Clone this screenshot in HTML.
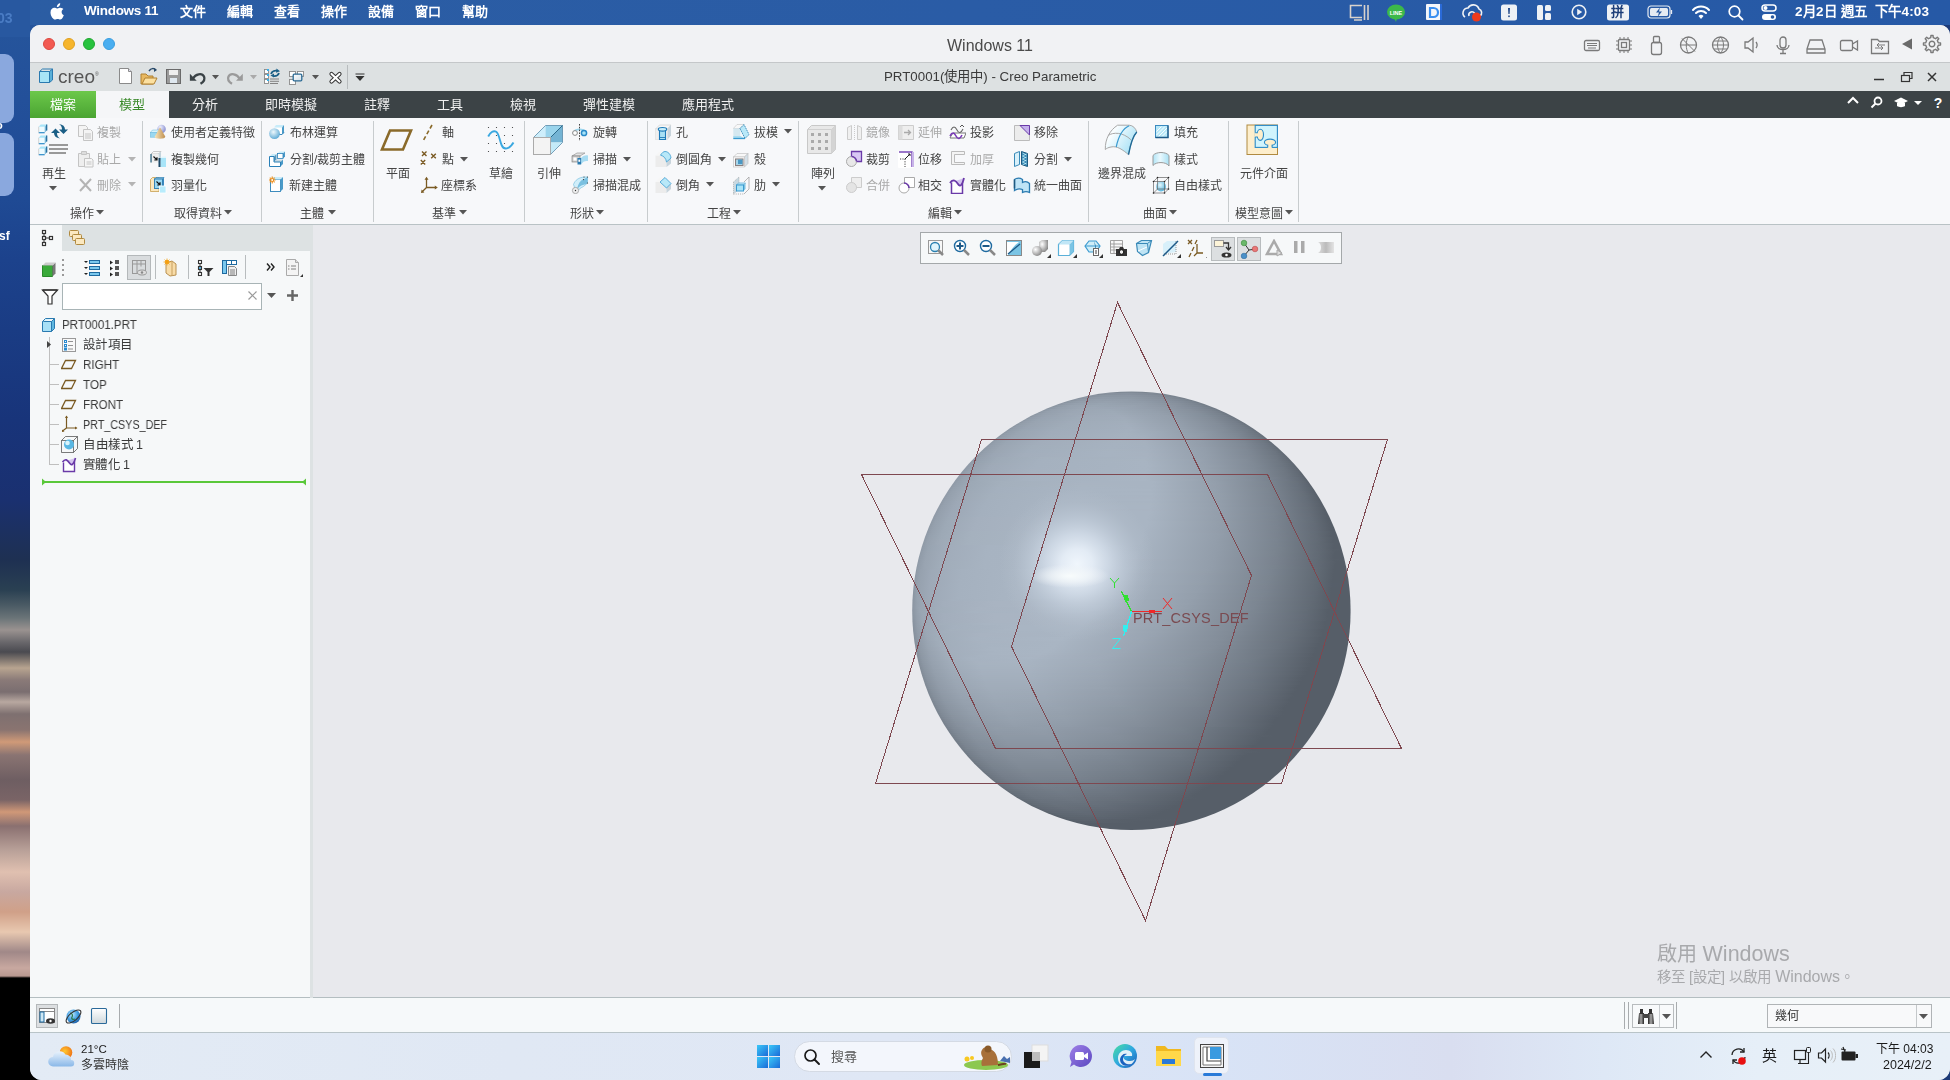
<!DOCTYPE html>
<html lang="zh-TW"><head><meta charset="utf-8">
<style>
*{margin:0;padding:0;box-sizing:border-box}
html,body{width:1950px;height:1080px;overflow:hidden;font-family:"Liberation Sans",sans-serif;}
body{position:relative;background:#1c3a78}
.a{position:absolute}
.t{position:absolute;white-space:nowrap;line-height:1;will-change:transform}
#desk{left:0;top:0;width:40px;height:1080px;background:linear-gradient(180deg,#26569c 0px,#23509a 100px,#1f4a94 200px,#1c428c 260px,#1a3c84 330px,#18347a 420px,#1a3070 500px,#1e3052 560px,#2a4052 590px,#4a5a64 605px,#6a7478 618px,#9a9290 630px,#6a686c 642px,#4a4a50 652px,#b8a490 668px,#8a7a78 680px,#7a6e70 692px,#b8a8a0 702px,#7e7070 714px,#8a7470 730px,#d09a78 742px,#8a7472 755px,#6e5e62 780px,#7a6466 800px,#d09878 812px,#8a7070 826px,#b8a098 850px,#e0c0b0 872px,#c8a8a0 892px,#d0a088 912px,#e8c8b0 932px,#a08888 952px,#c8a8a0 968px,#b89890 976px,#000 978px,#000 1080px)}
#menubar{left:0;top:0;width:1950px;height:25px;background:linear-gradient(90deg,#2b5da3,#2a5ca6 50%,#2659a6)}
#win{left:30px;top:25px;width:1920px;height:1055px;background:#f1f2f4;border-radius:10px 10px 12px 12px;overflow:hidden}
#titlebar{left:0;top:0;width:1920px;height:38px;background:#f1f2f4;border-bottom:1px solid #c4c7c9}
#creobar{left:0;top:38px;width:1920px;height:28px;background:#dde1e2}
#tabs{left:0;top:66px;width:1920px;height:27px;background:#3c4346}
#ribbon{left:0;top:93px;width:1920px;height:107px;background:#f7f8fa;border-bottom:1px solid #b9c2c5}
#tree{left:0;top:200px;width:280px;height:772px;background:#f6f8f9}
#gfx{left:282px;top:200px;width:1640px;height:772px;background:#e8e9ed}
#status{left:0;top:972px;width:1920px;height:36px;background:#f6f9fa;border-top:1px solid #b4bec1;border-bottom:1px solid #b9c4c8}
#taskbar{left:0;top:1008px;width:1920px;height:47px;background:linear-gradient(90deg,#e3ebf5 0%,#e0e8f4 25%,#dfe7f5 45%,#d8e3f6 62%,#d9def0 74%,#dee8f6 82%,#e6eff8 90%,#e8f0f8 100%)}
.mb{top:5px;font-size:13px;color:#fff;font-weight:bold}
.dot{width:12px;height:12px;border-radius:50%}
.tb{top:7px;font-size:13px;color:#f0f0f0}
</style></head><body>
<div id="desk" class="a">
<div class="a" style="left:-10px;top:54px;width:24px;height:69px;border-radius:9px;background:#8aa8de"></div>
<div class="a" style="left:-10px;top:133px;width:24px;height:63px;border-radius:9px;background:#8aa8de"></div>
<div class="t" style="left:-4px;top:120px;font-size:11px;color:#fff;font-weight:bold">o</div>
<div class="t" style="left:-1px;top:230px;font-size:12px;color:#fff;font-weight:bold">sf</div>
</div>
<div id="menubar" class="a">
  <div class="a" style="left:0;top:0;width:30px;height:37px;background:#2858a0"></div><div class="t" style="left:-3px;top:11px;font-size:14px;color:#4a7cc4;font-weight:bold">03</div>
  <svg class="a" style="left:50px;top:3px" width="15" height="17" viewBox="0 0 15 17"><path fill="#fff" d="M10.2 0.3c0.1 1-0.3 2-0.9 2.7-0.6 0.7-1.5 1.2-2.4 1.1-0.1-1 0.3-2 0.9-2.6 0.6-0.7 1.6-1.2 2.4-1.2zM13.4 5.9c-0.1 0.1-1.8 1-1.8 3.1 0 2.4 2.2 3.3 2.2 3.3s-1.5 4.3-3.5 4.3c-1 0-1.6-0.6-2.6-0.6-1.1 0-1.7 0.6-2.6 0.6C3.2 16.6 0.5 13 0.5 9.4c0-3 2-4.600 3.8-4.6 1.1 0 2 0.7 2.7 0.7 0.6 0 1.6-0.8 2.8-0.8 0.5 0 2.3 0 3.6 1.2z"/></svg>
  <div class="t" style="left:84px;top:4px;font-size:13.5px;font-weight:bold;color:#fff;letter-spacing:-0.3px">Windows 11</div>
  <div class="t mb" style="left:180px">文件</div>
  <div class="t mb" style="left:227px">編輯</div>
  <div class="t mb" style="left:274px">查看</div>
  <div class="t mb" style="left:321px">操作</div>
  <div class="t mb" style="left:368px">設備</div>
  <div class="t mb" style="left:415px">窗口</div>
  <div class="t mb" style="left:462px">幫助</div>
  <svg class="a" style="left:1348px;top:3px" width="22" height="19" viewBox="0 0 22 19"><g fill="none" stroke="#d8d2cc" stroke-width="1.6"><path d="M14 2.5H2.5V14.5H14"/><path d="M16.5 2v15M20 2v15M6 17H14"/></g></svg>
  <svg class="a" style="left:1386px;top:4px" width="20" height="18" viewBox="0 0 20 18"><ellipse cx="10" cy="8" rx="9" ry="7.5" fill="#3cb84a"/><path d="M8 14l2 4 1-4z" fill="#3cb84a"/><text x="10" y="10.5" font-size="5.5" font-weight="bold" fill="#fff" text-anchor="middle" font-family="Liberation Sans">LINE</text></svg>
  <svg class="a" style="left:1425px;top:3px" width="18" height="19" viewBox="0 0 18 19"><rect x="1" y="1" width="15" height="16" fill="#f4f6fa" rx="1"/><rect x="15" y="1" width="2" height="16" fill="#2a6ad8"/><path d="M5 5h3.5a4.5 4.5 0 010 9H5z" fill="none" stroke="#3a8ff0" stroke-width="2.2"/></svg>
  <svg class="a" style="left:1461px;top:3px" width="23" height="20" viewBox="0 0 23 20"><g fill="none" stroke="#f0f2f5" stroke-width="1.6"><path d="M4 14a5 5 0 013-9 6 6 0 0111 1 4 4 0 011 7"/><path d="M8 13a3 3 0 016-2"/></g><circle cx="15.5" cy="14" r="4.5" fill="#ee3a1c"/></svg>
  <svg class="a" style="left:1500px;top:4px" width="18" height="17" viewBox="0 0 18 17"><rect x="1" y="0.5" width="16" height="16" rx="2.5" fill="#eef1f5"/><path d="M8 4h2l-.4 6h-1.2z" fill="#234a8a"/><rect x="8.2" y="11.5" width="1.6" height="1.6" fill="#234a8a"/></svg>
  <svg class="a" style="left:1536px;top:4px" width="17" height="17" viewBox="0 0 17 17"><rect x="1" y="1" width="6" height="15" rx="1.5" fill="#eef1f5"/><rect x="9" y="1" width="6" height="6" rx="1.5" fill="#eef1f5"/><rect x="9" y="9" width="6" height="7" rx="1.5" fill="#eef1f5"/></svg>
  <svg class="a" style="left:1570px;top:3px" width="18" height="18" viewBox="0 0 18 18"><circle cx="9" cy="9" r="6.8" fill="none" stroke="#eef1f5" stroke-width="1.6"/><path d="M7.2 5.8v6.4l5-3.2z" fill="#eef1f5"/></svg>
  <svg class="a" style="left:1606px;top:4px" width="24" height="17" viewBox="0 0 24 17"><rect x="1" y="0.5" width="22" height="16" rx="2.5" fill="#eef1f5"/></svg>
  <div class="t" style="left:1611px;top:5px;font-size:13px;color:#1c3d78;font-weight:bold">拼</div>
  <svg class="a" style="left:1647px;top:5px" width="28" height="15" viewBox="0 0 28 15"><rect x="1" y="1" width="22" height="12" rx="3" fill="none" stroke="#e6ebf2" stroke-width="1.2"/><rect x="3" y="3" width="18" height="8" rx="1.5" fill="#e6ebf2"/><path d="M24.5 5v4" stroke="#e6ebf2" stroke-width="1.3"/><path d="M13 2.5l-4 5h3l-1.5 4.5 4.5-5.5h-3z" fill="#2a5aa0"/></svg>
  <svg class="a" style="left:1691px;top:4px" width="20" height="16" viewBox="0 0 20 16"><g fill="none" stroke="#fff" stroke-width="2" stroke-linecap="round"><path d="M2 6a11 11 0 0116 0"/><path d="M5 9a7 7 0 0110 0"/></g><path d="M7.5 12a3.5 3.5 0 015 0L10 15z" fill="#fff"/></svg>
  <svg class="a" style="left:1727px;top:4px" width="18" height="17" viewBox="0 0 18 17"><circle cx="7.5" cy="7.5" r="5.3" fill="none" stroke="#fff" stroke-width="1.7"/><path d="M11.5 11.5l4 4" stroke="#fff" stroke-width="1.8" stroke-linecap="round"/></svg>
  <svg class="a" style="left:1761px;top:4px" width="16" height="17" viewBox="0 0 16 17"><rect x="1" y="1" width="14" height="6" rx="3" fill="none" stroke="#fff" stroke-width="1.5"/><circle cx="4.5" cy="4" r="2" fill="#fff"/><rect x="1" y="10" width="14" height="6" rx="3" fill="#fff"/><circle cx="11.5" cy="13" r="1.8" fill="#2a5aa0"/></svg>
  <div class="t" style="left:1795px;top:5px;font-size:13.5px;color:#fff;font-weight:bold;letter-spacing:0.2px">2月2日 週五&nbsp; 下午4:03</div>
</div>
<div id="win" class="a">
  <div id="titlebar" class="a">
    <div class="a dot" style="left:13px;top:13px;background:#f25a52;border:0.5px solid #dd4840"></div>
    <div class="a dot" style="left:33px;top:13px;background:#f6b52c;border:0.5px solid #e0a020"></div>
    <div class="a dot" style="left:53px;top:13px;background:#28c23e;border:0.5px solid #20a830"></div>
    <div class="a dot" style="left:73px;top:13px;background:#4aaef0;border:0.5px solid #3a9ee0"></div>
    <div class="t" style="left:917px;top:12.5px;font-size:16px;color:#4a4a4a">Windows 11</div>
    <svg class="a" style="left:1550px;top:8px" width="370" height="24" viewBox="0 0 370 24"><g fill="none" stroke="#7a7a7a" stroke-width="1.3">
      <rect x="4.5" y="7.5" width="15" height="10" rx="1.5"/><path d="M7 10.5h10M7 12.5h10M8 15h8" stroke-width="1"/>
      <rect x="38.5" y="6.5" width="11" height="11" rx="1"/><rect x="41.5" y="9.5" width="5" height="5"/><path d="M40 4v2M44 4v2M48 4v2M40 18v2M44 18v2M48 18v2M36 8h2M36 12h2M36 16h2M50 8h2M50 12h2M50 16h2" stroke-width="1"/>
      <rect x="71.5" y="9.5" width="10" height="12" rx="2"/><rect x="73.5" y="3.5" width="6" height="6" rx="1"/>
      <circle cx="108.5" cy="12" r="8"/><path d="M102 5.5l13 13M101 12h15M108.5 4c-3 3-3 13 0 16" stroke-width="1"/>
      <circle cx="140.5" cy="12" r="8"/><path d="M132.5 12h16M140.5 4c-4 4-4 12 0 16M140.5 4c4 4 4 12 0 16M134 8h13M134 16h13" stroke-width="1"/>
      <g transform="translate(-30,0)"><path d="M195 9h3l5-4v14l-5-4h-3z"/><path d="M206 9c1.5 2 1.5 4 0 6"/>
      <rect x="230" y="4" width="6" height="11" rx="3"/><path d="M227 12c0 6 12 6 12 0M233 17v3M230 20.5h6"/>
      <path d="M257 16l3-9h12l3 9v4h-18z"/><path d="M257 16h18"/>
      <rect x="290.5" y="7.5" width="12" height="10" rx="1.5"/><path d="M302.5 11l5-3v9l-5-3"/>
      <path d="M321.5 6.5h6l2 2h9v12h-17z"/><path d="M325 15h8M331 13l2 2-2 2M335 12h-8M329 10l-2 2 2 2" stroke-width="1"/>
    </g></g>
    <path d="M322 11l10-5.5v11z" fill="#6a6a6a"/>
    <g transform="translate(352,11)" fill="none" stroke="#7a7a7a" stroke-width="1.4"><circle r="2.8"/><path d="M-1.25 -6.28 L-1.09 -8.53 L1.09 -8.53 L1.25 -6.28 L3.56 -5.32 L5.26 -6.80 L6.80 -5.26 L5.32 -3.56 L6.28 -1.25 L8.53 -1.09 L8.53 1.09 L6.28 1.25 L5.32 3.56 L6.80 5.26 L5.26 6.80 L3.56 5.32 L1.25 6.28 L1.09 8.53 L-1.09 8.53 L-1.25 6.28 L-3.56 5.32 L-5.26 6.80 L-6.80 5.26 L-5.32 3.56 L-6.28 1.25 L-8.53 1.09 L-8.53 -1.09 L-6.28 -1.25 L-5.32 -3.56 L-6.80 -5.26 L-5.26 -6.80 L-3.56 -5.32Z" stroke-linejoin="round"/></g>
    </svg>
  </div>
  <div id="creobar" class="a">
    <svg class="a" style="left:8px;top:5px" width="16" height="16" viewBox="0 0 16 16"><path d="M1.5 3.5h10v11h-10z" fill="#a8e4f6" stroke="#2a7ab0"/><path d="M11.5 3.5l3-2.5v11l-3 2.5z" fill="#5ab0d8" stroke="#2a7ab0"/><path d="M1.5 3.5l3-2.5h10" fill="none" stroke="#2a7ab0"/></svg>
    <div class="t" style="left:28px;top:4px;font-size:19px;color:#555;letter-spacing:0px">creo<span style="font-size:5px;vertical-align:top;position:relative;top:5px">&#174;</span></div>
    <svg class="a" style="left:88px;top:0" width="260" height="28" viewBox="0 0 260 28">
      <path d="M1.5 5.5h9l3 3v12h-12z" fill="#fff" stroke="#8a8a8a"/><path d="M10.5 5.5v3h3" fill="#dde" stroke="#8a8a8a"/>
      <path d="M23 11h5l2 2h5v8h-12z" fill="#e8b860" stroke="#b08030"/><path d="M24 21l3-6h12l-3 6z" fill="#fce0a0" stroke="#b08030"/><path d="M31 8c2-3 5-3 7-1" fill="none" stroke="#2a4a6a" stroke-width="1.5"/><path d="M36 5l3 2-3 2z" fill="#2a4a6a"/>
      <rect x="48.5" y="6.5" width="14" height="14" fill="#9a9a9a" stroke="#6a6a6a"/><rect x="51" y="7" width="9" height="5" fill="#eee"/><rect x="52" y="15" width="7" height="5" fill="#dfe8f0"/>
      <path d="M75 15.5C77.5 11 84 9.5 86 13.5C87.3 16.5 85.5 19 82.5 20.8" fill="none" stroke="#3a4246" stroke-width="2.3"/><path d="M71.9 10.8v7h6.8z" fill="#3a4246"/><path d="M94 12h7l-3.5 4.3z" fill="#555"/>
      <path d="M121.5 15.5C119 11 112.5 9.5 110.5 13.5C109.2 16.5 111 19 114 20.8" fill="none" stroke="#9a9a9a" stroke-width="2.3"/><path d="M124.8 10.8v7h-6.8z" fill="#9a9a9a"/><path d="M132 12h7l-3.5 4.3z" fill="#aaa"/>
      <g fill="#fff" stroke="#8a8a8a" stroke-width="0.9"><rect x="146.5" y="6.5" width="4" height="4"/><rect x="146.5" y="11.5" width="4" height="4"/><rect x="146.5" y="16.5" width="4" height="4"/></g><g fill="#3ab0e8"><rect x="149" y="6" width="2" height="2"/><rect x="149" y="11" width="2" height="2"/><rect x="149" y="16" width="2" height="2"/></g><path d="M152 16h9M152 18.3h9M152 20.5h8" stroke="#777" stroke-width="0.9"/>
      <path d="M153 11c1-3 4-4 7-3" fill="none" stroke="#1b5f86" stroke-width="1.8"/><path d="M158.5 5.5l3.5 2.8-4 1.5z" fill="#1b5f86"/><path d="M161 10c-1 2.5-3.5 3.5-6 3" fill="none" stroke="#1b5f86" stroke-width="1.8"/><path d="M156 14.5l-3.5-2 3.5-2z" fill="#1b5f86"/>
      <g fill="#fff" stroke="#8a8a8a" stroke-width="0.9"><rect x="171.5" y="8.5" width="6" height="5"/><rect x="179.5" y="8.5" width="6" height="5"/><rect x="171.5" y="16.5" width="6" height="5"/></g><defs><linearGradient id="wg" x1="0" y1="0" x2="1" y2="1"><stop offset="0" stop-color="#fff"/><stop offset="1" stop-color="#cfdde6"/></linearGradient></defs><rect x="175.2" y="11.2" width="8.6" height="6.6" rx="1" fill="url(#wg)" stroke="#2a6a94" stroke-width="1.3"/><path d="M194 12h7l-3.5 4.3z" fill="#555"/>
      <path d="M213.5 11l8 7.5M221.5 11l-8 7.5" stroke="#333" stroke-width="4.2" stroke-linecap="round"/><path d="M213.5 11l8 7.5M221.5 11l-8 7.5" stroke="#fff" stroke-width="2.2" stroke-linecap="round"/>
    </svg>
    <div class="a" style="left:317px;top:2px;width:1px;height:24px;background:#b8bcbe"></div>
    <svg class="a" style="left:325px;top:10px" width="10" height="10" viewBox="0 0 10 10"><path d="M0.5 1h9" stroke="#333" stroke-width="1"/><path d="M0.5 3h9l-4.5 5z" fill="#333"/></svg>
    <div class="t" style="left:854px;top:7px;font-size:13.3px;color:#3a3a3a">PRT0001(使用中) - Creo Parametric</div>
    <svg class="a" style="left:1840px;top:4px" width="80" height="20" viewBox="0 0 80 20"><path d="M4 12.5h10" stroke="#333" stroke-width="1.5"/><rect x="31.5" y="8.5" width="8" height="6" fill="none" stroke="#333" stroke-width="1.2"/><path d="M34 8.5v-3h8v6h-2.5" fill="none" stroke="#333" stroke-width="1.2"/><path d="M58 6l8 8M66 6l-8 8" stroke="#333" stroke-width="1.5"/></svg>
  </div>
  <div id="tabs" class="a">
    <div class="a" style="left:0;top:0;width:66px;height:27px;background:linear-gradient(180deg,#6cc84a,#4aa432)"></div>
    <div class="t tb" style="left:20px;color:#fff">檔案</div>
    <div class="a" style="left:66px;top:0;width:73px;height:27px;background:#f5f6f8"></div>
    <div class="t tb" style="left:89px;color:#3a8a2a">模型</div>
    <div class="t tb" style="left:162px">分析</div>
    <div class="t tb" style="left:235px">即時模擬</div>
    <div class="t tb" style="left:334px">註釋</div>
    <div class="t tb" style="left:407px">工具</div>
    <div class="t tb" style="left:480px">檢視</div>
    <div class="t tb" style="left:553px">彈性建模</div>
    <div class="t tb" style="left:652px">應用程式</div>
    <svg class="a" style="left:1812px;top:2px" width="108" height="20" viewBox="0 0 108 20"><path d="M6 10l5-5 5 5" fill="none" stroke="#fff" stroke-width="2"/><circle cx="36" cy="8" r="3.5" fill="none" stroke="#fff" stroke-width="1.8"/><path d="M33.5 10.5l-4 4" stroke="#fff" stroke-width="2"/><path d="M52 8l7-3.5 7 3.5-7 3.5z" fill="#fff"/><path d="M55 10v3c2 1.5 6 1.5 8 0v-3" fill="#fff"/><path d="M72 8h8l-4 4z" fill="#fff"/><text x="96" y="15" font-size="14" font-weight="bold" fill="#fff" text-anchor="middle" font-family="Liberation Sans">?</text></svg>
  </div>
  <div id="ribbon" class="a"></div>
  <div id="tree" class="a"></div>
  <div id="gfx" class="a"></div>
  <div id="status" class="a"></div>
  <div id="taskbar" class="a"></div>
</div>
<div class="a" style="left:142px;top:121px;width:1px;height:101px;background:#c8ccce"></div>
<div class="a" style="left:261px;top:121px;width:1px;height:101px;background:#c8ccce"></div>
<div class="a" style="left:373px;top:121px;width:1px;height:101px;background:#c8ccce"></div>
<div class="a" style="left:524px;top:121px;width:1px;height:101px;background:#c8ccce"></div>
<div class="a" style="left:647px;top:121px;width:1px;height:101px;background:#c8ccce"></div>
<div class="a" style="left:798px;top:121px;width:1px;height:101px;background:#c8ccce"></div>
<div class="a" style="left:1088px;top:121px;width:1px;height:101px;background:#c8ccce"></div>
<div class="a" style="left:1228px;top:121px;width:1px;height:101px;background:#c8ccce"></div>
<div class="a" style="left:1298px;top:121px;width:1px;height:101px;background:#c8ccce"></div>
<div class="t" style="left:69.5px;top:207.5px;font-size:12px;color:#444;">操作</div>
<svg class="a" style="left:96px;top:210.0px" width="8" height="5" viewBox="0 0 8 5"><path d="M0 0h8L4 4.5z" fill="#555"/></svg>
<div class="t" style="left:173.5px;top:207.5px;font-size:12px;color:#444;">取得資料</div>
<svg class="a" style="left:224px;top:210.0px" width="8" height="5" viewBox="0 0 8 5"><path d="M0 0h8L4 4.5z" fill="#555"/></svg>
<div class="t" style="left:300px;top:207.5px;font-size:12px;color:#444;">主體</div>
<svg class="a" style="left:328px;top:210.0px" width="8" height="5" viewBox="0 0 8 5"><path d="M0 0h8L4 4.5z" fill="#555"/></svg>
<div class="t" style="left:432px;top:207.5px;font-size:12px;color:#444;">基準</div>
<svg class="a" style="left:459px;top:210.0px" width="8" height="5" viewBox="0 0 8 5"><path d="M0 0h8L4 4.5z" fill="#555"/></svg>
<div class="t" style="left:569.5px;top:207.5px;font-size:12px;color:#444;">形狀</div>
<svg class="a" style="left:596px;top:210.0px" width="8" height="5" viewBox="0 0 8 5"><path d="M0 0h8L4 4.5z" fill="#555"/></svg>
<div class="t" style="left:706.5px;top:207.5px;font-size:12px;color:#444;">工程</div>
<svg class="a" style="left:733px;top:210.0px" width="8" height="5" viewBox="0 0 8 5"><path d="M0 0h8L4 4.5z" fill="#555"/></svg>
<div class="t" style="left:928px;top:207.5px;font-size:12px;color:#444;">編輯</div>
<svg class="a" style="left:954px;top:210.0px" width="8" height="5" viewBox="0 0 8 5"><path d="M0 0h8L4 4.5z" fill="#555"/></svg>
<div class="t" style="left:1143px;top:207.5px;font-size:12px;color:#444;">曲面</div>
<svg class="a" style="left:1169px;top:210.0px" width="8" height="5" viewBox="0 0 8 5"><path d="M0 0h8L4 4.5z" fill="#555"/></svg>
<div class="t" style="left:1235px;top:207.5px;font-size:12px;color:#444;">模型意圖</div>
<svg class="a" style="left:1285px;top:210.0px" width="8" height="5" viewBox="0 0 8 5"><path d="M0 0h8L4 4.5z" fill="#555"/></svg>
<svg class="a" style="left:38px;top:124px" width="31" height="32" viewBox="0 0 31 32"><path d="M0.7 2.7h6v6h-6z" fill="#eefbff"/><path d="M0.7 2.7l2-2.2h6l-2 2.2z" fill="#a8e4f8"/><path d="M0.7 8.7h6" stroke="#2a8ac8" stroke-width="1.2"/><path d="M0.7 2.7v6" stroke="#c8c8c8" stroke-width=".8"/><path d="M6.7 2.7l2-2.2v6l-2 2.2z" fill="#7ab8d8"/><path d="M8.7 0.5v6" stroke="#1e6a9a" stroke-width="1.2"/><path d="M0.7 13.7h6v6h-6z" fill="#eefbff"/><path d="M0.7 13.7l2-2.2h6l-2 2.2z" fill="#a8e4f8"/><path d="M0.7 19.7h6" stroke="#2a8ac8" stroke-width="1.2"/><path d="M0.7 13.7v6" stroke="#c8c8c8" stroke-width=".8"/><path d="M6.7 13.7l2-2.2v6l-2 2.2z" fill="#7ab8d8"/><path d="M8.7 11.5v6" stroke="#1e6a9a" stroke-width="1.2"/><path d="M0.7 24.7h6v6h-6z" fill="#eefbff"/><path d="M0.7 24.7l2-2.2h6l-2 2.2z" fill="#a8e4f8"/><path d="M0.7 30.7h6" stroke="#2a8ac8" stroke-width="1.2"/><path d="M0.7 24.7v6" stroke="#c8c8c8" stroke-width=".8"/><path d="M6.7 24.7l2-2.2v6l-2 2.2z" fill="#7ab8d8"/><path d="M8.7 22.5v6" stroke="#1e6a9a" stroke-width="1.2"/><path d="M17.5 4.5l-4.5 4.5h3c0 3 2 5 6 5.5-2-1-3-3-3-5.5h3z" fill="#1b5f86"/><path d="M25.5 10l4.5-4.5h-3c0-3-2-5-6-5.5 2 1 3 3 3 5.5h-3z" fill="#1b5f86"/><path d="M11 21h19M11 25h19M11 29h17" stroke="#999" stroke-width="1.8"/></svg>
<div class="t" style="left:41.5px;top:167.5px;font-size:12px;color:#444;">再生</div>
<svg class="a" style="left:49px;top:185.5px" width="8" height="5" viewBox="0 0 8 5"><path d="M0 0h8L4 4.5z" fill="#555"/></svg>
<svg class="a" style="left:77px;top:124px" width="17" height="17" viewBox="0 0 17 17"><path d="M1.5 1.5h7l2 2v9h-9z" fill="#f4f4f4" stroke="#c4c4c4"/><path d="M6.5 5.5h7l2 2v9h-9z" fill="#f4f4f4" stroke="#c4c4c4"/><path d="M8 10h6M8 12h6M8 14h6" stroke="#c4c4c4"/></svg>
<div class="t" style="left:97px;top:126.5px;font-size:12px;color:#a9a9a9;">複製</div>
<svg class="a" style="left:77px;top:150px" width="17" height="18" viewBox="0 0 17 18"><path d="M1.5 3.5h11v13h-11z" fill="#eee" stroke="#c4c4c4"/><path d="M4.5 1.5h5v3h-5z" fill="#ddd" stroke="#c4c4c4"/><path d="M7.5 8.5h7l1.5 1.5v7h-8.5z" fill="#f6f6f6" stroke="#c4c4c4"/><path d="M9.5 12h5M9.5 14h5" stroke="#c4c4c4"/></svg>
<div class="t" style="left:97px;top:154.0px;font-size:12px;color:#a9a9a9;">貼上</div>
<svg class="a" style="left:128px;top:156.5px" width="8" height="5" viewBox="0 0 8 5"><path d="M0 0h8L4 4.5z" fill="#b4b4b4"/></svg>
<svg class="a" style="left:78px;top:177px" width="15" height="16" viewBox="0 0 15 16"><path d="M2 2l11 12M13 2L2 14" stroke="#b4b4b4" stroke-width="2"/></svg>
<div class="t" style="left:97px;top:179.7px;font-size:12px;color:#a9a9a9;">刪除</div>
<svg class="a" style="left:128px;top:182.2px" width="8" height="5" viewBox="0 0 8 5"><path d="M0 0h8L4 4.5z" fill="#b4b4b4"/></svg>
<svg class="a" style="left:150px;top:124px" width="17" height="17" viewBox="0 0 17 17"><defs><radialGradient id="usp" cx="0.35" cy="0.3" r="0.7"><stop offset="0" stop-color="#f0f2ff"/><stop offset="1" stop-color="#8a90d0"/></radialGradient><linearGradient id="ucn" x1="0" x2="1"><stop offset="0" stop-color="#f8e4b8"/><stop offset="1" stop-color="#c09050"/></linearGradient></defs><circle cx="11.5" cy="5" r="4.3" fill="url(#usp)"/><path d="M0.3 8.5L2.5 6H9.5L7 8.5z" fill="#d8f4fc" stroke="#6ab8dc" stroke-width=".5"/><rect x="0.3" y="8.5" width="6.7" height="4.7" fill="#9ad8f0" stroke="#6ab8dc" stroke-width=".5"/><path d="M10 3.2L4.8 12.6A5.2 2.2 0 0 0 15.2 12.6z" fill="url(#ucn)"/></svg>
<div class="t" style="left:171px;top:126.5px;font-size:12px;color:#444;">使用者定義特徵</div>
<svg class="a" style="left:150px;top:150px" width="17" height="18" viewBox="0 0 17 18"><path d="M1 4L3.5 1.5H11L8.5 4z" fill="#f8f8f8" stroke="#aaa" stroke-width=".6"/><path d="M8.5 4L11 1.5V10L8.5 12.5z" fill="#c4d4dc"/><rect x="0.5" y="4" width="8" height="8.5" fill="#eee"/><rect x="0.3" y="4" width="1.5" height="8.5" fill="#4a7890"/><path d="M3.5 6.5l3.2 3.2M7 7.3v2.7H4.3" fill="none" stroke="#111" stroke-width="1.2"/><path d="M10.5 8L12 6.5H16V8z" fill="#e0f6fd"/><rect x="10.5" y="8" width="5.5" height="9" fill="#a8e4f8"/><rect x="8.5" y="8" width="2" height="9" fill="#1e4a6a"/></svg>
<div class="t" style="left:171px;top:154.0px;font-size:12px;color:#444;">複製幾何</div>
<svg class="a" style="left:150px;top:176px" width="17" height="18" viewBox="0 0 17 18"><path d="M0.5 3.5L2.5 1.5H9V15.5H0.5z" fill="#fbe8c0" stroke="#c8a050" stroke-width=".8"/><path d="M4.5 3L6 1.5H14L12.5 3z" fill="#c8eefa" stroke="#2a7ab0" stroke-width=".7"/><path d="M12.5 3L14 1.5V11L12.5 12.5z" fill="#3a8ac0"/><rect x="4.5" y="3" width="8" height="9.5" fill="#9ad8f2" stroke="#2a7ab0" stroke-width=".9"/><path d="M6.5 5.5l3.2 3.2M10 6.3V9H7.3" fill="none" stroke="#111" stroke-width="1.2"/><rect x="9.5" y="10" width="6.5" height="7" fill="#b8ecfc" stroke="#fff" stroke-width=".8"/></svg>
<div class="t" style="left:171px;top:179.7px;font-size:12px;color:#444;">羽量化</div>
<svg class="a" style="left:269px;top:124px" width="17" height="17" viewBox="0 0 17 17"><defs><radialGradient id="bsp" cx="0.4" cy="0.35" r="0.7"><stop offset="0" stop-color="#eef8fc"/><stop offset="1" stop-color="#5aa8d4"/></radialGradient></defs><rect x="5" y="3.5" width="8" height="7" fill="#fff"/><path d="M5 3.5L7 1H15L13 3.5z" fill="#c8ecfa"/><path d="M13 3.5L15 1V8.5L13 10.5z" fill="#4a9ac8"/><path d="M5 10.5H13L15 8.5" fill="none" stroke="#2a80b8" stroke-width=".9"/><circle cx="5.5" cy="9.6" r="5.4" fill="url(#bsp)"/></svg>
<div class="t" style="left:289.5px;top:126.5px;font-size:12px;color:#444;">布林運算</div>
<svg class="a" style="left:269px;top:150px" width="17" height="17" viewBox="0 0 17 17"><path d="M8.5 3.5L10.5 1.5H16L14 3.5z" fill="#c8ecfa"/><path d="M14 3.5L16 1.5V6.5L14 8.5z" fill="#4a9ac8"/><rect x="8.5" y="3.5" width="5.5" height="5" fill="#fff" stroke="#2a80b8" stroke-width=".8"/><path d="M0.5 6.5L3 4H7.5L5 6.5z" fill="#c8ecfa"/><path d="M5 6.5L7.5 4V9.5L5 12z" fill="#5a9ac0"/><path d="M5 12L7.5 9.5H14L11.5 12z" fill="#c8d8e0"/><path d="M11.5 12L14 9.5V14L11.5 16.5z" fill="#4a9ac8"/><path d="M0.5 6.5H5V12H11.5V16.5H0.5z" fill="#fff" stroke="#2a80b8" stroke-width="1"/></svg>
<div class="t" style="left:289.5px;top:154.0px;font-size:12px;color:#444;">分割/裁剪主體</div>
<svg class="a" style="left:269px;top:176px" width="17" height="18" viewBox="0 0 17 18"><rect x="1.5" y="3.5" width="10" height="12" fill="#fff" stroke="#2a80b8" stroke-width=".9"/><path d="M1.5 3.5L4 1H14L11.5 3.5z" fill="#c8ecfa"/><path d="M11.5 3.5L14 1V13L11.5 15.5z" fill="#4a9ac8"/><path d="M5.30 4.00L6.60 4.00M4.68 5.48L5.60 6.40M3.20 6.10L3.20 7.40M1.72 5.48L0.80 6.40M1.10 4.00L-0.20 4.00M1.72 2.52L0.80 1.60M3.20 1.90L3.20 0.60M4.68 2.52L5.60 1.60" stroke="#f08a10" stroke-width="1.1"/><circle cx="3.2" cy="4" r="1.5" fill="#fff" stroke="#f08a10" stroke-width="1.1"/></svg>
<div class="t" style="left:289px;top:179.7px;font-size:12px;color:#444;">新建主體</div>
<svg class="a" style="left:380px;top:128px" width="33" height="24" viewBox="0 0 33 24"><path d="M10 2.5h21L23 21.5H2z" fill="none" stroke="#8a6a2a" stroke-width="2.6"/></svg>
<div class="t" style="left:385.5px;top:167.5px;font-size:12px;color:#444;">平面</div>
<svg class="a" style="left:421px;top:124px" width="14" height="18" viewBox="0 0 14 18"><path d="M11 1L2 17" stroke="#8a6a2a" stroke-width="1.6" stroke-dasharray="4 2.5"/></svg>
<div class="t" style="left:441.5px;top:126.5px;font-size:12px;color:#444;">軸</div>
<svg class="a" style="left:420px;top:150px" width="18" height="17" viewBox="0 0 18 17"><g stroke="#7a5a22" stroke-width="1.4"><path d="M2 1.5l4.5 4.5M6.5 1.5L2 6M11.2 3.7l4.6 4.6M15.8 3.7l-4.6 4.6M0.8 10l4.4 4.4M5.2 10l-4.4 4.4"/></g></svg>
<div class="t" style="left:441.5px;top:154.0px;font-size:12px;color:#444;">點</div>
<svg class="a" style="left:460px;top:156.5px" width="8" height="5" viewBox="0 0 8 5"><path d="M0 0h8L4 4.5z" fill="#555"/></svg>
<svg class="a" style="left:420px;top:176px" width="19" height="19" viewBox="0 0 19 19"><g stroke="#7a5a22" stroke-width="1.3" fill="none"><path d="M6.5 3v8.5h9M6.5 11.5L2.2 15.8"/></g><path d="M6.5 0.8l-2 3h4zM17.8 11.5l-3-2v4zM1 17l3.4-.6-2.8-2.8z" fill="#7a5a22"/></svg>
<div class="t" style="left:441px;top:179.7px;font-size:12px;color:#444;">座標系</div>
<svg class="a" style="left:487px;top:126px" width="28" height="28" viewBox="0 0 28 28"><g fill="#333"><circle cx="1.5" cy="1.5" r=".6"/><circle cx="1.5" cy="17.5" r=".6"/><circle cx="1.5" cy="25.5" r=".6"/><circle cx="9.5" cy="1.5" r=".6"/><circle cx="9.5" cy="9.5" r=".6"/><circle cx="9.5" cy="17.5" r=".6"/><circle cx="9.5" cy="25.5" r=".6"/><circle cx="17.5" cy="1.5" r=".6"/><circle cx="17.5" cy="9.5" r=".6"/><circle cx="17.5" cy="17.5" r=".6"/><circle cx="17.5" cy="25.5" r=".6"/><circle cx="25.5" cy="1.5" r=".6"/><circle cx="25.5" cy="9.5" r=".6"/><circle cx="25.5" cy="17.5" r=".6"/><circle cx="25.5" cy="25.5" r=".6"/></g><path d="M1.2 10.5C3 6.5 6.5 4 9.2 5.8 12 7.6 12.8 15 14.8 19.5 16.8 24 22.5 23.5 26.5 16.6" fill="none" stroke="#3aa8e0" stroke-width="1.9"/></svg>
<div class="t" style="left:489px;top:167.5px;font-size:12px;color:#444;">草繪</div>
<svg class="a" style="left:532px;top:124px" width="33" height="32" viewBox="0 0 33 32"><path d="M1.5 13.5L13.5 1.5V13.5z" fill="#cdeefb"/><path d="M13.5 1.5H30.5L18.5 13.5H13.5z" fill="#9ad4ec"/><path d="M18.5 13.5L30.5 1.5V18.6H18.5z" fill="#74b4d4"/><path d="M18.5 18.6H30.5L18.5 30.5z" fill="#c4eaf8"/><path d="M1.5 13.5L13.5 1.5H30.5V18.5L18.5 30.5" fill="none" stroke="#5a8aa8" stroke-width=".8"/><path d="M18.5 13.5L30.5 1.5" stroke="#2a6a8a" stroke-width="1"/><rect x="1.5" y="13.5" width="17" height="17" fill="#f3f3f3" stroke="#aaa"/></svg>
<div class="t" style="left:536.5px;top:167.5px;font-size:12px;color:#444;">引伸</div>
<svg class="a" style="left:571px;top:124px" width="18" height="17" viewBox="0 0 18 17"><path d="M2 7.8C4 3.5 13 3.5 15.5 7.8L14.5 8.5C12 5.5 5.5 5.5 3 8.5z" fill="#8ad0ec" opacity=".85"/><path d="M8.5 0v17" stroke="#444" stroke-width="1" stroke-dasharray="1.6 1.2"/><circle cx="4" cy="9" r="2.4" fill="#fff" stroke="#888" stroke-width="1"/><circle cx="13" cy="9" r="2.6" fill="#a8e4f8" stroke="#2a8ac8" stroke-width="1.5"/></svg>
<div class="t" style="left:592.5px;top:126.5px;font-size:12px;color:#444;">旋轉</div>
<svg class="a" style="left:571px;top:150px" width="18" height="17" viewBox="0 0 18 17"><path d="M1 6L6 3H14L9 6z" fill="#e4e4e4" stroke="#888" stroke-width=".6"/><rect x="1" y="6" width="8" height="6" fill="#cfcfcf" stroke="#777" stroke-width=".6"/><rect x="2.5" y="7.5" width="3" height="3" fill="#fff"/><path d="M10 8C12 6 14 5 17 5.5V11C14 10.5 12 11.5 10 14.5z" fill="#a8dcf2"/><rect x="6.5" y="8" width="3.6" height="6.5" fill="#2a7ab0"/><rect x="7.4" y="9.6" width="1.8" height="2.2" fill="#fff"/></svg>
<div class="t" style="left:592.5px;top:154.0px;font-size:12px;color:#444;">掃描</div>
<svg class="a" style="left:623px;top:156.5px" width="8" height="5" viewBox="0 0 8 5"><path d="M0 0h8L4 4.5z" fill="#555"/></svg>
<svg class="a" style="left:571px;top:176px" width="18" height="18" viewBox="0 0 18 18"><path d="M2.5 8.5C4 4 8 1.5 13 1H16.5V7L12.5 10.5C9 12 7 14 5.5 16.5z" fill="#d0eefa" stroke="#6ab8dc" stroke-width=".6"/><path d="M6 14C7.5 11 10 9 15.5 8L16.5 7V1L12.5 3.5C10 4 7 7 6 14z" fill="#7ac0e0"/><circle cx="4.5" cy="14.5" r="3.1" fill="#eee" stroke="#999" stroke-width=".8"/><g fill="#333"><circle cx="4.5" cy="14.5" r=".7"/><circle cx="13" cy="1" r=".6"/><circle cx="16.5" cy="1" r=".6"/><circle cx="16.5" cy="7" r=".6"/><circle cx="12.5" cy="3.6" r=".6"/></g></svg>
<div class="t" style="left:592.5px;top:179.7px;font-size:12px;color:#444;">掃描混成</div>
<svg class="a" style="left:655px;top:124px" width="17" height="17" viewBox="0 0 17 17"><path d="M0.5 5L4.5 1H16L12.5 5z" fill="#f6f6f6" stroke="#ccc" stroke-width=".6"/><path d="M12.5 5L16 1V11.5L12.5 15.5z" fill="#c8d4dc"/><rect x="0.5" y="5" width="12" height="10.5" fill="#efefef" stroke="#ddd" stroke-width=".6"/><path d="M4.5 6.5h6v9h-6z" fill="#a8e0f4" stroke="#1e7ab8" stroke-width="1.1"/><ellipse cx="7.5" cy="5.3" rx="4.2" ry="1.8" fill="#c8eefa" stroke="#1e7ab8" stroke-width="1.1"/><path d="M4.5 13.5h6" stroke="#1e7ab8" stroke-width=".9"/></svg>
<div class="t" style="left:675.5px;top:126.5px;font-size:12px;color:#444;">孔</div>
<svg class="a" style="left:655px;top:150px" width="17" height="18" viewBox="0 0 17 18"><path d="M0.5 5.5H5.5C9 6 11 8.5 11.5 12V17H0.5z" fill="#ececec"/><path d="M0.5 5.5L4 2H9.5L5.5 5.5z" fill="#f6f6f6"/><path d="M11.5 12L16 8V13.5L11.5 17z" fill="#c8d4dc"/><path d="M5.5 5.2C7 2.8 8.5 1.5 10 1.5 13 1.5 15.5 4 16 8L11.5 12C11 8.5 9 6 5.5 5.2z" fill="#b8e8f8" stroke="#3a9ad0" stroke-width=".8"/></svg>
<div class="t" style="left:675.5px;top:154.0px;font-size:12px;color:#444;">倒圓角</div>
<svg class="a" style="left:718px;top:156.5px" width="8" height="5" viewBox="0 0 8 5"><path d="M0 0h8L4 4.5z" fill="#555"/></svg>
<svg class="a" style="left:655px;top:176px" width="17" height="18" viewBox="0 0 17 18"><path d="M0.5 6H5L11.5 12V17H0.5z" fill="#ececec"/><path d="M0.5 6L5 1.5H10L5 6z" fill="#f6f6f6"/><path d="M11.5 12L16 7.5V13L11.5 17z" fill="#c8d4dc"/><path d="M5 6L10 1.5L16 7.5L11.5 12z" fill="#b8e8f8" stroke="#3a9ad0" stroke-width=".8"/></svg>
<div class="t" style="left:675.5px;top:179.7px;font-size:12px;color:#444;">倒角</div>
<svg class="a" style="left:706px;top:182.2px" width="8" height="5" viewBox="0 0 8 5"><path d="M0 0h8L4 4.5z" fill="#555"/></svg>
<svg class="a" style="left:733px;top:124px" width="17" height="17" viewBox="0 0 17 17"><path d="M0.3 4.5L4 0.5H11L7 4.5z" fill="#f8f8f8" stroke="#bbb" stroke-width=".5"/><rect x="0.3" y="4.5" width="7" height="9" fill="#d4e8f0"/><path d="M0.3 12H7.5L12 14.5H0.3z" fill="#a8dcf0"/><path d="M7 4.5L11 0.5 16 10.5 12 14.5z" fill="#b8e8f8" stroke="#3a8ab8" stroke-width=".9" stroke-dasharray="1.6 .7"/><path d="M0.3 14.5H12" stroke="#3a9ad0" stroke-width="1.3"/></svg>
<div class="t" style="left:753.5px;top:126.5px;font-size:12px;color:#444;">拔模</div>
<svg class="a" style="left:784px;top:129.0px" width="8" height="5" viewBox="0 0 8 5"><path d="M0 0h8L4 4.5z" fill="#555"/></svg>
<svg class="a" style="left:733px;top:150px" width="17" height="18" viewBox="0 0 17 18"><path d="M0.5 7L4 3.5H15L11.5 7z" fill="#f8f8f8" stroke="#bbb" stroke-width=".6"/><path d="M11.5 7L15 3.5V13.5L11.5 17z" fill="#d4e0e8" stroke="#bbb" stroke-width=".6"/><rect x="0.5" y="7" width="11" height="10" fill="#fff" stroke="#bbb" stroke-width=".6"/><rect x="2.5" y="9" width="7.5" height="6.5" fill="#a8d8ec" stroke="#8a8080" stroke-width="1.1"/><rect x="5" y="9.6" width="4.4" height="4.4" fill="#4a98c4"/></svg>
<div class="t" style="left:753.5px;top:154.0px;font-size:12px;color:#444;">殼</div>
<svg class="a" style="left:733px;top:176px" width="17" height="19" viewBox="0 0 17 19"><path d="M0.5 6L6 1V13L0.5 18z" fill="#c8d8e0" stroke="#999" stroke-width=".6" stroke-dasharray="1 1"/><path d="M11 6L16 1V13L11 18" fill="none" stroke="#999" stroke-width=".7"/><path d="M0.5 18H11" stroke="#999" stroke-width=".8" stroke-dasharray="1 1.2"/><path d="M3.5 9L5.5 7H12.5L10.5 9z" fill="#d0f0fa" stroke="#3a9ad0" stroke-width=".6"/><path d="M10.5 9L12.5 7V13L10.5 15z" fill="#7ac0e0"/><rect x="3.5" y="9" width="7" height="6" fill="#a8e4f8" stroke="#3a9ad0" stroke-width="1"/></svg>
<div class="t" style="left:753.5px;top:179.7px;font-size:12px;color:#444;">肋</div>
<svg class="a" style="left:772px;top:182.2px" width="8" height="5" viewBox="0 0 8 5"><path d="M0 0h8L4 4.5z" fill="#555"/></svg>
<svg class="a" style="left:806px;top:124px" width="32" height="32" viewBox="0 0 32 32"><path d="M1.5 5.5l4-4h24v24l-4 4h-24z" fill="#e8e8e8" stroke="#c8c8c8"/><path d="M1.5 5.5h24v24M25.5 5.5l4-4" fill="none" stroke="#d0d0d0"/><path d="M25.5 5.5l4-4v24l-4 4z" fill="#d4d4d4"/><g fill="#aaa"><rect x="5" y="9" width="3" height="3"/><rect x="12" y="9" width="3" height="3"/><rect x="19" y="9" width="3" height="3"/><rect x="5" y="16" width="3" height="3"/><rect x="12" y="16" width="3" height="3"/><rect x="19" y="16" width="3" height="3"/><rect x="5" y="23" width="3" height="3"/><rect x="12" y="23" width="3" height="3"/><rect x="19" y="23" width="3" height="3"/></g></svg>
<div class="t" style="left:810.5px;top:167.5px;font-size:12px;color:#444;">陣列</div>
<svg class="a" style="left:818px;top:185.5px" width="8" height="5" viewBox="0 0 8 5"><path d="M0 0h8L4 4.5z" fill="#555"/></svg>
<svg class="a" style="left:846px;top:124px" width="17" height="17" viewBox="0 0 17 17"><path d="M1.5 3.5l4-2v14h-4z" fill="#f0f0f0" stroke="#ccc"/><path d="M15.5 3.5l-4-2v14h4z" fill="#f0f0f0" stroke="#ccc"/><path d="M8.5 1v15" stroke="#ccc" stroke-dasharray="1 1"/></svg>
<div class="t" style="left:866px;top:126.5px;font-size:12px;color:#a9a9a9;">鏡像</div>
<svg class="a" style="left:845px;top:150px" width="18" height="18" viewBox="0 0 18 18"><path d="M6.5 1.5h10v10h-10z" fill="#d8c8f4" stroke="#6a3aa8" stroke-width="1.3"/><circle cx="6.5" cy="11.5" r="5" fill="#e8e8e8" stroke="#aaa"/><path d="M6.5 6.5a5 5 0 0 1 5 5" fill="none" stroke="#6a3aa8" stroke-width="1.5"/></svg>
<div class="t" style="left:866px;top:154.0px;font-size:12px;color:#444;">裁剪</div>
<svg class="a" style="left:845px;top:176px" width="18" height="18" viewBox="0 0 18 18"><path d="M6.5 1.5h10v10h-10z" fill="#eee" stroke="#ccc"/><circle cx="6.5" cy="11.5" r="5" fill="#e4e4e4" stroke="#ccc"/></svg>
<div class="t" style="left:866px;top:179.7px;font-size:12px;color:#a9a9a9;">合併</div>
<svg class="a" style="left:898px;top:124px" width="17" height="17" viewBox="0 0 17 17"><path d="M0.5 1.5h15v14h-15z" fill="#eee" stroke="#ccc"/><path d="M0.5 1.5h4v14h-4z" fill="#ddd"/><path d="M6 8.5h6M10 6l2.5 2.5L10 11" fill="none" stroke="#aaa" stroke-width="1.3"/></svg>
<div class="t" style="left:918px;top:126.5px;font-size:12px;color:#a9a9a9;">延伸</div>
<svg class="a" style="left:898px;top:150px" width="17" height="18" viewBox="0 0 17 18"><path d="M0.5 1.5h13l2 2v14h-15z" fill="#fff" stroke="#fff"/><path d="M1 2h13v15" fill="none" stroke="#7a4ab8" stroke-width="1.4"/><path d="M14 2h2v15h-2z" fill="#c8b4e8"/><path d="M2 9h5v8" fill="none" stroke="#444" stroke-dasharray="1.2 1.2"/><path d="M7 9l5-5M10 4h2v2" stroke="#222" fill="none"/></svg>
<div class="t" style="left:918px;top:154.0px;font-size:12px;color:#444;">位移</div>
<svg class="a" style="left:898px;top:176px" width="17" height="18" viewBox="0 0 17 18"><path d="M6.5 1.5h10v10h-10z" fill="#fff" stroke="#aaa"/><circle cx="6" cy="12" r="5" fill="#fff" stroke="#aaa"/><path d="M6 7a5 5 0 0 1 5 5" fill="none" stroke="#6a3aa8" stroke-width="1.6"/></svg>
<div class="t" style="left:918px;top:179.7px;font-size:12px;color:#444;">相交</div>
<svg class="a" style="left:949px;top:124px" width="17" height="17" viewBox="0 0 17 17"><path d="M2 12l2-3h13l-2 5H1z" fill="#fff" stroke="#777"/><path d="M2 6c2-4 4-4 6 0s4 3 6-1" fill="none" stroke="#666" stroke-width="1.1"/><path d="M1 12c2-4 4-4 6 0s4 3 6-1" fill="none" stroke="#7a3ab8" stroke-width="1.6"/><path d="M11 3l2-2 2 2" fill="none" stroke="#555"/></svg>
<div class="t" style="left:970px;top:126.5px;font-size:12px;color:#444;">投影</div>
<svg class="a" style="left:950px;top:150px" width="15" height="15" viewBox="0 0 15 15"><path d="M1.5 1.5h13v3h-10v8h10v2h-13z" fill="#f4f4f4" stroke="#bbb"/></svg>
<div class="t" style="left:970px;top:154.0px;font-size:12px;color:#a9a9a9;">加厚</div>
<svg class="a" style="left:949px;top:176px" width="17" height="18" viewBox="0 0 17 18"><path d="M2.5 6.5v11h11V6" fill="#fff" stroke="#6a3aa8" stroke-width="1.5"/><path d="M1 7c3-5 6-2 8 1s4 2 6-6" fill="#d4c4ef" stroke="#6a3aa8" stroke-width="1.8"/></svg>
<div class="t" style="left:970px;top:179.7px;font-size:12px;color:#444;">實體化</div>
<svg class="a" style="left:1014px;top:124px" width="17" height="17" viewBox="0 0 17 17"><path d="M0.5 1.5h15v15h-15z" fill="#ececec" stroke="#bbb"/><path d="M6 1.5h9.5V11z" fill="#c4b0ec" stroke="#6a3aa8"/></svg>
<div class="t" style="left:1034px;top:126.5px;font-size:12px;color:#444;">移除</div>
<svg class="a" style="left:1013px;top:150px" width="18" height="18" viewBox="0 0 18 18"><path d="M1.5 3.5l5-2v13l-5 2z" fill="#d8f0fa" stroke="#3a8ab8"/><path d="M8.5 1.5l6 2v13l-6-2z" fill="#3a8ab8" stroke="#1e5a80"/><path d="M9.5 3l4 2M9.5 6l4 2M9.5 9l4 2M9.5 12l4 2M13.5 4l-4 2M13.5 7l-4 2M13.5 10l-4 2M13.5 13l-4 2" stroke="#dff" stroke-width=".6"/></svg>
<div class="t" style="left:1034px;top:154.0px;font-size:12px;color:#444;">分割</div>
<svg class="a" style="left:1064px;top:156.5px" width="8" height="5" viewBox="0 0 8 5"><path d="M0 0h8L4 4.5z" fill="#555"/></svg>
<svg class="a" style="left:1013px;top:176px" width="18" height="18" viewBox="0 0 18 18"><path d="M1.5 3.5c3-2 5-2 8 0v3c2-1 5-1 7 1v9c-2-1-5-1-7 0v-3c-3-1-5-1-8 1z" fill="#bfe4f6" stroke="#2a7ab0" stroke-width="1.3"/><path d="M1.5 3.5v9" stroke="#1e5a80" stroke-width="1.5"/></svg>
<div class="t" style="left:1034px;top:179.7px;font-size:12px;color:#444;">統一曲面</div>
<svg class="a" style="left:1103px;top:124px" width="36" height="33" viewBox="0 0 36 33"><defs><linearGradient id="bsf" x1="0" y1="0" x2="1" y2="0.6"><stop offset="0.3" stop-color="#f8fdff"/><stop offset="1" stop-color="#a8e2f6"/></linearGradient></defs><path d="M14.6 1.2H26.2C30 1.5 32.5 4 33.8 8 30 12 27.5 20 25.5 30.6 20 26 14 21.5 8 23 5 23.5 3.5 24.5 2.3 25.5 2 15 7 6 14.6 1.2Z" fill="url(#bsf)" stroke="#a8a8a8" stroke-width="1"/><path d="M5.2 11.5C10 8 20 8 28 15.8" fill="none" stroke="#a8a8a8" stroke-width="1"/><path d="M26.2 1.8C21 4 16 10 13.2 23" fill="none" stroke="#3a9ad0" stroke-width="1.2"/><path d="M33.8 8C30 12 27.5 20 25.5 30.6" fill="none" stroke="#1e6a98" stroke-width="1.4"/></svg>
<div class="t" style="left:1097.5px;top:167.5px;font-size:12px;color:#444;">邊界混成</div>
<svg class="a" style="left:1154px;top:124px" width="15" height="15" viewBox="0 0 15 15"><rect x="1.5" y="1.5" width="12.5" height="12" fill="#b8e8f8" stroke="#3a8ac0" stroke-width="1"/><path d="M2.5 7.5l5-5M2.5 11l8.5-8.5M4.5 12.5l8.5-8.5M8 12.5l5-5" stroke="#fff" stroke-width=".9"/><path d="M1.5 13.5H14V1.5" fill="none" stroke="#1e5a88" stroke-width="1.3"/></svg>
<div class="t" style="left:1173.5px;top:126.5px;font-size:12px;color:#444;">填充</div>
<svg class="a" style="left:1152px;top:150px" width="18" height="18" viewBox="0 0 18 18"><defs><linearGradient id="sty" x1="0" x2="1"><stop offset="0" stop-color="#b0e4f6"/><stop offset="0.45" stop-color="#eaf9fe"/><stop offset="1" stop-color="#a8e0f4"/></linearGradient></defs><path d="M1 5.5C4 1.5 14 1.5 17 5.5V16C14 11.5 4 11.5 1 15.5z" fill="url(#sty)" stroke="#999" stroke-width="1"/></svg>
<div class="t" style="left:1173.5px;top:154.0px;font-size:12px;color:#444;">樣式</div>
<svg class="a" style="left:1152px;top:176px" width="18" height="18" viewBox="0 0 18 18"><defs><radialGradient id="fsp" cx="0.4" cy="0.35" r="0.7"><stop offset="0" stop-color="#e8f8fc"/><stop offset="1" stop-color="#4ab0dc"/></radialGradient></defs><circle cx="9" cy="10.5" r="5" fill="url(#fsp)"/><g fill="none" stroke="#666" stroke-width=".7"><rect x="1.5" y="5.5" width="11" height="11.5"/><rect x="5.5" y="1.5" width="11" height="11.5"/><path d="M1.5 5.5l4-4M12.5 5.5l4-4M12.5 17l4-4M1.5 17l4-4"/></g><g fill="#222"><circle cx="1.5" cy="5.5" r=".8"/><circle cx="12.5" cy="5.5" r=".8"/><circle cx="1.5" cy="17" r=".8"/><circle cx="12.5" cy="17" r=".8"/><circle cx="5.5" cy="1.5" r=".8"/><circle cx="16.5" cy="1.5" r=".8"/><circle cx="16.5" cy="13" r=".8"/></g></svg>
<div class="t" style="left:1174px;top:179.7px;font-size:12px;color:#444;">自由樣式</div>
<svg class="a" style="left:1246px;top:124px" width="33" height="32" viewBox="0 0 33 32"><rect x="1" y="1" width="30.5" height="29.5" fill="#fdeecc" stroke="#b08a40"/><rect x="9.2" y="1.4" width="22.2" height="22" fill="#d0f4fd" stroke="#2a8ac8" stroke-width="1.1"/><ellipse cx="14.3" cy="10.8" rx="3.2" ry="5.6" fill="#fdeecc" stroke="#2a8ac8" stroke-width="1.1"/><rect x="8.4" y="8.7" width="4" height="4.3" fill="#fdeecc"/><path d="M9.2 8.7h2.6M9.2 13h2.6" stroke="#2a8ac8" stroke-width="1.1"/><ellipse cx="24" cy="18.3" rx="5.6" ry="3.2" fill="#fdeecc" stroke="#2a8ac8" stroke-width="1.1"/><rect x="21.7" y="20.2" width="4.4" height="4" fill="#fdeecc"/><path d="M21.7 20.8v2.6M26.1 20.8v2.6" stroke="#2a8ac8" stroke-width="1.1"/></svg>
<div class="t" style="left:1240px;top:167.5px;font-size:12px;color:#444;">元件介面</div>
<div class="a" style="left:62px;top:225px;width:251px;height:26px;background:#dde2e3"></div>
<div class="a" style="left:310px;top:251px;width:3px;height:747px;background:#dde2e3"></div>
<svg class="a" style="left:41px;top:229px" width="14" height="18" viewBox="0 0 14 18"><g fill="#fff" stroke="#333" stroke-width="1.2"><rect x="1.5" y="1.5" width="3" height="3"/><rect x="1.5" y="7.5" width="3" height="3"/><rect x="1.5" y="13.5" width="3" height="3"/><rect x="8.5" y="7.5" width="3" height="3"/></g><path d="M3 4.5v3M3 10.5v3M4.5 9h4" stroke="#333"/></svg>
<svg class="a" style="left:68px;top:229px" width="18" height="18" viewBox="0 0 18 18"><g fill="#fbe8c0" stroke="#b08a40"><rect x="1.5" y="1.5" width="9" height="6" rx="1"/><rect x="4.5" y="5.5" width="9" height="6" rx="1"/><rect x="7.5" y="9.5" width="9" height="6" rx="1"/></g></svg>
<svg class="a" style="left:41px;top:261px" width="16" height="16" viewBox="0 0 16 16"><path d="M1.5 4.5h10v11h-10z" fill="#3aaa3a" stroke="#2a8a2a"/><path d="M11.5 4.5l3-3v11l-3 3z" fill="#777"/><path d="M1.5 4.5l3-3h10l-3 3z" fill="#ccc"/></svg>
<svg class="a" style="left:62px;top:258px" width="3" height="22" viewBox="0 0 3 22"><g fill="#999"><rect y="1" width="2" height="2"/><rect y="6" width="2" height="2"/><rect y="11" width="2" height="2"/><rect y="16" width="2" height="2"/></g></svg>
<svg class="a" style="left:83px;top:259px" width="18" height="18" viewBox="0 0 18 18"><g fill="#222"><path d="M1 2h4l-2 2zM1 8h4l-2 2zM1 14h4l-2 2z"/></g><g fill="#7ac8ee" stroke="#1e6aa0"><rect x="6.5" y="1.5" width="10" height="3"/><rect x="6.5" y="7.5" width="10" height="3"/><rect x="6.5" y="13.5" width="10" height="3"/></g></svg>
<svg class="a" style="left:109px;top:259px" width="11" height="18" viewBox="0 0 11 18"><g fill="#222"><path d="M1 1.5l3 2-3 2zM1 7.5l3 2-3 2zM1 13.5l3 2-3 2z"/></g><g fill="#555"><rect x="6" y="1" width="4" height="4"/><rect x="6" y="7" width="4" height="4"/><rect x="6" y="13" width="4" height="4"/></g></svg>
<div class="a" style="left:127px;top:255px;width:24px;height:25px;background:#d9dcde;border:1px solid #b4b8ba"></div>
<svg class="a" style="left:131px;top:259px" width="16" height="18" viewBox="0 0 16 18"><g fill="none" stroke="#999"><rect x="1.5" y="1.5" width="13" height="13"/><path d="M1.5 5h13M6 1.5v13M10 1.5v6"/></g><ellipse cx="11" cy="13.5" rx="4.5" ry="2.5" fill="#ddd" stroke="#999"/><circle cx="11" cy="13.5" r="1.2" fill="#888"/></svg>
<div class="a" style="left:155px;top:255px;width:1px;height:24px;background:#b8bcbe"></div>
<div class="a" style="left:188px;top:255px;width:1px;height:24px;background:#b8bcbe"></div>
<div class="a" style="left:245px;top:255px;width:1px;height:24px;background:#b8bcbe"></div>
<svg class="a" style="left:163px;top:258px" width="16" height="19" viewBox="0 0 16 19"><path d="M3 5l6-2 4 3v11l-6 1-4-3z" fill="#f8dca8" stroke="#b89050"/><path d="M9 3v15" stroke="#c8a060"/><circle cx="4" cy="4" r="2.2" fill="#f8a020"/><path d="M4 0.5v7M0.5 4h7M1.5 1.5l5 5M6.5 1.5l-5 5" stroke="#f0a010" stroke-width=".7"/></svg>
<svg class="a" style="left:197px;top:259px" width="17" height="18" viewBox="0 0 17 18"><g fill="#fff" stroke="#333" stroke-width="1.1"><rect x="1.5" y="1.5" width="3" height="3"/><rect x="1.5" y="7.5" width="3" height="3" fill="#5ab0e0"/><rect x="1.5" y="13.5" width="3" height="3"/></g><path d="M3 4.5v3M3 10.5v3" stroke="#333"/><path d="M6.5 9h10l-4 4v4h-2v-4z" fill="#333"/></svg>
<svg class="a" style="left:222px;top:259px" width="16" height="18" viewBox="0 0 16 18"><g stroke="#1e6aa0"><rect x="0.5" y="1.5" width="4" height="13" fill="#7ac8ee"/><rect x="4.5" y="1.5" width="10" height="4" fill="#fff"/><path d="M9.5 1.5v4"/></g><path d="M6.5 7.5h6l2 2v7h-8z" fill="#eee" stroke="#888"/><path d="M8 11h5M8 13h5M8 15h5" stroke="#666" stroke-width=".8"/></svg>
<svg class="a" style="left:266px;top:262px" width="10" height="10" viewBox="0 0 10 10"><path d="M1 1.5l3 3.5-3 3.5M5 1.5l3 3.5-3 3.5" fill="none" stroke="#222" stroke-width="1.4"/></svg>
<svg class="a" style="left:285px;top:258px" width="19" height="21" viewBox="0 0 19 21"><path d="M1.5 1.5h9l3 3v13h-12z" fill="#f4f4f4" stroke="#aaa"/><path d="M10.5 1.5v3h3" fill="#ddd" stroke="#aaa"/><path d="M3 8h1.5M3 11h1.5M6 8h5M6 11h5" stroke="#666" stroke-width=".8"/><path d="M15 19l3-3v3z" fill="#333"/></svg>
<svg class="a" style="left:41px;top:288px" width="18" height="17" viewBox="0 0 18 17"><path d="M1.5 2h15l-5.5 6v8h-4V8z" fill="#fff" stroke="#333" stroke-width="1.2"/><path d="M1.5 2h15" stroke="#333" stroke-width="1.5"/></svg>
<div class="a" style="left:62px;top:283px;width:200px;height:27px;background:#fff;border:1px solid #a8b4b6"></div>
<svg class="a" style="left:247px;top:290px" width="11" height="11" viewBox="0 0 11 11"><path d="M1.5 1.5l8 8M9.5 1.5l-8 8" stroke="#9a9a9a" stroke-width="1.2"/></svg>
<svg class="a" style="left:267px;top:293px" width="9" height="6" viewBox="0 0 9 6"><path d="M0 0h9L4.5 5z" fill="#555"/></svg>
<svg class="a" style="left:286px;top:289px" width="13" height="13" viewBox="0 0 13 13"><path d="M6.5 1v11M1 6.5h11" stroke="#666" stroke-width="2.4"/></svg>
<svg class="a" style="left:42px;top:318px" width="14" height="14" viewBox="0 0 14 14"><path d="M0.5 3.5h9v10h-9z" fill="#a8e0f6" stroke="#2a7ab0"/><path d="M9.5 3.5l3-3v10l-3 3z" fill="#60b8e0" stroke="#2a7ab0"/><path d="M0.5 3.5l3-3h9" fill="#d8f2fc" stroke="#2a7ab0"/></svg>
<div class="t" style="left:62px;top:318.75px;font-size:12.5px;color:#3a3a3a;transform:scaleX(0.925);transform-origin:0 0">PRT0001.PRT</div>
<div class="a" style="left:49px;top:337px;width:1px;height:128px;background:#bfbfbf"></div>
<div class="a" style="left:50px;top:364px;width:9px;height:1px;background:#bfbfbf"></div>
<div class="a" style="left:50px;top:384px;width:9px;height:1px;background:#bfbfbf"></div>
<div class="a" style="left:50px;top:404px;width:9px;height:1px;background:#bfbfbf"></div>
<div class="a" style="left:50px;top:424px;width:9px;height:1px;background:#bfbfbf"></div>
<div class="a" style="left:50px;top:444px;width:9px;height:1px;background:#bfbfbf"></div>
<div class="a" style="left:50px;top:464px;width:9px;height:1px;background:#bfbfbf"></div>
<svg class="a" style="left:46px;top:340px" width="6" height="9" viewBox="0 0 6 9"><path d="M1 1l4 3.5L1 8z" fill="#444"/></svg>
<svg class="a" style="left:61px;top:337px" width="16" height="16" viewBox="0 0 16 16"><rect x="1.5" y="1.5" width="13" height="13" fill="#f8f8f8" stroke="#999"/><g fill="none" stroke="#2a8ad0"><rect x="3.5" y="3.5" width="2" height="2"/><rect x="3.5" y="7.5" width="2" height="2"/><rect x="3.5" y="11" width="2" height="2"/></g><path d="M7 4.5h5M7 8.5h5M7 12h5" stroke="#777" stroke-width=".8"/></svg>
<div class="t" style="left:82.5px;top:338.75px;font-size:12.5px;color:#3a3a3a;letter-spacing:-0.7px">設計項目</div>
<svg class="a" style="left:61px;top:359px" width="16" height="11" viewBox="0 0 16 11"><path d="M4.5 1.5h10l-4 8H0.5z" fill="none" stroke="#7a5a22" stroke-width="1.3"/></svg>
<div class="t" style="left:82.5px;top:358.75px;font-size:12.5px;color:#3a3a3a;transform:scaleX(0.93);transform-origin:0 0">RIGHT</div>
<svg class="a" style="left:61px;top:379px" width="16" height="11" viewBox="0 0 16 11"><path d="M4.5 1.5h10l-4 8H0.5z" fill="none" stroke="#7a5a22" stroke-width="1.3"/></svg>
<div class="t" style="left:82.5px;top:378.75px;font-size:12.5px;color:#3a3a3a;transform:scaleX(0.93);transform-origin:0 0">TOP</div>
<svg class="a" style="left:61px;top:399px" width="16" height="11" viewBox="0 0 16 11"><path d="M4.5 1.5h10l-4 8H0.5z" fill="none" stroke="#7a5a22" stroke-width="1.3"/></svg>
<div class="t" style="left:82.5px;top:398.75px;font-size:12.5px;color:#3a3a3a;transform:scaleX(0.93);transform-origin:0 0">FRONT</div>
<svg class="a" style="left:61px;top:415px" width="17" height="17" viewBox="0 0 17 17"><path d="M5.5 1v12h10M5.5 13l-4 3" fill="none" stroke="#7a5a22" stroke-width="1.2"/><path d="M4 3l1.5-2.5L7 3zM14 11.5l2.5 1.5-2.5 1.5zM1 14.5l0 2.5 2.5-.5z" fill="#7a5a22"/></svg>
<div class="t" style="left:82.5px;top:418.75px;font-size:12.5px;color:#3a3a3a;transform:scaleX(0.86);transform-origin:0 0">PRT_CSYS_DEF</div>
<svg class="a" style="left:61px;top:436px" width="17" height="17" viewBox="0 0 17 17"><path d="M0.5 4.5l4-4h12v12l-4 4h-12z" fill="none" stroke="#444" stroke-width=".7"/><path d="M0.5 4.5h12v12M12.5 4.5l4-4" fill="none" stroke="#444" stroke-width=".7"/><circle cx="8" cy="8.5" r="5" fill="#5ab8e4"/><circle cx="6.5" cy="7" r="2.3" fill="#d8f4fc"/></svg>
<div class="t" style="left:82.5px;top:438.75px;font-size:12.5px;color:#3a3a3a;letter-spacing:-0.5px">自由樣式 1</div>
<svg class="a" style="left:61px;top:456px" width="17" height="17" viewBox="0 0 17 17"><path d="M2.5 6.5v9h11V5" fill="#fff" stroke="#6a3aa8" stroke-width="1.4"/><path d="M1.5 6c3-4 5-2 7 1s4 2 6-5" fill="#d4c4ef" stroke="#6a3aa8" stroke-width="1.6"/></svg>
<div class="t" style="left:82.5px;top:458.75px;font-size:12.5px;color:#3a3a3a;letter-spacing:-0.6px">實體化 1</div>
<svg class="a" style="left:40px;top:477px" width="268" height="10" viewBox="0 0 268 10"><path d="M2 5h264" stroke="#5ac83a" stroke-width="2"/><path d="M2 1.5v7l4-3.5z" fill="#5ac83a"/><path d="M266 1.5v7l-4-3.5z" fill="#5ac83a"/></svg>
<svg class="a" style="left:312px;top:226px" width="1638" height="771" viewBox="312 226 1638 771">
<defs><linearGradient id="r0"><stop offset="0.000" stop-color="#808a96"/><stop offset="0.229" stop-color="#7e8894"/><stop offset="0.457" stop-color="#818b97"/><stop offset="0.686" stop-color="#7d8793"/><stop offset="0.800" stop-color="#7a848f"/><stop offset="1.000" stop-color="#78828e"/></linearGradient><linearGradient id="r1"><stop offset="0.000" stop-color="#828c98"/><stop offset="0.075" stop-color="#818b97"/><stop offset="0.188" stop-color="#87919d"/><stop offset="0.450" stop-color="#88929f"/><stop offset="0.751" stop-color="#818b97"/><stop offset="0.863" stop-color="#7c8692"/><stop offset="0.901" stop-color="#78828d"/><stop offset="1.000" stop-color="#76808b"/></linearGradient><linearGradient id="r2"><stop offset="0.000" stop-color="#838d99"/><stop offset="0.060" stop-color="#828c99"/><stop offset="0.090" stop-color="#87919e"/><stop offset="0.211" stop-color="#8c97a3"/><stop offset="0.481" stop-color="#8c96a3"/><stop offset="0.752" stop-color="#848e9a"/><stop offset="0.903" stop-color="#7b8591"/><stop offset="0.963" stop-color="#757f8a"/><stop offset="1.000" stop-color="#757e89"/></linearGradient><linearGradient id="r3"><stop offset="0.000" stop-color="#848e9b"/><stop offset="0.026" stop-color="#848e9a"/><stop offset="0.103" stop-color="#8c96a3"/><stop offset="0.259" stop-color="#909ba8"/><stop offset="0.517" stop-color="#8e99a5"/><stop offset="0.776" stop-color="#858f9b"/><stop offset="0.906" stop-color="#7c8691"/><stop offset="0.957" stop-color="#747d89"/><stop offset="1.000" stop-color="#737d88"/></linearGradient><linearGradient id="r4"><stop offset="0.000" stop-color="#858f9b"/><stop offset="0.023" stop-color="#858f9b"/><stop offset="0.092" stop-color="#8e98a5"/><stop offset="0.231" stop-color="#939eab"/><stop offset="0.462" stop-color="#929daa"/><stop offset="0.738" stop-color="#88929f"/><stop offset="0.900" stop-color="#7d8793"/><stop offset="0.946" stop-color="#77818c"/><stop offset="0.969" stop-color="#727c87"/><stop offset="1.000" stop-color="#727b87"/></linearGradient><linearGradient id="r5"><stop offset="0.000" stop-color="#86909c"/><stop offset="0.021" stop-color="#858f9c"/><stop offset="0.063" stop-color="#8d98a4"/><stop offset="0.147" stop-color="#939eab"/><stop offset="0.337" stop-color="#96a1ae"/><stop offset="0.589" stop-color="#909ba8"/><stop offset="0.821" stop-color="#848e9b"/><stop offset="0.926" stop-color="#7a8490"/><stop offset="0.947" stop-color="#77818d"/><stop offset="0.968" stop-color="#717b86"/><stop offset="1.000" stop-color="#717a85"/></linearGradient><linearGradient id="r6"><stop offset="0.000" stop-color="#86919d"/><stop offset="0.019" stop-color="#86909c"/><stop offset="0.058" stop-color="#8f99a6"/><stop offset="0.136" stop-color="#95a0ad"/><stop offset="0.312" stop-color="#98a4b1"/><stop offset="0.565" stop-color="#939eab"/><stop offset="0.799" stop-color="#87919d"/><stop offset="0.935" stop-color="#79838f"/><stop offset="0.955" stop-color="#76808b"/><stop offset="0.974" stop-color="#707a85"/><stop offset="1.000" stop-color="#707984"/></linearGradient><linearGradient id="r7"><stop offset="0.000" stop-color="#87919d"/><stop offset="0.018" stop-color="#86919d"/><stop offset="0.055" stop-color="#909ba7"/><stop offset="0.128" stop-color="#97a2af"/><stop offset="0.274" stop-color="#9aa6b3"/><stop offset="0.511" stop-color="#97a2af"/><stop offset="0.748" stop-color="#8b95a2"/><stop offset="0.912" stop-color="#7c8692"/><stop offset="0.967" stop-color="#737d88"/><stop offset="0.985" stop-color="#6f7883"/><stop offset="1.000" stop-color="#6f7883"/></linearGradient><linearGradient id="r8"><stop offset="0.000" stop-color="#87929e"/><stop offset="0.017" stop-color="#87919d"/><stop offset="0.034" stop-color="#8d98a5"/><stop offset="0.086" stop-color="#95a0ad"/><stop offset="0.258" stop-color="#9ca7b5"/><stop offset="0.448" stop-color="#9aa5b3"/><stop offset="0.689" stop-color="#909aa7"/><stop offset="0.878" stop-color="#808a97"/><stop offset="0.947" stop-color="#77818c"/><stop offset="0.982" stop-color="#6e7783"/><stop offset="1.000" stop-color="#6e7782"/></linearGradient><linearGradient id="r9"><stop offset="0.000" stop-color="#88929e"/><stop offset="0.016" stop-color="#87929e"/><stop offset="0.033" stop-color="#8e99a6"/><stop offset="0.065" stop-color="#95a0ad"/><stop offset="0.213" stop-color="#9ca7b4"/><stop offset="0.376" stop-color="#9da9b6"/><stop offset="0.606" stop-color="#95a0ad"/><stop offset="0.818" stop-color="#87919d"/><stop offset="0.933" stop-color="#7a838f"/><stop offset="0.966" stop-color="#737d88"/><stop offset="0.982" stop-color="#6d7682"/><stop offset="1.000" stop-color="#6d7681"/></linearGradient><linearGradient id="r10"><stop offset="0.000" stop-color="#88939f"/><stop offset="0.016" stop-color="#88929e"/><stop offset="0.031" stop-color="#8f9aa7"/><stop offset="0.063" stop-color="#95a0ad"/><stop offset="0.203" stop-color="#9ca7b5"/><stop offset="0.406" stop-color="#9eaab7"/><stop offset="0.641" stop-color="#949fac"/><stop offset="0.844" stop-color="#858f9b"/><stop offset="0.938" stop-color="#79828e"/><stop offset="0.969" stop-color="#727c87"/><stop offset="0.985" stop-color="#6c7681"/><stop offset="1.000" stop-color="#6c7580"/></linearGradient><linearGradient id="r11"><stop offset="0.000" stop-color="#89939f"/><stop offset="0.015" stop-color="#88929f"/><stop offset="0.030" stop-color="#909ba7"/><stop offset="0.060" stop-color="#95a0ad"/><stop offset="0.195" stop-color="#9da8b5"/><stop offset="0.420" stop-color="#9fabb8"/><stop offset="0.645" stop-color="#95a0ad"/><stop offset="0.840" stop-color="#85909c"/><stop offset="0.945" stop-color="#77818c"/><stop offset="0.990" stop-color="#6b7580"/><stop offset="1.000" stop-color="#6b747f"/></linearGradient><linearGradient id="r12"><stop offset="0.000" stop-color="#8993a0"/><stop offset="0.014" stop-color="#88939f"/><stop offset="0.029" stop-color="#919ba8"/><stop offset="0.087" stop-color="#98a3b0"/><stop offset="0.260" stop-color="#9faab8"/><stop offset="0.447" stop-color="#a0abb9"/><stop offset="0.678" stop-color="#949fac"/><stop offset="0.866" stop-color="#828d99"/><stop offset="0.953" stop-color="#767f8b"/><stop offset="0.982" stop-color="#6d7681"/><stop offset="1.000" stop-color="#6a737e"/></linearGradient><linearGradient id="r13"><stop offset="0.000" stop-color="#8994a0"/><stop offset="0.014" stop-color="#8993a0"/><stop offset="0.028" stop-color="#919ca9"/><stop offset="0.084" stop-color="#98a3b1"/><stop offset="0.251" stop-color="#9fabb8"/><stop offset="0.460" stop-color="#a1acba"/><stop offset="0.683" stop-color="#949fac"/><stop offset="0.864" stop-color="#838d99"/><stop offset="0.948" stop-color="#76808b"/><stop offset="0.976" stop-color="#6f7884"/><stop offset="0.990" stop-color="#6a737e"/><stop offset="1.000" stop-color="#6a737d"/></linearGradient><linearGradient id="r14"><stop offset="0.000" stop-color="#8994a0"/><stop offset="0.013" stop-color="#8993a0"/><stop offset="0.027" stop-color="#919ca9"/><stop offset="0.081" stop-color="#98a4b1"/><stop offset="0.243" stop-color="#9fabb8"/><stop offset="0.472" stop-color="#a1adba"/><stop offset="0.688" stop-color="#949fac"/><stop offset="0.864" stop-color="#838d99"/><stop offset="0.958" stop-color="#747d89"/><stop offset="0.972" stop-color="#707a85"/><stop offset="0.985" stop-color="#6a737e"/><stop offset="1.000" stop-color="#69727d"/></linearGradient><linearGradient id="r15"><stop offset="0.000" stop-color="#8a94a1"/><stop offset="0.013" stop-color="#8994a0"/><stop offset="0.026" stop-color="#929ca9"/><stop offset="0.079" stop-color="#99a4b1"/><stop offset="0.236" stop-color="#a0abb9"/><stop offset="0.471" stop-color="#a2aebb"/><stop offset="0.694" stop-color="#949fac"/><stop offset="0.864" stop-color="#838d99"/><stop offset="0.956" stop-color="#747d89"/><stop offset="0.995" stop-color="#68717c"/><stop offset="1.000" stop-color="#68717c"/></linearGradient><linearGradient id="r16"><stop offset="0.000" stop-color="#8a94a1"/><stop offset="0.013" stop-color="#8a94a0"/><stop offset="0.025" stop-color="#929da9"/><stop offset="0.076" stop-color="#99a4b1"/><stop offset="0.229" stop-color="#a0acb9"/><stop offset="0.484" stop-color="#a3aebc"/><stop offset="0.700" stop-color="#949fac"/><stop offset="0.866" stop-color="#838d99"/><stop offset="0.955" stop-color="#747d89"/><stop offset="0.993" stop-color="#68717b"/><stop offset="1.000" stop-color="#67707b"/></linearGradient><linearGradient id="r17"><stop offset="0.000" stop-color="#8a95a1"/><stop offset="0.012" stop-color="#8a94a1"/><stop offset="0.025" stop-color="#929daa"/><stop offset="0.074" stop-color="#99a4b1"/><stop offset="0.223" stop-color="#a0acb9"/><stop offset="0.484" stop-color="#a3afbd"/><stop offset="0.695" stop-color="#95a0ad"/><stop offset="0.868" stop-color="#828c99"/><stop offset="0.955" stop-color="#747d88"/><stop offset="0.980" stop-color="#6c7580"/><stop offset="0.992" stop-color="#67707b"/><stop offset="1.000" stop-color="#67707a"/></linearGradient><linearGradient id="r18"><stop offset="0.000" stop-color="#8a95a1"/><stop offset="0.012" stop-color="#8994a0"/><stop offset="0.024" stop-color="#929daa"/><stop offset="0.073" stop-color="#99a4b2"/><stop offset="0.206" stop-color="#a0acb9"/><stop offset="0.496" stop-color="#a4afbd"/><stop offset="0.702" stop-color="#95a0ad"/><stop offset="0.871" stop-color="#828c98"/><stop offset="0.956" stop-color="#737c88"/><stop offset="0.980" stop-color="#6c7580"/><stop offset="0.992" stop-color="#666f7a"/><stop offset="1.000" stop-color="#666f7a"/></linearGradient><linearGradient id="r19"><stop offset="0.000" stop-color="#8b95a2"/><stop offset="0.012" stop-color="#8b95a2"/><stop offset="0.024" stop-color="#929daa"/><stop offset="0.071" stop-color="#99a5b2"/><stop offset="0.201" stop-color="#a0acba"/><stop offset="0.497" stop-color="#a4b0be"/><stop offset="0.697" stop-color="#96a1ae"/><stop offset="0.863" stop-color="#838d99"/><stop offset="0.958" stop-color="#727c87"/><stop offset="0.981" stop-color="#6b747f"/><stop offset="0.993" stop-color="#666e79"/><stop offset="1.000" stop-color="#656e79"/></linearGradient><linearGradient id="r20"><stop offset="0.000" stop-color="#8b95a2"/><stop offset="0.012" stop-color="#8c96a3"/><stop offset="0.023" stop-color="#929daa"/><stop offset="0.069" stop-color="#9aa5b2"/><stop offset="0.197" stop-color="#a1acba"/><stop offset="0.486" stop-color="#a4b0be"/><stop offset="0.601" stop-color="#9eaab7"/><stop offset="0.798" stop-color="#8b96a3"/><stop offset="0.925" stop-color="#79828e"/><stop offset="0.971" stop-color="#6e7782"/><stop offset="0.995" stop-color="#656e78"/><stop offset="1.000" stop-color="#656e78"/></linearGradient><linearGradient id="r21"><stop offset="0.000" stop-color="#8b96a2"/><stop offset="0.011" stop-color="#8c97a3"/><stop offset="0.023" stop-color="#929daa"/><stop offset="0.068" stop-color="#9aa5b2"/><stop offset="0.193" stop-color="#a1acba"/><stop offset="0.487" stop-color="#a5b1be"/><stop offset="0.578" stop-color="#a0acba"/><stop offset="0.770" stop-color="#8f9aa6"/><stop offset="0.906" stop-color="#7c8692"/><stop offset="0.974" stop-color="#6d7681"/><stop offset="1.000" stop-color="#646d78"/></linearGradient><linearGradient id="r22"><stop offset="0.000" stop-color="#8b96a2"/><stop offset="0.011" stop-color="#8d97a4"/><stop offset="0.022" stop-color="#939daa"/><stop offset="0.067" stop-color="#9aa5b2"/><stop offset="0.189" stop-color="#a1adba"/><stop offset="0.478" stop-color="#a5b1bf"/><stop offset="0.544" stop-color="#a3afbd"/><stop offset="0.744" stop-color="#929daa"/><stop offset="0.888" stop-color="#7f8995"/><stop offset="0.966" stop-color="#6f7883"/><stop offset="0.988" stop-color="#666f79"/><stop offset="1.000" stop-color="#646c77"/></linearGradient><linearGradient id="r23"><stop offset="0.000" stop-color="#8b96a2"/><stop offset="0.011" stop-color="#8d98a4"/><stop offset="0.022" stop-color="#939eaa"/><stop offset="0.065" stop-color="#9aa5b3"/><stop offset="0.185" stop-color="#a1adba"/><stop offset="0.469" stop-color="#a5b1bf"/><stop offset="0.545" stop-color="#a4afbd"/><stop offset="0.741" stop-color="#929daa"/><stop offset="0.883" stop-color="#808a96"/><stop offset="0.959" stop-color="#707a85"/><stop offset="0.981" stop-color="#6a737d"/><stop offset="0.992" stop-color="#636c77"/><stop offset="1.000" stop-color="#636c76"/></linearGradient><linearGradient id="r24"><stop offset="0.000" stop-color="#8b96a3"/><stop offset="0.011" stop-color="#8d98a5"/><stop offset="0.021" stop-color="#939eab"/><stop offset="0.064" stop-color="#9aa5b3"/><stop offset="0.182" stop-color="#a1adbb"/><stop offset="0.460" stop-color="#a6b1bf"/><stop offset="0.546" stop-color="#a4b0be"/><stop offset="0.739" stop-color="#939eab"/><stop offset="0.888" stop-color="#7e8894"/><stop offset="0.963" stop-color="#6f7883"/><stop offset="0.996" stop-color="#636b76"/><stop offset="1.000" stop-color="#626b76"/></linearGradient><linearGradient id="r25"><stop offset="0.000" stop-color="#8c96a3"/><stop offset="0.011" stop-color="#8d98a5"/><stop offset="0.021" stop-color="#939eab"/><stop offset="0.063" stop-color="#9aa6b3"/><stop offset="0.179" stop-color="#a2adbb"/><stop offset="0.453" stop-color="#a6b2bf"/><stop offset="0.547" stop-color="#a5b0be"/><stop offset="0.747" stop-color="#929daa"/><stop offset="0.894" stop-color="#7d8793"/><stop offset="0.968" stop-color="#6d7681"/><stop offset="0.989" stop-color="#646d77"/><stop offset="1.000" stop-color="#626a75"/></linearGradient><linearGradient id="r26"><stop offset="0.000" stop-color="#8c96a3"/><stop offset="0.010" stop-color="#8e98a5"/><stop offset="0.021" stop-color="#939eab"/><stop offset="0.062" stop-color="#9aa6b3"/><stop offset="0.176" stop-color="#a2adbb"/><stop offset="0.445" stop-color="#a6b2c0"/><stop offset="0.549" stop-color="#a5b1be"/><stop offset="0.745" stop-color="#929daa"/><stop offset="0.890" stop-color="#7e8894"/><stop offset="0.963" stop-color="#6e7783"/><stop offset="0.984" stop-color="#67707b"/><stop offset="0.994" stop-color="#626a75"/><stop offset="1.000" stop-color="#616a74"/></linearGradient><linearGradient id="r27"><stop offset="0.000" stop-color="#8c96a3"/><stop offset="0.010" stop-color="#8e98a5"/><stop offset="0.020" stop-color="#939eab"/><stop offset="0.061" stop-color="#9ba6b3"/><stop offset="0.173" stop-color="#a2aebb"/><stop offset="0.438" stop-color="#a6b2c0"/><stop offset="0.550" stop-color="#a5b1bf"/><stop offset="0.744" stop-color="#939daa"/><stop offset="0.887" stop-color="#7e8894"/><stop offset="0.958" stop-color="#6f7884"/><stop offset="0.978" stop-color="#69727d"/><stop offset="0.999" stop-color="#616974"/><stop offset="1.000" stop-color="#616974"/></linearGradient><linearGradient id="r28"><stop offset="0.000" stop-color="#8c96a3"/><stop offset="0.010" stop-color="#8e99a5"/><stop offset="0.020" stop-color="#939eab"/><stop offset="0.060" stop-color="#9ba6b3"/><stop offset="0.171" stop-color="#a2aebb"/><stop offset="0.432" stop-color="#a6b2c0"/><stop offset="0.552" stop-color="#a5b1bf"/><stop offset="0.743" stop-color="#939eab"/><stop offset="0.884" stop-color="#7f8894"/><stop offset="0.964" stop-color="#6d7681"/><stop offset="0.984" stop-color="#666f7a"/><stop offset="0.994" stop-color="#606973"/><stop offset="1.000" stop-color="#606973"/></linearGradient><linearGradient id="r29"><stop offset="0.000" stop-color="#8c96a3"/><stop offset="0.010" stop-color="#8e99a5"/><stop offset="0.020" stop-color="#939eab"/><stop offset="0.059" stop-color="#9ba6b3"/><stop offset="0.168" stop-color="#a2aebc"/><stop offset="0.436" stop-color="#a7b3c0"/><stop offset="0.554" stop-color="#a6b1bf"/><stop offset="0.742" stop-color="#939eab"/><stop offset="0.881" stop-color="#7f8995"/><stop offset="0.960" stop-color="#6e7782"/><stop offset="0.980" stop-color="#68707b"/><stop offset="0.990" stop-color="#626b75"/><stop offset="1.000" stop-color="#606873"/></linearGradient><linearGradient id="r30"><stop offset="0.000" stop-color="#8c96a3"/><stop offset="0.010" stop-color="#8e99a6"/><stop offset="0.020" stop-color="#939eab"/><stop offset="0.059" stop-color="#9ba6b3"/><stop offset="0.166" stop-color="#a2aebc"/><stop offset="0.430" stop-color="#a7b3c1"/><stop offset="0.547" stop-color="#a6b2c0"/><stop offset="0.742" stop-color="#939eab"/><stop offset="0.888" stop-color="#7d8793"/><stop offset="0.967" stop-color="#6c7580"/><stop offset="0.996" stop-color="#5f6872"/><stop offset="1.000" stop-color="#5f6772"/></linearGradient><linearGradient id="r31"><stop offset="0.000" stop-color="#8c96a3"/><stop offset="0.010" stop-color="#8e99a6"/><stop offset="0.019" stop-color="#939eab"/><stop offset="0.058" stop-color="#9ba6b4"/><stop offset="0.164" stop-color="#a3aebc"/><stop offset="0.424" stop-color="#a7b3c1"/><stop offset="0.549" stop-color="#a7b2c0"/><stop offset="0.742" stop-color="#939eab"/><stop offset="0.886" stop-color="#7d8793"/><stop offset="0.963" stop-color="#6c7580"/><stop offset="0.983" stop-color="#666e79"/><stop offset="0.992" stop-color="#5f6772"/><stop offset="1.000" stop-color="#5f6771"/></linearGradient><linearGradient id="r32"><stop offset="0.000" stop-color="#8c96a3"/><stop offset="0.010" stop-color="#8e99a6"/><stop offset="0.019" stop-color="#949eab"/><stop offset="0.057" stop-color="#9ba6b4"/><stop offset="0.162" stop-color="#a3aebc"/><stop offset="0.419" stop-color="#a7b3c1"/><stop offset="0.552" stop-color="#a7b2c0"/><stop offset="0.742" stop-color="#939eab"/><stop offset="0.885" stop-color="#7e8793"/><stop offset="0.961" stop-color="#6d7681"/><stop offset="1.000" stop-color="#5e6671"/></linearGradient><linearGradient id="r33"><stop offset="0.000" stop-color="#8c96a3"/><stop offset="0.028" stop-color="#96a1ae"/><stop offset="0.085" stop-color="#9eaab7"/><stop offset="0.226" stop-color="#a5b1be"/><stop offset="0.545" stop-color="#a7b3c1"/><stop offset="0.733" stop-color="#949fac"/><stop offset="0.874" stop-color="#7f8995"/><stop offset="0.958" stop-color="#6d7681"/><stop offset="0.987" stop-color="#636b76"/><stop offset="0.996" stop-color="#5e6670"/><stop offset="1.000" stop-color="#5e6670"/></linearGradient><linearGradient id="r34"><stop offset="0.000" stop-color="#8c96a3"/><stop offset="0.028" stop-color="#96a1af"/><stop offset="0.084" stop-color="#9eaab7"/><stop offset="0.223" stop-color="#a5b1bf"/><stop offset="0.539" stop-color="#a8b4c1"/><stop offset="0.706" stop-color="#98a3b0"/><stop offset="0.854" stop-color="#838d99"/><stop offset="0.947" stop-color="#707984"/><stop offset="0.984" stop-color="#646c77"/><stop offset="0.994" stop-color="#5d6670"/><stop offset="1.000" stop-color="#5d6570"/></linearGradient><linearGradient id="r35"><stop offset="0.000" stop-color="#8c96a3"/><stop offset="0.028" stop-color="#96a2af"/><stop offset="0.083" stop-color="#9eaab7"/><stop offset="0.220" stop-color="#a5b1bf"/><stop offset="0.542" stop-color="#a8b4c2"/><stop offset="0.716" stop-color="#96a1af"/><stop offset="0.863" stop-color="#818b97"/><stop offset="0.955" stop-color="#6d7681"/><stop offset="0.982" stop-color="#646d77"/><stop offset="0.992" stop-color="#5f6771"/><stop offset="1.000" stop-color="#5d656f"/></linearGradient><linearGradient id="r36"><stop offset="0.000" stop-color="#8c96a3"/><stop offset="0.027" stop-color="#97a2af"/><stop offset="0.082" stop-color="#9faab7"/><stop offset="0.218" stop-color="#a5b1bf"/><stop offset="0.545" stop-color="#a8b4c2"/><stop offset="0.726" stop-color="#95a0ad"/><stop offset="0.872" stop-color="#7f8995"/><stop offset="0.954" stop-color="#6d7681"/><stop offset="0.981" stop-color="#646d78"/><stop offset="1.000" stop-color="#5c646f"/></linearGradient><linearGradient id="r37"><stop offset="0.000" stop-color="#8c96a3"/><stop offset="0.027" stop-color="#97a2af"/><stop offset="0.081" stop-color="#9faab8"/><stop offset="0.216" stop-color="#a5b1bf"/><stop offset="0.548" stop-color="#a8b4c2"/><stop offset="0.737" stop-color="#949fac"/><stop offset="0.881" stop-color="#7d8793"/><stop offset="0.961" stop-color="#6a737e"/><stop offset="0.988" stop-color="#606973"/><stop offset="1.000" stop-color="#5c646e"/></linearGradient><linearGradient id="r38"><stop offset="0.000" stop-color="#8c96a3"/><stop offset="0.027" stop-color="#97a2af"/><stop offset="0.080" stop-color="#9faab8"/><stop offset="0.213" stop-color="#a5b1bf"/><stop offset="0.543" stop-color="#a8b4c2"/><stop offset="0.712" stop-color="#97a2af"/><stop offset="0.863" stop-color="#808a96"/><stop offset="0.952" stop-color="#6d7681"/><stop offset="0.987" stop-color="#616974"/><stop offset="0.996" stop-color="#5b646e"/><stop offset="1.000" stop-color="#5b636e"/></linearGradient><linearGradient id="r39"><stop offset="0.000" stop-color="#8c96a3"/><stop offset="0.026" stop-color="#97a2af"/><stop offset="0.079" stop-color="#9faab8"/><stop offset="0.211" stop-color="#a6b1bf"/><stop offset="0.546" stop-color="#a8b4c2"/><stop offset="0.722" stop-color="#96a1ae"/><stop offset="0.863" stop-color="#808a96"/><stop offset="0.951" stop-color="#6d7681"/><stop offset="0.986" stop-color="#616974"/><stop offset="0.995" stop-color="#5b636d"/><stop offset="1.000" stop-color="#5b636d"/></linearGradient><linearGradient id="r40"><stop offset="0.000" stop-color="#8c96a3"/><stop offset="0.026" stop-color="#97a2af"/><stop offset="0.079" stop-color="#9faab8"/><stop offset="0.209" stop-color="#a6b1bf"/><stop offset="0.541" stop-color="#a8b4c2"/><stop offset="0.698" stop-color="#99a4b1"/><stop offset="0.846" stop-color="#838d99"/><stop offset="0.942" stop-color="#6f7883"/><stop offset="0.986" stop-color="#616974"/><stop offset="0.994" stop-color="#5a636d"/><stop offset="1.000" stop-color="#5a626d"/></linearGradient><linearGradient id="r41"><stop offset="0.000" stop-color="#8c96a3"/><stop offset="0.026" stop-color="#97a2af"/><stop offset="0.078" stop-color="#9faab8"/><stop offset="0.207" stop-color="#a6b2bf"/><stop offset="0.544" stop-color="#a8b4c2"/><stop offset="0.717" stop-color="#96a1ae"/><stop offset="0.864" stop-color="#7f8995"/><stop offset="0.951" stop-color="#6c7580"/><stop offset="0.985" stop-color="#606973"/><stop offset="0.994" stop-color="#5a626c"/><stop offset="1.000" stop-color="#5a626c"/></linearGradient><linearGradient id="r42"><stop offset="0.000" stop-color="#8c96a3"/><stop offset="0.026" stop-color="#97a2af"/><stop offset="0.077" stop-color="#9fabb8"/><stop offset="0.206" stop-color="#a6b2bf"/><stop offset="0.540" stop-color="#a9b5c2"/><stop offset="0.685" stop-color="#9aa5b3"/><stop offset="0.839" stop-color="#848e9a"/><stop offset="0.942" stop-color="#6e7782"/><stop offset="0.985" stop-color="#606873"/><stop offset="0.994" stop-color="#5a626c"/><stop offset="1.000" stop-color="#59616c"/></linearGradient><linearGradient id="r43"><stop offset="0.000" stop-color="#8c96a3"/><stop offset="0.025" stop-color="#97a2af"/><stop offset="0.076" stop-color="#9fabb8"/><stop offset="0.204" stop-color="#a6b2c0"/><stop offset="0.535" stop-color="#a9b5c3"/><stop offset="0.611" stop-color="#a3aebc"/><stop offset="0.781" stop-color="#8d98a4"/><stop offset="0.909" stop-color="#767f8b"/><stop offset="0.968" stop-color="#666f7a"/><stop offset="0.985" stop-color="#606873"/><stop offset="0.993" stop-color="#59626c"/><stop offset="1.000" stop-color="#59616b"/></linearGradient><linearGradient id="r44"><stop offset="0.000" stop-color="#8c96a3"/><stop offset="0.025" stop-color="#97a2af"/><stop offset="0.076" stop-color="#9fabb8"/><stop offset="0.202" stop-color="#a6b2c0"/><stop offset="0.539" stop-color="#a9b5c3"/><stop offset="0.674" stop-color="#9ca7b4"/><stop offset="0.834" stop-color="#848e9b"/><stop offset="0.935" stop-color="#6f7884"/><stop offset="0.977" stop-color="#636b76"/><stop offset="0.985" stop-color="#5f6872"/><stop offset="0.994" stop-color="#59616b"/><stop offset="1.000" stop-color="#58606b"/></linearGradient><linearGradient id="r45"><stop offset="0.000" stop-color="#8c96a3"/><stop offset="0.017" stop-color="#949fac"/><stop offset="0.050" stop-color="#9ca8b5"/><stop offset="0.142" stop-color="#a4b0bd"/><stop offset="0.368" stop-color="#a8b4c2"/><stop offset="0.560" stop-color="#a8b4c2"/><stop offset="0.743" stop-color="#929daa"/><stop offset="0.877" stop-color="#7c8691"/><stop offset="0.961" stop-color="#68717b"/><stop offset="0.986" stop-color="#5f6771"/><stop offset="0.994" stop-color="#58606a"/><stop offset="1.000" stop-color="#58606a"/></linearGradient><linearGradient id="r46"><stop offset="0.000" stop-color="#8c96a3"/><stop offset="0.017" stop-color="#949fac"/><stop offset="0.050" stop-color="#9ca8b5"/><stop offset="0.141" stop-color="#a4b0bd"/><stop offset="0.365" stop-color="#a9b4c2"/><stop offset="0.555" stop-color="#a8b4c2"/><stop offset="0.738" stop-color="#939eab"/><stop offset="0.878" stop-color="#7b8591"/><stop offset="0.961" stop-color="#67707b"/><stop offset="0.986" stop-color="#5e6671"/><stop offset="0.994" stop-color="#58606a"/><stop offset="1.000" stop-color="#57606a"/></linearGradient><linearGradient id="r47"><stop offset="0.000" stop-color="#8c96a3"/><stop offset="0.016" stop-color="#949fac"/><stop offset="0.049" stop-color="#9ca8b5"/><stop offset="0.140" stop-color="#a4b0bd"/><stop offset="0.362" stop-color="#a9b5c2"/><stop offset="0.559" stop-color="#a8b4c2"/><stop offset="0.740" stop-color="#939daa"/><stop offset="0.880" stop-color="#7b8490"/><stop offset="0.962" stop-color="#666f7a"/><stop offset="0.987" stop-color="#5d6570"/><stop offset="0.995" stop-color="#575f69"/><stop offset="1.000" stop-color="#575f69"/></linearGradient><linearGradient id="r48"><stop offset="0.000" stop-color="#8c96a3"/><stop offset="0.016" stop-color="#95a0ad"/><stop offset="0.049" stop-color="#9ca8b5"/><stop offset="0.139" stop-color="#a4b0be"/><stop offset="0.359" stop-color="#a9b5c3"/><stop offset="0.555" stop-color="#a8b4c2"/><stop offset="0.735" stop-color="#939eab"/><stop offset="0.873" stop-color="#7c8691"/><stop offset="0.955" stop-color="#68717c"/><stop offset="0.988" stop-color="#5c656f"/><stop offset="0.996" stop-color="#575f69"/><stop offset="1.000" stop-color="#575f69"/></linearGradient><linearGradient id="r49"><stop offset="0.000" stop-color="#8c96a3"/><stop offset="0.016" stop-color="#95a0ad"/><stop offset="0.049" stop-color="#9ca8b5"/><stop offset="0.138" stop-color="#a4b0be"/><stop offset="0.357" stop-color="#a9b5c3"/><stop offset="0.551" stop-color="#a9b5c3"/><stop offset="0.729" stop-color="#949fac"/><stop offset="0.867" stop-color="#7d8792"/><stop offset="0.956" stop-color="#67707b"/><stop offset="0.989" stop-color="#5b646e"/><stop offset="0.997" stop-color="#565e68"/><stop offset="1.000" stop-color="#565e68"/></linearGradient><linearGradient id="r50"><stop offset="0.000" stop-color="#8c96a3"/><stop offset="0.016" stop-color="#95a0ad"/><stop offset="0.048" stop-color="#9da8b5"/><stop offset="0.137" stop-color="#a4b0be"/><stop offset="0.354" stop-color="#a9b5c3"/><stop offset="0.555" stop-color="#a8b4c2"/><stop offset="0.732" stop-color="#939eab"/><stop offset="0.869" stop-color="#7c8692"/><stop offset="0.958" stop-color="#676f7a"/><stop offset="0.990" stop-color="#5a626d"/><stop offset="1.000" stop-color="#565e68"/></linearGradient><linearGradient id="r51"><stop offset="0.000" stop-color="#8c96a3"/><stop offset="0.016" stop-color="#95a0ad"/><stop offset="0.048" stop-color="#9da8b5"/><stop offset="0.128" stop-color="#a4b0bd"/><stop offset="0.328" stop-color="#a9b5c3"/><stop offset="0.552" stop-color="#a9b5c3"/><stop offset="0.736" stop-color="#939eaa"/><stop offset="0.871" stop-color="#7b8591"/><stop offset="0.959" stop-color="#666f79"/><stop offset="1.000" stop-color="#565e68"/></linearGradient><linearGradient id="r52"><stop offset="0.000" stop-color="#8c96a3"/><stop offset="0.016" stop-color="#95a0ad"/><stop offset="0.048" stop-color="#9da8b5"/><stop offset="0.127" stop-color="#a4b0bd"/><stop offset="0.326" stop-color="#a9b5c3"/><stop offset="0.556" stop-color="#a8b4c2"/><stop offset="0.739" stop-color="#929daa"/><stop offset="0.874" stop-color="#7b8490"/><stop offset="0.961" stop-color="#656e78"/><stop offset="0.985" stop-color="#5c646f"/><stop offset="0.993" stop-color="#57606a"/><stop offset="1.000" stop-color="#565e68"/></linearGradient><linearGradient id="r53"><stop offset="0.000" stop-color="#8c96a3"/><stop offset="0.016" stop-color="#95a0ad"/><stop offset="0.047" stop-color="#9da8b5"/><stop offset="0.126" stop-color="#a4b0bd"/><stop offset="0.324" stop-color="#a9b5c3"/><stop offset="0.552" stop-color="#a9b4c2"/><stop offset="0.734" stop-color="#939eaa"/><stop offset="0.868" stop-color="#7b8591"/><stop offset="0.955" stop-color="#666f7a"/><stop offset="0.987" stop-color="#5b636d"/><stop offset="0.994" stop-color="#565e68"/><stop offset="1.000" stop-color="#565e68"/></linearGradient><linearGradient id="r54"><stop offset="0.000" stop-color="#8c96a3"/><stop offset="0.016" stop-color="#95a0ad"/><stop offset="0.047" stop-color="#9da8b5"/><stop offset="0.126" stop-color="#a4b0be"/><stop offset="0.322" stop-color="#a9b5c3"/><stop offset="0.549" stop-color="#a9b5c3"/><stop offset="0.730" stop-color="#939eab"/><stop offset="0.871" stop-color="#7b8490"/><stop offset="0.957" stop-color="#656e79"/><stop offset="0.988" stop-color="#5a626c"/><stop offset="0.996" stop-color="#565e68"/><stop offset="1.000" stop-color="#565e68"/></linearGradient><linearGradient id="r55"><stop offset="0.000" stop-color="#8c96a3"/><stop offset="0.016" stop-color="#95a0ad"/><stop offset="0.047" stop-color="#9da8b6"/><stop offset="0.125" stop-color="#a4b0be"/><stop offset="0.320" stop-color="#a9b5c3"/><stop offset="0.554" stop-color="#a8b4c2"/><stop offset="0.733" stop-color="#929daa"/><stop offset="0.873" stop-color="#7a848f"/><stop offset="0.959" stop-color="#646d78"/><stop offset="0.998" stop-color="#565e68"/><stop offset="1.000" stop-color="#565e68"/></linearGradient><linearGradient id="r56"><stop offset="0.000" stop-color="#8c96a3"/><stop offset="0.016" stop-color="#95a0ad"/><stop offset="0.047" stop-color="#9da8b6"/><stop offset="0.124" stop-color="#a4b0be"/><stop offset="0.318" stop-color="#a9b5c3"/><stop offset="0.550" stop-color="#a9b5c2"/><stop offset="0.729" stop-color="#939eab"/><stop offset="0.868" stop-color="#7b8490"/><stop offset="0.954" stop-color="#666e79"/><stop offset="0.985" stop-color="#5b636d"/><stop offset="0.992" stop-color="#565e69"/><stop offset="1.000" stop-color="#565e68"/></linearGradient><linearGradient id="r57"><stop offset="0.000" stop-color="#8c96a3"/><stop offset="0.015" stop-color="#95a0ad"/><stop offset="0.046" stop-color="#9da8b6"/><stop offset="0.123" stop-color="#a4b0be"/><stop offset="0.316" stop-color="#a9b5c3"/><stop offset="0.547" stop-color="#a9b5c3"/><stop offset="0.725" stop-color="#939eab"/><stop offset="0.863" stop-color="#7b8591"/><stop offset="0.956" stop-color="#656d78"/><stop offset="0.995" stop-color="#565e68"/><stop offset="1.000" stop-color="#565e68"/></linearGradient><linearGradient id="r58"><stop offset="0.000" stop-color="#8c96a3"/><stop offset="0.015" stop-color="#95a0ad"/><stop offset="0.046" stop-color="#9da8b6"/><stop offset="0.123" stop-color="#a4b0be"/><stop offset="0.314" stop-color="#a9b5c3"/><stop offset="0.544" stop-color="#a9b5c3"/><stop offset="0.721" stop-color="#949fac"/><stop offset="0.859" stop-color="#7c8692"/><stop offset="0.951" stop-color="#666f79"/><stop offset="0.997" stop-color="#565e68"/><stop offset="1.000" stop-color="#565e68"/></linearGradient><linearGradient id="r59"><stop offset="0.000" stop-color="#8c96a3"/><stop offset="0.015" stop-color="#95a0ad"/><stop offset="0.046" stop-color="#9da8b6"/><stop offset="0.122" stop-color="#a4b0be"/><stop offset="0.313" stop-color="#a9b5c3"/><stop offset="0.549" stop-color="#a9b4c2"/><stop offset="0.725" stop-color="#939eab"/><stop offset="0.862" stop-color="#7b8591"/><stop offset="0.953" stop-color="#656d78"/><stop offset="0.984" stop-color="#5a626c"/><stop offset="0.992" stop-color="#565e68"/><stop offset="1.000" stop-color="#565e68"/></linearGradient><linearGradient id="r60"><stop offset="0.000" stop-color="#8c96a3"/><stop offset="0.015" stop-color="#95a0ad"/><stop offset="0.046" stop-color="#9da8b6"/><stop offset="0.121" stop-color="#a4b0be"/><stop offset="0.311" stop-color="#a9b5c3"/><stop offset="0.546" stop-color="#a9b5c3"/><stop offset="0.728" stop-color="#929daa"/><stop offset="0.865" stop-color="#7a8490"/><stop offset="0.956" stop-color="#636c77"/><stop offset="0.994" stop-color="#565e68"/><stop offset="1.000" stop-color="#565e68"/></linearGradient><linearGradient id="r61"><stop offset="0.000" stop-color="#8c96a3"/><stop offset="0.015" stop-color="#95a0ad"/><stop offset="0.045" stop-color="#9da8b6"/><stop offset="0.121" stop-color="#a4b0be"/><stop offset="0.310" stop-color="#a9b5c3"/><stop offset="0.544" stop-color="#a9b5c3"/><stop offset="0.725" stop-color="#939daa"/><stop offset="0.861" stop-color="#7b8590"/><stop offset="0.951" stop-color="#656d78"/><stop offset="0.989" stop-color="#575f69"/><stop offset="1.000" stop-color="#565e68"/></linearGradient><linearGradient id="r62"><stop offset="0.000" stop-color="#8c96a3"/><stop offset="0.015" stop-color="#95a0ad"/><stop offset="0.045" stop-color="#9da8b6"/><stop offset="0.120" stop-color="#a4b0be"/><stop offset="0.308" stop-color="#a9b5c3"/><stop offset="0.541" stop-color="#a9b5c3"/><stop offset="0.721" stop-color="#939eab"/><stop offset="0.857" stop-color="#7b8591"/><stop offset="0.947" stop-color="#666e79"/><stop offset="0.992" stop-color="#565e68"/><stop offset="1.000" stop-color="#565e68"/></linearGradient><linearGradient id="r63"><stop offset="0.000" stop-color="#8c96a3"/><stop offset="0.015" stop-color="#95a0ad"/><stop offset="0.045" stop-color="#9da9b6"/><stop offset="0.120" stop-color="#a5b0be"/><stop offset="0.307" stop-color="#a9b5c3"/><stop offset="0.539" stop-color="#a9b5c3"/><stop offset="0.718" stop-color="#939eab"/><stop offset="0.860" stop-color="#7a8490"/><stop offset="0.950" stop-color="#646d78"/><stop offset="0.987" stop-color="#575f69"/><stop offset="1.000" stop-color="#565e68"/></linearGradient><linearGradient id="r64"><stop offset="0.000" stop-color="#8b96a3"/><stop offset="0.015" stop-color="#95a0ad"/><stop offset="0.045" stop-color="#9da9b6"/><stop offset="0.119" stop-color="#a5b0be"/><stop offset="0.305" stop-color="#a9b5c3"/><stop offset="0.536" stop-color="#a9b5c3"/><stop offset="0.715" stop-color="#939eab"/><stop offset="0.856" stop-color="#7b8590"/><stop offset="0.946" stop-color="#656e79"/><stop offset="0.990" stop-color="#565e68"/><stop offset="1.000" stop-color="#565e68"/></linearGradient><linearGradient id="r65"><stop offset="0.000" stop-color="#8b96a2"/><stop offset="0.015" stop-color="#95a0ad"/><stop offset="0.044" stop-color="#9da9b6"/><stop offset="0.119" stop-color="#a5b0be"/><stop offset="0.304" stop-color="#a9b5c3"/><stop offset="0.541" stop-color="#a9b5c3"/><stop offset="0.719" stop-color="#939eaa"/><stop offset="0.860" stop-color="#7a838f"/><stop offset="0.949" stop-color="#646d77"/><stop offset="0.986" stop-color="#575f69"/><stop offset="1.000" stop-color="#565e68"/></linearGradient><linearGradient id="r66"><stop offset="0.000" stop-color="#8b96a2"/><stop offset="0.015" stop-color="#95a0ad"/><stop offset="0.044" stop-color="#9da9b6"/><stop offset="0.118" stop-color="#a5b0be"/><stop offset="0.303" stop-color="#a9b5c3"/><stop offset="0.539" stop-color="#a9b5c3"/><stop offset="0.716" stop-color="#939eab"/><stop offset="0.856" stop-color="#7a8490"/><stop offset="0.952" stop-color="#636b76"/><stop offset="0.989" stop-color="#565e68"/><stop offset="1.000" stop-color="#565e68"/></linearGradient><linearGradient id="r67"><stop offset="0.000" stop-color="#8b96a2"/><stop offset="0.015" stop-color="#95a0ad"/><stop offset="0.044" stop-color="#9da9b6"/><stop offset="0.118" stop-color="#a5b0be"/><stop offset="0.301" stop-color="#a9b5c3"/><stop offset="0.537" stop-color="#a9b5c3"/><stop offset="0.713" stop-color="#939eab"/><stop offset="0.853" stop-color="#7b8490"/><stop offset="0.948" stop-color="#636c77"/><stop offset="0.985" stop-color="#575f69"/><stop offset="1.000" stop-color="#565e68"/></linearGradient><linearGradient id="r68"><stop offset="0.000" stop-color="#8b96a2"/><stop offset="0.015" stop-color="#95a0ad"/><stop offset="0.044" stop-color="#9da9b6"/><stop offset="0.117" stop-color="#a5b0be"/><stop offset="0.300" stop-color="#a9b5c3"/><stop offset="0.534" stop-color="#a9b5c3"/><stop offset="0.718" stop-color="#929daa"/><stop offset="0.857" stop-color="#7a838f"/><stop offset="0.952" stop-color="#626a75"/><stop offset="0.988" stop-color="#565e68"/><stop offset="1.000" stop-color="#565e68"/></linearGradient><linearGradient id="r69"><stop offset="0.000" stop-color="#8b95a2"/><stop offset="0.015" stop-color="#95a0ad"/><stop offset="0.044" stop-color="#9da9b6"/><stop offset="0.117" stop-color="#a5b0be"/><stop offset="0.299" stop-color="#a9b5c3"/><stop offset="0.532" stop-color="#a9b5c3"/><stop offset="0.715" stop-color="#929daa"/><stop offset="0.853" stop-color="#7a848f"/><stop offset="0.948" stop-color="#636b76"/><stop offset="0.985" stop-color="#565e68"/><stop offset="1.000" stop-color="#565e68"/></linearGradient><linearGradient id="r70"><stop offset="0.000" stop-color="#8b95a2"/><stop offset="0.015" stop-color="#95a0ad"/><stop offset="0.044" stop-color="#9da9b6"/><stop offset="0.116" stop-color="#a5b1be"/><stop offset="0.298" stop-color="#a9b5c3"/><stop offset="0.530" stop-color="#a9b5c3"/><stop offset="0.712" stop-color="#939daa"/><stop offset="0.850" stop-color="#7a8490"/><stop offset="0.945" stop-color="#636c77"/><stop offset="0.988" stop-color="#565e68"/><stop offset="1.000" stop-color="#565e68"/></linearGradient><linearGradient id="r71"><stop offset="0.000" stop-color="#8b95a2"/><stop offset="0.014" stop-color="#95a0ad"/><stop offset="0.043" stop-color="#9da9b6"/><stop offset="0.116" stop-color="#a5b1be"/><stop offset="0.297" stop-color="#a9b5c3"/><stop offset="0.529" stop-color="#a9b5c3"/><stop offset="0.710" stop-color="#939eab"/><stop offset="0.847" stop-color="#7b8490"/><stop offset="0.941" stop-color="#646d77"/><stop offset="0.985" stop-color="#565e68"/><stop offset="1.000" stop-color="#565e68"/></linearGradient><linearGradient id="r72"><stop offset="0.000" stop-color="#8b95a2"/><stop offset="0.014" stop-color="#95a1ae"/><stop offset="0.043" stop-color="#9da9b6"/><stop offset="0.115" stop-color="#a5b1be"/><stop offset="0.296" stop-color="#a9b5c3"/><stop offset="0.527" stop-color="#a9b5c3"/><stop offset="0.707" stop-color="#939eab"/><stop offset="0.851" stop-color="#7a838f"/><stop offset="0.945" stop-color="#636b76"/><stop offset="0.981" stop-color="#565e68"/><stop offset="1.000" stop-color="#565e68"/></linearGradient><linearGradient id="r73"><stop offset="0.000" stop-color="#8a95a1"/><stop offset="0.014" stop-color="#96a1ae"/><stop offset="0.043" stop-color="#9da9b6"/><stop offset="0.115" stop-color="#a5b1be"/><stop offset="0.295" stop-color="#a9b5c3"/><stop offset="0.525" stop-color="#a9b5c3"/><stop offset="0.705" stop-color="#939eab"/><stop offset="0.848" stop-color="#7a848f"/><stop offset="0.942" stop-color="#636c76"/><stop offset="0.985" stop-color="#565e68"/><stop offset="1.000" stop-color="#565e68"/></linearGradient><linearGradient id="r74"><stop offset="0.000" stop-color="#8a95a1"/><stop offset="0.014" stop-color="#96a1ae"/><stop offset="0.043" stop-color="#9ea9b6"/><stop offset="0.115" stop-color="#a5b1be"/><stop offset="0.294" stop-color="#a9b5c3"/><stop offset="0.523" stop-color="#a9b5c3"/><stop offset="0.702" stop-color="#939eab"/><stop offset="0.846" stop-color="#7a8490"/><stop offset="0.946" stop-color="#626a75"/><stop offset="0.982" stop-color="#565e68"/><stop offset="1.000" stop-color="#565e68"/></linearGradient><linearGradient id="r75"><stop offset="0.000" stop-color="#8a95a1"/><stop offset="0.014" stop-color="#96a1ae"/><stop offset="0.043" stop-color="#9ea9b6"/><stop offset="0.114" stop-color="#a5b1be"/><stop offset="0.293" stop-color="#a9b5c3"/><stop offset="0.522" stop-color="#a9b5c3"/><stop offset="0.700" stop-color="#939eab"/><stop offset="0.843" stop-color="#7a8490"/><stop offset="0.943" stop-color="#626b75"/><stop offset="0.979" stop-color="#565e68"/><stop offset="1.000" stop-color="#565e68"/></linearGradient><linearGradient id="r76"><stop offset="0.000" stop-color="#8a95a1"/><stop offset="0.014" stop-color="#96a1ae"/><stop offset="0.043" stop-color="#9ea9b6"/><stop offset="0.114" stop-color="#a5b1be"/><stop offset="0.292" stop-color="#a9b5c3"/><stop offset="0.520" stop-color="#a9b5c3"/><stop offset="0.705" stop-color="#929daa"/><stop offset="0.848" stop-color="#79838e"/><stop offset="0.947" stop-color="#606973"/><stop offset="0.983" stop-color="#565e68"/><stop offset="1.000" stop-color="#565e68"/></linearGradient><linearGradient id="r77"><stop offset="0.000" stop-color="#8a94a1"/><stop offset="0.007" stop-color="#919ca9"/><stop offset="0.021" stop-color="#98a4b1"/><stop offset="0.064" stop-color="#a1acba"/><stop offset="0.163" stop-color="#a7b3c1"/><stop offset="0.462" stop-color="#aab6c4"/><stop offset="0.526" stop-color="#a8b4c2"/><stop offset="0.703" stop-color="#929daa"/><stop offset="0.845" stop-color="#79838f"/><stop offset="0.945" stop-color="#616974"/><stop offset="0.980" stop-color="#565e68"/><stop offset="1.000" stop-color="#565e68"/></linearGradient><linearGradient id="r78"><stop offset="0.000" stop-color="#8a94a1"/><stop offset="0.007" stop-color="#919ca9"/><stop offset="0.021" stop-color="#98a4b1"/><stop offset="0.064" stop-color="#a1acba"/><stop offset="0.163" stop-color="#a7b3c1"/><stop offset="0.467" stop-color="#aab6c4"/><stop offset="0.524" stop-color="#a8b4c2"/><stop offset="0.708" stop-color="#919ca9"/><stop offset="0.850" stop-color="#78828d"/><stop offset="0.949" stop-color="#5f6872"/><stop offset="0.977" stop-color="#565e68"/><stop offset="1.000" stop-color="#565e68"/></linearGradient><linearGradient id="r79"><stop offset="0.000" stop-color="#8a94a1"/><stop offset="0.007" stop-color="#919ca9"/><stop offset="0.021" stop-color="#98a4b1"/><stop offset="0.064" stop-color="#a1acba"/><stop offset="0.162" stop-color="#a7b3c1"/><stop offset="0.466" stop-color="#aab6c4"/><stop offset="0.523" stop-color="#a8b4c2"/><stop offset="0.706" stop-color="#919ca9"/><stop offset="0.848" stop-color="#78828d"/><stop offset="0.946" stop-color="#606873"/><stop offset="0.975" stop-color="#575f69"/><stop offset="1.000" stop-color="#565e68"/></linearGradient><linearGradient id="r80"><stop offset="0.000" stop-color="#8a94a0"/><stop offset="0.007" stop-color="#919ca9"/><stop offset="0.021" stop-color="#99a4b1"/><stop offset="0.063" stop-color="#a1acba"/><stop offset="0.162" stop-color="#a7b3c1"/><stop offset="0.465" stop-color="#aab6c4"/><stop offset="0.514" stop-color="#a9b5c3"/><stop offset="0.697" stop-color="#929daa"/><stop offset="0.838" stop-color="#7a848f"/><stop offset="0.937" stop-color="#626b75"/><stop offset="0.979" stop-color="#565e68"/><stop offset="1.000" stop-color="#565e68"/></linearGradient><linearGradient id="r81"><stop offset="0.000" stop-color="#8994a0"/><stop offset="0.007" stop-color="#919ca9"/><stop offset="0.021" stop-color="#99a4b1"/><stop offset="0.063" stop-color="#a1acba"/><stop offset="0.162" stop-color="#a7b3c1"/><stop offset="0.464" stop-color="#aab6c4"/><stop offset="0.513" stop-color="#a9b5c3"/><stop offset="0.696" stop-color="#929daa"/><stop offset="0.836" stop-color="#7a848f"/><stop offset="0.942" stop-color="#606973"/><stop offset="0.977" stop-color="#565e68"/><stop offset="1.000" stop-color="#565e68"/></linearGradient><linearGradient id="r82"><stop offset="0.000" stop-color="#8994a0"/><stop offset="0.007" stop-color="#919ca9"/><stop offset="0.021" stop-color="#99a4b1"/><stop offset="0.063" stop-color="#a1acba"/><stop offset="0.161" stop-color="#a7b3c1"/><stop offset="0.463" stop-color="#aab6c4"/><stop offset="0.512" stop-color="#a9b5c3"/><stop offset="0.694" stop-color="#929daa"/><stop offset="0.834" stop-color="#7a848f"/><stop offset="0.939" stop-color="#616974"/><stop offset="0.974" stop-color="#565e68"/><stop offset="1.000" stop-color="#565e68"/></linearGradient><linearGradient id="r83"><stop offset="0.000" stop-color="#8994a0"/><stop offset="0.007" stop-color="#919ca9"/><stop offset="0.021" stop-color="#99a4b1"/><stop offset="0.063" stop-color="#a1acba"/><stop offset="0.161" stop-color="#a7b3c1"/><stop offset="0.462" stop-color="#aab6c4"/><stop offset="0.511" stop-color="#a9b5c3"/><stop offset="0.692" stop-color="#929daa"/><stop offset="0.839" stop-color="#79828e"/><stop offset="0.937" stop-color="#616a74"/><stop offset="0.972" stop-color="#565e68"/><stop offset="1.000" stop-color="#565e68"/></linearGradient><linearGradient id="r84"><stop offset="0.000" stop-color="#8993a0"/><stop offset="0.007" stop-color="#919ca9"/><stop offset="0.021" stop-color="#99a4b1"/><stop offset="0.063" stop-color="#a1acba"/><stop offset="0.160" stop-color="#a7b3c1"/><stop offset="0.461" stop-color="#aab6c4"/><stop offset="0.509" stop-color="#a9b4c2"/><stop offset="0.691" stop-color="#929daa"/><stop offset="0.837" stop-color="#79828e"/><stop offset="0.942" stop-color="#5f6872"/><stop offset="0.970" stop-color="#575f69"/><stop offset="1.000" stop-color="#565e68"/></linearGradient><linearGradient id="r85"><stop offset="0.000" stop-color="#8993a0"/><stop offset="0.007" stop-color="#919ca9"/><stop offset="0.021" stop-color="#99a4b1"/><stop offset="0.063" stop-color="#a1adba"/><stop offset="0.160" stop-color="#a7b3c1"/><stop offset="0.460" stop-color="#aab6c4"/><stop offset="0.508" stop-color="#a8b4c2"/><stop offset="0.689" stop-color="#929daa"/><stop offset="0.836" stop-color="#79828e"/><stop offset="0.940" stop-color="#606872"/><stop offset="0.975" stop-color="#565e68"/><stop offset="1.000" stop-color="#565e68"/></linearGradient><linearGradient id="r86"><stop offset="0.000" stop-color="#89939f"/><stop offset="0.007" stop-color="#919ca9"/><stop offset="0.021" stop-color="#99a4b1"/><stop offset="0.063" stop-color="#a1adba"/><stop offset="0.160" stop-color="#a7b3c1"/><stop offset="0.459" stop-color="#aab6c4"/><stop offset="0.507" stop-color="#a8b4c2"/><stop offset="0.688" stop-color="#929daa"/><stop offset="0.834" stop-color="#79828e"/><stop offset="0.938" stop-color="#606873"/><stop offset="0.973" stop-color="#565e68"/><stop offset="1.000" stop-color="#565e68"/></linearGradient><linearGradient id="r87"><stop offset="0.000" stop-color="#88939f"/><stop offset="0.007" stop-color="#919ca9"/><stop offset="0.021" stop-color="#99a4b1"/><stop offset="0.062" stop-color="#a1adba"/><stop offset="0.160" stop-color="#a7b3c1"/><stop offset="0.458" stop-color="#aab6c4"/><stop offset="0.506" stop-color="#a8b4c2"/><stop offset="0.687" stop-color="#929daa"/><stop offset="0.832" stop-color="#79838e"/><stop offset="0.936" stop-color="#606873"/><stop offset="0.971" stop-color="#565e68"/><stop offset="1.000" stop-color="#565e68"/></linearGradient><linearGradient id="r88"><stop offset="0.000" stop-color="#88939f"/><stop offset="0.007" stop-color="#919ca9"/><stop offset="0.021" stop-color="#99a4b1"/><stop offset="0.062" stop-color="#a1adba"/><stop offset="0.159" stop-color="#a7b3c1"/><stop offset="0.457" stop-color="#aab6c4"/><stop offset="0.498" stop-color="#a9b5c3"/><stop offset="0.685" stop-color="#929daa"/><stop offset="0.831" stop-color="#79838e"/><stop offset="0.935" stop-color="#606973"/><stop offset="0.969" stop-color="#565e68"/><stop offset="1.000" stop-color="#565e68"/></linearGradient><linearGradient id="r89"><stop offset="0.000" stop-color="#88939f"/><stop offset="0.007" stop-color="#919ca8"/><stop offset="0.014" stop-color="#96a1ae"/><stop offset="0.041" stop-color="#9ea9b7"/><stop offset="0.111" stop-color="#a5b1bf"/><stop offset="0.283" stop-color="#aab6c4"/><stop offset="0.491" stop-color="#a9b5c3"/><stop offset="0.677" stop-color="#939eab"/><stop offset="0.822" stop-color="#7a8490"/><stop offset="0.933" stop-color="#606973"/><stop offset="0.967" stop-color="#565e68"/><stop offset="1.000" stop-color="#565e68"/></linearGradient><linearGradient id="r90"><stop offset="0.000" stop-color="#88929f"/><stop offset="0.007" stop-color="#919ba8"/><stop offset="0.014" stop-color="#96a1ae"/><stop offset="0.041" stop-color="#9ea9b7"/><stop offset="0.110" stop-color="#a5b1bf"/><stop offset="0.283" stop-color="#aab6c4"/><stop offset="0.490" stop-color="#a9b5c3"/><stop offset="0.676" stop-color="#939eaa"/><stop offset="0.821" stop-color="#7a8490"/><stop offset="0.931" stop-color="#606973"/><stop offset="0.966" stop-color="#565e68"/><stop offset="1.000" stop-color="#565e68"/></linearGradient><linearGradient id="r91"><stop offset="0.000" stop-color="#88929f"/><stop offset="0.007" stop-color="#919ba8"/><stop offset="0.014" stop-color="#96a1ae"/><stop offset="0.041" stop-color="#9ea9b7"/><stop offset="0.110" stop-color="#a5b1bf"/><stop offset="0.282" stop-color="#aab6c4"/><stop offset="0.482" stop-color="#a9b5c3"/><stop offset="0.668" stop-color="#949eab"/><stop offset="0.820" stop-color="#7a8490"/><stop offset="0.930" stop-color="#606973"/><stop offset="0.964" stop-color="#565e68"/><stop offset="1.000" stop-color="#565e68"/></linearGradient><linearGradient id="r92"><stop offset="0.000" stop-color="#88929e"/><stop offset="0.007" stop-color="#909ba8"/><stop offset="0.014" stop-color="#96a1ae"/><stop offset="0.041" stop-color="#9ea9b7"/><stop offset="0.110" stop-color="#a5b1bf"/><stop offset="0.282" stop-color="#aab6c4"/><stop offset="0.481" stop-color="#a9b5c3"/><stop offset="0.667" stop-color="#939eab"/><stop offset="0.819" stop-color="#7a848f"/><stop offset="0.929" stop-color="#606973"/><stop offset="0.963" stop-color="#565e68"/><stop offset="1.000" stop-color="#565e68"/></linearGradient><linearGradient id="r93"><stop offset="0.000" stop-color="#87929e"/><stop offset="0.007" stop-color="#909ba8"/><stop offset="0.014" stop-color="#96a1ae"/><stop offset="0.041" stop-color="#9ea9b7"/><stop offset="0.110" stop-color="#a5b1bf"/><stop offset="0.282" stop-color="#aab6c4"/><stop offset="0.481" stop-color="#a9b5c3"/><stop offset="0.666" stop-color="#939eab"/><stop offset="0.817" stop-color="#7a848f"/><stop offset="0.927" stop-color="#606973"/><stop offset="0.962" stop-color="#565e68"/><stop offset="1.000" stop-color="#565e68"/></linearGradient><linearGradient id="r94"><stop offset="0.000" stop-color="#87929e"/><stop offset="0.007" stop-color="#909ba8"/><stop offset="0.014" stop-color="#96a1ae"/><stop offset="0.041" stop-color="#9ea9b7"/><stop offset="0.110" stop-color="#a5b1bf"/><stop offset="0.281" stop-color="#aab6c4"/><stop offset="0.480" stop-color="#a9b5c3"/><stop offset="0.665" stop-color="#939eab"/><stop offset="0.816" stop-color="#7a848f"/><stop offset="0.926" stop-color="#606973"/><stop offset="0.960" stop-color="#565e68"/><stop offset="1.000" stop-color="#565e68"/></linearGradient><linearGradient id="r95"><stop offset="0.000" stop-color="#87919e"/><stop offset="0.007" stop-color="#909ba7"/><stop offset="0.014" stop-color="#96a1ae"/><stop offset="0.041" stop-color="#9ea9b7"/><stop offset="0.110" stop-color="#a5b1bf"/><stop offset="0.281" stop-color="#aab6c4"/><stop offset="0.473" stop-color="#a9b5c3"/><stop offset="0.658" stop-color="#949fac"/><stop offset="0.808" stop-color="#7b8591"/><stop offset="0.918" stop-color="#626b75"/><stop offset="0.959" stop-color="#565e68"/><stop offset="1.000" stop-color="#565e68"/></linearGradient><linearGradient id="r96"><stop offset="0.000" stop-color="#87919d"/><stop offset="0.007" stop-color="#909aa7"/><stop offset="0.014" stop-color="#96a1ae"/><stop offset="0.041" stop-color="#9ea9b7"/><stop offset="0.110" stop-color="#a5b1bf"/><stop offset="0.281" stop-color="#aab6c4"/><stop offset="0.472" stop-color="#a9b5c3"/><stop offset="0.657" stop-color="#949fab"/><stop offset="0.808" stop-color="#7b8590"/><stop offset="0.924" stop-color="#606973"/><stop offset="0.958" stop-color="#565e69"/><stop offset="1.000" stop-color="#565e68"/></linearGradient><linearGradient id="r97"><stop offset="0.000" stop-color="#87919d"/><stop offset="0.007" stop-color="#909aa7"/><stop offset="0.014" stop-color="#96a1ae"/><stop offset="0.041" stop-color="#9ea9b7"/><stop offset="0.109" stop-color="#a5b1bf"/><stop offset="0.280" stop-color="#aab6c4"/><stop offset="0.465" stop-color="#a9b5c3"/><stop offset="0.656" stop-color="#939eab"/><stop offset="0.807" stop-color="#7b8490"/><stop offset="0.923" stop-color="#606973"/><stop offset="0.957" stop-color="#565e69"/><stop offset="1.000" stop-color="#565e68"/></linearGradient><linearGradient id="r98"><stop offset="0.000" stop-color="#86919d"/><stop offset="0.007" stop-color="#8f9aa7"/><stop offset="0.014" stop-color="#96a1ae"/><stop offset="0.041" stop-color="#9ea9b7"/><stop offset="0.109" stop-color="#a5b1bf"/><stop offset="0.280" stop-color="#aab6c4"/><stop offset="0.464" stop-color="#a9b5c3"/><stop offset="0.656" stop-color="#939eab"/><stop offset="0.806" stop-color="#7b8490"/><stop offset="0.922" stop-color="#606973"/><stop offset="0.956" stop-color="#565e68"/><stop offset="1.000" stop-color="#565e68"/></linearGradient><linearGradient id="r99"><stop offset="0.000" stop-color="#86909d"/><stop offset="0.007" stop-color="#8f9aa7"/><stop offset="0.014" stop-color="#96a1ae"/><stop offset="0.041" stop-color="#9ea9b7"/><stop offset="0.109" stop-color="#a5b1bf"/><stop offset="0.280" stop-color="#aab6c4"/><stop offset="0.464" stop-color="#a9b5c3"/><stop offset="0.655" stop-color="#939eab"/><stop offset="0.805" stop-color="#7a8490"/><stop offset="0.921" stop-color="#606973"/><stop offset="0.955" stop-color="#565e68"/><stop offset="1.000" stop-color="#565e68"/></linearGradient><linearGradient id="r100"><stop offset="0.000" stop-color="#86909d"/><stop offset="0.014" stop-color="#96a1ae"/><stop offset="0.041" stop-color="#9ea9b7"/><stop offset="0.109" stop-color="#a5b1bf"/><stop offset="0.280" stop-color="#aab6c4"/><stop offset="0.457" stop-color="#a9b5c3"/><stop offset="0.648" stop-color="#949fac"/><stop offset="0.805" stop-color="#7a8490"/><stop offset="0.921" stop-color="#606873"/><stop offset="0.955" stop-color="#565e68"/><stop offset="1.000" stop-color="#565e68"/></linearGradient><linearGradient id="r101"><stop offset="0.000" stop-color="#86909c"/><stop offset="0.014" stop-color="#96a1ae"/><stop offset="0.041" stop-color="#9ea9b7"/><stop offset="0.109" stop-color="#a5b1bf"/><stop offset="0.279" stop-color="#aab6c4"/><stop offset="0.457" stop-color="#a9b5c3"/><stop offset="0.647" stop-color="#939eab"/><stop offset="0.804" stop-color="#7a848f"/><stop offset="0.920" stop-color="#606873"/><stop offset="0.954" stop-color="#565e68"/><stop offset="1.000" stop-color="#565e68"/></linearGradient><linearGradient id="r102"><stop offset="0.000" stop-color="#85909c"/><stop offset="0.014" stop-color="#96a1ae"/><stop offset="0.041" stop-color="#9ea9b7"/><stop offset="0.109" stop-color="#a5b1bf"/><stop offset="0.279" stop-color="#aab6c4"/><stop offset="0.449" stop-color="#a9b5c3"/><stop offset="0.640" stop-color="#949fac"/><stop offset="0.797" stop-color="#7b8591"/><stop offset="0.913" stop-color="#616a75"/><stop offset="0.953" stop-color="#565e68"/><stop offset="1.000" stop-color="#565e68"/></linearGradient><linearGradient id="r103"><stop offset="0.000" stop-color="#85909c"/><stop offset="0.014" stop-color="#96a1ae"/><stop offset="0.041" stop-color="#9ea9b7"/><stop offset="0.109" stop-color="#a5b1bf"/><stop offset="0.279" stop-color="#aab6c4"/><stop offset="0.449" stop-color="#a9b5c3"/><stop offset="0.640" stop-color="#949fac"/><stop offset="0.796" stop-color="#7b8490"/><stop offset="0.912" stop-color="#616a74"/><stop offset="0.953" stop-color="#565e68"/><stop offset="1.000" stop-color="#565e68"/></linearGradient><linearGradient id="r104"><stop offset="0.000" stop-color="#858f9c"/><stop offset="0.014" stop-color="#96a1ae"/><stop offset="0.034" stop-color="#9da8b5"/><stop offset="0.095" stop-color="#a4b0be"/><stop offset="0.238" stop-color="#a9b5c3"/><stop offset="0.442" stop-color="#a9b5c3"/><stop offset="0.633" stop-color="#949fac"/><stop offset="0.789" stop-color="#7c8691"/><stop offset="0.912" stop-color="#616a74"/><stop offset="0.952" stop-color="#565e68"/><stop offset="1.000" stop-color="#565e68"/></linearGradient><linearGradient id="r105"><stop offset="0.000" stop-color="#86909c"/><stop offset="0.014" stop-color="#95a0ad"/><stop offset="0.027" stop-color="#9ba6b4"/><stop offset="0.075" stop-color="#a3aebc"/><stop offset="0.190" stop-color="#a9b4c2"/><stop offset="0.442" stop-color="#a9b5c3"/><stop offset="0.632" stop-color="#949fac"/><stop offset="0.789" stop-color="#7b8591"/><stop offset="0.911" stop-color="#616974"/><stop offset="0.952" stop-color="#565e68"/><stop offset="1.000" stop-color="#565e68"/></linearGradient><linearGradient id="r106"><stop offset="0.000" stop-color="#87919d"/><stop offset="0.014" stop-color="#95a0ad"/><stop offset="0.027" stop-color="#9ba6b4"/><stop offset="0.075" stop-color="#a3aebc"/><stop offset="0.190" stop-color="#a9b4c2"/><stop offset="0.435" stop-color="#a9b5c3"/><stop offset="0.626" stop-color="#95a0ad"/><stop offset="0.782" stop-color="#7c8692"/><stop offset="0.904" stop-color="#626b75"/><stop offset="0.952" stop-color="#565e68"/><stop offset="1.000" stop-color="#565e68"/></linearGradient><linearGradient id="r107"><stop offset="0.000" stop-color="#87919e"/><stop offset="0.014" stop-color="#95a0ad"/><stop offset="0.027" stop-color="#9ba6b4"/><stop offset="0.075" stop-color="#a3aebc"/><stop offset="0.190" stop-color="#a9b4c2"/><stop offset="0.428" stop-color="#aab6c4"/><stop offset="0.619" stop-color="#95a0ad"/><stop offset="0.782" stop-color="#7c8692"/><stop offset="0.904" stop-color="#626b75"/><stop offset="0.952" stop-color="#565e68"/><stop offset="1.000" stop-color="#565e68"/></linearGradient><linearGradient id="r108"><stop offset="0.000" stop-color="#87919e"/><stop offset="0.014" stop-color="#95a0ad"/><stop offset="0.020" stop-color="#99a4b1"/><stop offset="0.061" stop-color="#a1adba"/><stop offset="0.156" stop-color="#a8b3c1"/><stop offset="0.421" stop-color="#aab6c4"/><stop offset="0.612" stop-color="#96a1ae"/><stop offset="0.775" stop-color="#7d8793"/><stop offset="0.897" stop-color="#636c77"/><stop offset="0.952" stop-color="#565e68"/><stop offset="1.000" stop-color="#565e68"/></linearGradient><linearGradient id="r109"><stop offset="0.000" stop-color="#87919e"/><stop offset="0.014" stop-color="#949fac"/><stop offset="0.020" stop-color="#99a4b1"/><stop offset="0.061" stop-color="#a1adba"/><stop offset="0.156" stop-color="#a8b3c1"/><stop offset="0.415" stop-color="#aab6c4"/><stop offset="0.605" stop-color="#96a1ae"/><stop offset="0.768" stop-color="#7e8894"/><stop offset="0.897" stop-color="#636c76"/><stop offset="0.945" stop-color="#565e68"/><stop offset="1.000" stop-color="#565e68"/></linearGradient><linearGradient id="r110"><stop offset="0.000" stop-color="#87919d"/><stop offset="0.014" stop-color="#949fac"/><stop offset="0.020" stop-color="#99a4b1"/><stop offset="0.054" stop-color="#a0acb9"/><stop offset="0.143" stop-color="#a7b3c1"/><stop offset="0.387" stop-color="#aab6c4"/><stop offset="0.442" stop-color="#a7b3c1"/><stop offset="0.632" stop-color="#929daa"/><stop offset="0.788" stop-color="#7a848f"/><stop offset="0.911" stop-color="#5f6872"/><stop offset="0.945" stop-color="#565e68"/><stop offset="1.000" stop-color="#565e68"/></linearGradient><linearGradient id="r111"><stop offset="0.000" stop-color="#86919d"/><stop offset="0.014" stop-color="#949fac"/><stop offset="0.027" stop-color="#9ba6b4"/><stop offset="0.075" stop-color="#a3aebc"/><stop offset="0.190" stop-color="#a9b4c2"/><stop offset="0.415" stop-color="#a9b5c3"/><stop offset="0.605" stop-color="#96a1ae"/><stop offset="0.768" stop-color="#7d8793"/><stop offset="0.897" stop-color="#626b76"/><stop offset="0.945" stop-color="#565e68"/><stop offset="1.000" stop-color="#565e68"/></linearGradient><linearGradient id="r112"><stop offset="0.000" stop-color="#86909c"/><stop offset="0.014" stop-color="#939eab"/><stop offset="0.027" stop-color="#9ba6b4"/><stop offset="0.075" stop-color="#a3aebc"/><stop offset="0.190" stop-color="#a9b4c2"/><stop offset="0.408" stop-color="#a9b5c3"/><stop offset="0.598" stop-color="#96a1ae"/><stop offset="0.761" stop-color="#7e8894"/><stop offset="0.891" stop-color="#646c77"/><stop offset="0.945" stop-color="#565e68"/><stop offset="1.000" stop-color="#565e68"/></linearGradient><linearGradient id="r113"><stop offset="0.000" stop-color="#858f9b"/><stop offset="0.014" stop-color="#939eab"/><stop offset="0.027" stop-color="#9ba6b4"/><stop offset="0.075" stop-color="#a3aebc"/><stop offset="0.190" stop-color="#a9b4c2"/><stop offset="0.408" stop-color="#a9b5c3"/><stop offset="0.598" stop-color="#96a1ae"/><stop offset="0.762" stop-color="#7e8793"/><stop offset="0.891" stop-color="#636c77"/><stop offset="0.945" stop-color="#565e68"/><stop offset="1.000" stop-color="#565e68"/></linearGradient><linearGradient id="r114"><stop offset="0.000" stop-color="#838d9a"/><stop offset="0.014" stop-color="#939eab"/><stop offset="0.027" stop-color="#9ba6b4"/><stop offset="0.075" stop-color="#a3aebc"/><stop offset="0.190" stop-color="#a9b4c2"/><stop offset="0.401" stop-color="#a9b5c3"/><stop offset="0.592" stop-color="#96a1ae"/><stop offset="0.762" stop-color="#7d8793"/><stop offset="0.891" stop-color="#636b76"/><stop offset="0.945" stop-color="#565e68"/><stop offset="1.000" stop-color="#565e68"/></linearGradient><linearGradient id="r115"><stop offset="0.000" stop-color="#838d99"/><stop offset="0.014" stop-color="#939daa"/><stop offset="0.027" stop-color="#9ba6b3"/><stop offset="0.075" stop-color="#a3aebc"/><stop offset="0.191" stop-color="#a9b4c2"/><stop offset="0.395" stop-color="#a9b5c3"/><stop offset="0.585" stop-color="#97a2af"/><stop offset="0.755" stop-color="#7e8894"/><stop offset="0.885" stop-color="#646d77"/><stop offset="0.939" stop-color="#565e68"/><stop offset="1.000" stop-color="#565e68"/></linearGradient><linearGradient id="r116"><stop offset="0.000" stop-color="#828c99"/><stop offset="0.014" stop-color="#929daa"/><stop offset="0.027" stop-color="#9aa6b3"/><stop offset="0.068" stop-color="#a2aebb"/><stop offset="0.170" stop-color="#a8b4c2"/><stop offset="0.388" stop-color="#aab5c3"/><stop offset="0.579" stop-color="#97a2af"/><stop offset="0.749" stop-color="#7f8995"/><stop offset="0.878" stop-color="#656e79"/><stop offset="0.939" stop-color="#565e68"/><stop offset="1.000" stop-color="#565e68"/></linearGradient><linearGradient id="r117"><stop offset="0.000" stop-color="#828c98"/><stop offset="0.014" stop-color="#929daa"/><stop offset="0.034" stop-color="#9da8b5"/><stop offset="0.095" stop-color="#a4b0be"/><stop offset="0.238" stop-color="#a9b5c3"/><stop offset="0.388" stop-color="#a9b5c3"/><stop offset="0.579" stop-color="#97a2af"/><stop offset="0.749" stop-color="#7e8894"/><stop offset="0.879" stop-color="#656d78"/><stop offset="0.940" stop-color="#565e68"/><stop offset="1.000" stop-color="#565e68"/></linearGradient><linearGradient id="r118"><stop offset="0.000" stop-color="#828c98"/><stop offset="0.014" stop-color="#929ca9"/><stop offset="0.034" stop-color="#9da8b5"/><stop offset="0.095" stop-color="#a4b0be"/><stop offset="0.239" stop-color="#a9b5c3"/><stop offset="0.382" stop-color="#a9b5c3"/><stop offset="0.572" stop-color="#97a2af"/><stop offset="0.743" stop-color="#7f8995"/><stop offset="0.879" stop-color="#646d78"/><stop offset="0.940" stop-color="#565e68"/><stop offset="1.000" stop-color="#565e68"/></linearGradient><linearGradient id="r119"><stop offset="0.000" stop-color="#828c98"/><stop offset="0.014" stop-color="#919ca9"/><stop offset="0.034" stop-color="#9ca8b5"/><stop offset="0.089" stop-color="#a4b0bd"/><stop offset="0.225" stop-color="#a9b5c3"/><stop offset="0.375" stop-color="#a9b5c3"/><stop offset="0.566" stop-color="#97a2af"/><stop offset="0.737" stop-color="#808a96"/><stop offset="0.873" stop-color="#656e79"/><stop offset="0.934" stop-color="#565e68"/><stop offset="1.000" stop-color="#565e68"/></linearGradient><linearGradient id="r120"><stop offset="0.000" stop-color="#818c98"/><stop offset="0.014" stop-color="#919ca9"/><stop offset="0.034" stop-color="#9ca7b5"/><stop offset="0.075" stop-color="#a3aebc"/><stop offset="0.191" stop-color="#a8b4c2"/><stop offset="0.369" stop-color="#a9b5c3"/><stop offset="0.560" stop-color="#98a3b0"/><stop offset="0.737" stop-color="#7f8995"/><stop offset="0.874" stop-color="#656e78"/><stop offset="0.935" stop-color="#565e68"/><stop offset="1.000" stop-color="#565e68"/></linearGradient><linearGradient id="r121"><stop offset="0.000" stop-color="#818b97"/><stop offset="0.014" stop-color="#919ba8"/><stop offset="0.034" stop-color="#9ca7b4"/><stop offset="0.061" stop-color="#a1adba"/><stop offset="0.157" stop-color="#a8b3c1"/><stop offset="0.362" stop-color="#a9b5c3"/><stop offset="0.553" stop-color="#98a3b0"/><stop offset="0.731" stop-color="#808a96"/><stop offset="0.868" stop-color="#666f79"/><stop offset="0.936" stop-color="#565e68"/><stop offset="1.000" stop-color="#565e68"/></linearGradient><linearGradient id="r122"><stop offset="0.000" stop-color="#818b97"/><stop offset="0.014" stop-color="#909ba8"/><stop offset="0.034" stop-color="#9ba7b4"/><stop offset="0.062" stop-color="#a1adba"/><stop offset="0.157" stop-color="#a8b3c1"/><stop offset="0.356" stop-color="#a9b5c3"/><stop offset="0.547" stop-color="#98a3b1"/><stop offset="0.725" stop-color="#808a96"/><stop offset="0.862" stop-color="#67707a"/><stop offset="0.937" stop-color="#565e68"/><stop offset="1.000" stop-color="#565e68"/></linearGradient><linearGradient id="r123"><stop offset="0.000" stop-color="#818b97"/><stop offset="0.014" stop-color="#909ba8"/><stop offset="0.034" stop-color="#9ba6b3"/><stop offset="0.055" stop-color="#a0acb9"/><stop offset="0.144" stop-color="#a7b3c1"/><stop offset="0.342" stop-color="#aab6c4"/><stop offset="0.527" stop-color="#9aa5b2"/><stop offset="0.705" stop-color="#838d99"/><stop offset="0.849" stop-color="#69727d"/><stop offset="0.931" stop-color="#565e68"/><stop offset="1.000" stop-color="#565e68"/></linearGradient><linearGradient id="r124"><stop offset="0.000" stop-color="#818b97"/><stop offset="0.014" stop-color="#909aa7"/><stop offset="0.034" stop-color="#9ba6b3"/><stop offset="0.055" stop-color="#a0acb9"/><stop offset="0.144" stop-color="#a7b3c1"/><stop offset="0.336" stop-color="#aab6c4"/><stop offset="0.521" stop-color="#9aa5b3"/><stop offset="0.706" stop-color="#838d99"/><stop offset="0.850" stop-color="#69727c"/><stop offset="0.932" stop-color="#565e68"/><stop offset="1.000" stop-color="#565e68"/></linearGradient><linearGradient id="r125"><stop offset="0.000" stop-color="#808a96"/><stop offset="0.014" stop-color="#8f9aa7"/><stop offset="0.034" stop-color="#9aa5b3"/><stop offset="0.062" stop-color="#a1adba"/><stop offset="0.158" stop-color="#a8b3c1"/><stop offset="0.336" stop-color="#a9b5c3"/><stop offset="0.521" stop-color="#9aa5b2"/><stop offset="0.700" stop-color="#838d99"/><stop offset="0.844" stop-color="#6a727d"/><stop offset="0.933" stop-color="#565e68"/><stop offset="1.000" stop-color="#565e68"/></linearGradient><linearGradient id="r126"><stop offset="0.000" stop-color="#808a96"/><stop offset="0.014" stop-color="#8f9aa6"/><stop offset="0.034" stop-color="#9aa5b2"/><stop offset="0.062" stop-color="#a1adba"/><stop offset="0.158" stop-color="#a7b3c1"/><stop offset="0.330" stop-color="#a9b5c3"/><stop offset="0.515" stop-color="#9aa5b2"/><stop offset="0.701" stop-color="#838d99"/><stop offset="0.845" stop-color="#69727d"/><stop offset="0.928" stop-color="#565e68"/><stop offset="1.000" stop-color="#565e68"/></linearGradient><linearGradient id="r127"><stop offset="0.000" stop-color="#808a96"/><stop offset="0.014" stop-color="#8f99a6"/><stop offset="0.034" stop-color="#99a5b2"/><stop offset="0.062" stop-color="#a1adba"/><stop offset="0.158" stop-color="#a7b3c1"/><stop offset="0.323" stop-color="#a9b5c3"/><stop offset="0.509" stop-color="#9aa5b3"/><stop offset="0.695" stop-color="#838d99"/><stop offset="0.839" stop-color="#6a737e"/><stop offset="0.929" stop-color="#565e68"/><stop offset="1.000" stop-color="#565e68"/></linearGradient><linearGradient id="r128"><stop offset="0.000" stop-color="#7f8995"/><stop offset="0.014" stop-color="#8e99a6"/><stop offset="0.034" stop-color="#99a4b1"/><stop offset="0.069" stop-color="#a2adbb"/><stop offset="0.179" stop-color="#a8b4c2"/><stop offset="0.317" stop-color="#a9b5c3"/><stop offset="0.496" stop-color="#9ba6b4"/><stop offset="0.682" stop-color="#858f9b"/><stop offset="0.834" stop-color="#6b747f"/><stop offset="0.923" stop-color="#565e68"/><stop offset="1.000" stop-color="#565e68"/></linearGradient><linearGradient id="r129"><stop offset="0.000" stop-color="#7f8995"/><stop offset="0.014" stop-color="#8e99a5"/><stop offset="0.035" stop-color="#99a4b1"/><stop offset="0.069" stop-color="#a2adbb"/><stop offset="0.173" stop-color="#a8b4c2"/><stop offset="0.311" stop-color="#a9b5c3"/><stop offset="0.490" stop-color="#9ba6b4"/><stop offset="0.676" stop-color="#858f9b"/><stop offset="0.828" stop-color="#6b747f"/><stop offset="0.925" stop-color="#565e68"/><stop offset="1.000" stop-color="#565e68"/></linearGradient><linearGradient id="r130"><stop offset="0.000" stop-color="#7f8995"/><stop offset="0.014" stop-color="#8e98a5"/><stop offset="0.035" stop-color="#98a3b0"/><stop offset="0.076" stop-color="#a3aebc"/><stop offset="0.194" stop-color="#a8b4c2"/><stop offset="0.304" stop-color="#a9b5c3"/><stop offset="0.484" stop-color="#9ba7b4"/><stop offset="0.671" stop-color="#85909c"/><stop offset="0.823" stop-color="#6c7580"/><stop offset="0.926" stop-color="#565e68"/><stop offset="1.000" stop-color="#565e68"/></linearGradient><linearGradient id="r131"><stop offset="0.000" stop-color="#7f8994"/><stop offset="0.014" stop-color="#8d98a4"/><stop offset="0.035" stop-color="#98a3b0"/><stop offset="0.076" stop-color="#a2aebb"/><stop offset="0.180" stop-color="#a8b4c2"/><stop offset="0.291" stop-color="#a9b5c3"/><stop offset="0.464" stop-color="#9da8b5"/><stop offset="0.651" stop-color="#88929e"/><stop offset="0.810" stop-color="#6e7782"/><stop offset="0.921" stop-color="#565e68"/><stop offset="1.000" stop-color="#565e68"/></linearGradient><linearGradient id="r132"><stop offset="0.000" stop-color="#7e8894"/><stop offset="0.014" stop-color="#8d97a4"/><stop offset="0.035" stop-color="#97a2b0"/><stop offset="0.076" stop-color="#a2adbb"/><stop offset="0.153" stop-color="#a7b3c1"/><stop offset="0.284" stop-color="#a9b4c2"/><stop offset="0.458" stop-color="#9da8b6"/><stop offset="0.645" stop-color="#88929f"/><stop offset="0.805" stop-color="#6f7883"/><stop offset="0.923" stop-color="#565e68"/><stop offset="1.000" stop-color="#565e68"/></linearGradient><linearGradient id="r133"><stop offset="0.000" stop-color="#7e8894"/><stop offset="0.014" stop-color="#8c97a4"/><stop offset="0.035" stop-color="#97a2af"/><stop offset="0.076" stop-color="#a1adba"/><stop offset="0.125" stop-color="#a6b2c0"/><stop offset="0.264" stop-color="#a9b5c3"/><stop offset="0.431" stop-color="#9faab8"/><stop offset="0.626" stop-color="#8a95a1"/><stop offset="0.792" stop-color="#717a85"/><stop offset="0.918" stop-color="#565e68"/><stop offset="1.000" stop-color="#565e68"/></linearGradient><linearGradient id="r134"><stop offset="0.000" stop-color="#7e8894"/><stop offset="0.014" stop-color="#8c97a3"/><stop offset="0.035" stop-color="#97a2af"/><stop offset="0.077" stop-color="#a1acba"/><stop offset="0.132" stop-color="#a6b2c0"/><stop offset="0.258" stop-color="#a8b4c2"/><stop offset="0.418" stop-color="#9fabb8"/><stop offset="0.613" stop-color="#8b96a2"/><stop offset="0.780" stop-color="#727c87"/><stop offset="0.919" stop-color="#565e68"/><stop offset="1.000" stop-color="#565e68"/></linearGradient><linearGradient id="r135"><stop offset="0.000" stop-color="#7d8793"/><stop offset="0.014" stop-color="#8c96a3"/><stop offset="0.035" stop-color="#96a1ae"/><stop offset="0.077" stop-color="#a0acb9"/><stop offset="0.140" stop-color="#a7b2c0"/><stop offset="0.244" stop-color="#a8b4c2"/><stop offset="0.405" stop-color="#a0abb9"/><stop offset="0.600" stop-color="#8c97a4"/><stop offset="0.768" stop-color="#747e89"/><stop offset="0.901" stop-color="#5a626c"/><stop offset="0.921" stop-color="#565e68"/><stop offset="1.000" stop-color="#565e68"/></linearGradient><linearGradient id="r136"><stop offset="0.000" stop-color="#7d8793"/><stop offset="0.014" stop-color="#8b96a2"/><stop offset="0.035" stop-color="#96a1ae"/><stop offset="0.077" stop-color="#a0abb9"/><stop offset="0.147" stop-color="#a7b3c0"/><stop offset="0.259" stop-color="#a7b3c1"/><stop offset="0.420" stop-color="#9eaab7"/><stop offset="0.616" stop-color="#8a95a1"/><stop offset="0.784" stop-color="#717a86"/><stop offset="0.917" stop-color="#565e68"/><stop offset="1.000" stop-color="#565e68"/></linearGradient><linearGradient id="r137"><stop offset="0.000" stop-color="#7d8793"/><stop offset="0.014" stop-color="#8b95a2"/><stop offset="0.035" stop-color="#95a0ad"/><stop offset="0.077" stop-color="#9fabb8"/><stop offset="0.147" stop-color="#a6b2c0"/><stop offset="0.259" stop-color="#a7b3c0"/><stop offset="0.421" stop-color="#9ea9b6"/><stop offset="0.617" stop-color="#8994a0"/><stop offset="0.785" stop-color="#707a85"/><stop offset="0.919" stop-color="#565e68"/><stop offset="1.000" stop-color="#565e68"/></linearGradient><linearGradient id="r138"><stop offset="0.000" stop-color="#7d8692"/><stop offset="0.014" stop-color="#8a95a1"/><stop offset="0.035" stop-color="#95a0ad"/><stop offset="0.077" stop-color="#9faab8"/><stop offset="0.148" stop-color="#a6b2bf"/><stop offset="0.260" stop-color="#a6b2c0"/><stop offset="0.422" stop-color="#9da8b6"/><stop offset="0.612" stop-color="#8a94a1"/><stop offset="0.780" stop-color="#717a85"/><stop offset="0.914" stop-color="#565e68"/><stop offset="1.000" stop-color="#565e68"/></linearGradient><linearGradient id="r139"><stop offset="0.000" stop-color="#7c8692"/><stop offset="0.014" stop-color="#8a95a1"/><stop offset="0.035" stop-color="#949fac"/><stop offset="0.078" stop-color="#9eaab7"/><stop offset="0.148" stop-color="#a5b1bf"/><stop offset="0.261" stop-color="#a6b1bf"/><stop offset="0.423" stop-color="#9ca8b5"/><stop offset="0.613" stop-color="#8993a0"/><stop offset="0.782" stop-color="#707985"/><stop offset="0.916" stop-color="#565e68"/><stop offset="1.000" stop-color="#565e68"/></linearGradient><linearGradient id="r140"><stop offset="0.000" stop-color="#7c8692"/><stop offset="0.014" stop-color="#8a94a1"/><stop offset="0.035" stop-color="#949fac"/><stop offset="0.078" stop-color="#9ea9b7"/><stop offset="0.148" stop-color="#a5b0be"/><stop offset="0.261" stop-color="#a5b1bf"/><stop offset="0.424" stop-color="#9ca7b4"/><stop offset="0.615" stop-color="#88939f"/><stop offset="0.784" stop-color="#6f7984"/><stop offset="0.912" stop-color="#565e68"/><stop offset="1.000" stop-color="#565e68"/></linearGradient><linearGradient id="r141"><stop offset="0.000" stop-color="#7c8591"/><stop offset="0.014" stop-color="#8994a0"/><stop offset="0.035" stop-color="#939eab"/><stop offset="0.078" stop-color="#9da9b6"/><stop offset="0.149" stop-color="#a4b0be"/><stop offset="0.262" stop-color="#a4b0be"/><stop offset="0.425" stop-color="#9ba6b4"/><stop offset="0.616" stop-color="#88929e"/><stop offset="0.787" stop-color="#6f7883"/><stop offset="0.914" stop-color="#565e68"/><stop offset="1.000" stop-color="#565e68"/></linearGradient><linearGradient id="r142"><stop offset="0.000" stop-color="#7b8591"/><stop offset="0.014" stop-color="#8993a0"/><stop offset="0.036" stop-color="#939eab"/><stop offset="0.078" stop-color="#9da8b6"/><stop offset="0.149" stop-color="#a4afbd"/><stop offset="0.263" stop-color="#a4b0bd"/><stop offset="0.426" stop-color="#9ba6b3"/><stop offset="0.618" stop-color="#87919e"/><stop offset="0.789" stop-color="#6e7782"/><stop offset="0.910" stop-color="#565e68"/><stop offset="1.000" stop-color="#565e68"/></linearGradient><linearGradient id="r143"><stop offset="0.000" stop-color="#7b8591"/><stop offset="0.014" stop-color="#88939f"/><stop offset="0.036" stop-color="#929daa"/><stop offset="0.078" stop-color="#9ca8b5"/><stop offset="0.150" stop-color="#a3afbc"/><stop offset="0.264" stop-color="#a3afbd"/><stop offset="0.428" stop-color="#9aa5b2"/><stop offset="0.620" stop-color="#86919d"/><stop offset="0.791" stop-color="#6d7681"/><stop offset="0.905" stop-color="#565e68"/><stop offset="1.000" stop-color="#565e68"/></linearGradient><linearGradient id="r144"><stop offset="0.000" stop-color="#7b8490"/><stop offset="0.014" stop-color="#88929f"/><stop offset="0.036" stop-color="#929daa"/><stop offset="0.079" stop-color="#9ca7b4"/><stop offset="0.150" stop-color="#a2aebc"/><stop offset="0.265" stop-color="#a3aebc"/><stop offset="0.429" stop-color="#99a4b2"/><stop offset="0.622" stop-color="#86909c"/><stop offset="0.786" stop-color="#6d7682"/><stop offset="0.908" stop-color="#565e68"/><stop offset="1.000" stop-color="#565e68"/></linearGradient><linearGradient id="r145"><stop offset="0.000" stop-color="#7a8490"/><stop offset="0.014" stop-color="#88929e"/><stop offset="0.036" stop-color="#929ca9"/><stop offset="0.079" stop-color="#9ba7b4"/><stop offset="0.151" stop-color="#a2adbb"/><stop offset="0.265" stop-color="#a2aebb"/><stop offset="0.430" stop-color="#99a4b1"/><stop offset="0.624" stop-color="#858f9b"/><stop offset="0.789" stop-color="#6c7681"/><stop offset="0.904" stop-color="#565e68"/><stop offset="1.000" stop-color="#565e68"/></linearGradient><linearGradient id="r146"><stop offset="0.000" stop-color="#7a848f"/><stop offset="0.014" stop-color="#87919e"/><stop offset="0.036" stop-color="#919ca9"/><stop offset="0.079" stop-color="#9ba6b3"/><stop offset="0.151" stop-color="#a1adba"/><stop offset="0.266" stop-color="#a1adbb"/><stop offset="0.432" stop-color="#98a3b0"/><stop offset="0.626" stop-color="#848e9a"/><stop offset="0.791" stop-color="#6c7580"/><stop offset="0.907" stop-color="#565e68"/><stop offset="1.000" stop-color="#565e68"/></linearGradient><linearGradient id="r147"><stop offset="0.000" stop-color="#7a838f"/><stop offset="0.014" stop-color="#87919d"/><stop offset="0.036" stop-color="#919ba8"/><stop offset="0.079" stop-color="#9aa5b3"/><stop offset="0.152" stop-color="#a1acba"/><stop offset="0.267" stop-color="#a1acba"/><stop offset="0.433" stop-color="#97a2af"/><stop offset="0.628" stop-color="#838d9a"/><stop offset="0.794" stop-color="#6b747f"/><stop offset="0.902" stop-color="#565e68"/><stop offset="1.000" stop-color="#565e68"/></linearGradient><linearGradient id="r148"><stop offset="0.000" stop-color="#79838f"/><stop offset="0.014" stop-color="#86919d"/><stop offset="0.036" stop-color="#909ba8"/><stop offset="0.080" stop-color="#9aa5b2"/><stop offset="0.152" stop-color="#a0acb9"/><stop offset="0.268" stop-color="#a0acb9"/><stop offset="0.435" stop-color="#97a2af"/><stop offset="0.630" stop-color="#838d99"/><stop offset="0.797" stop-color="#6a737e"/><stop offset="0.898" stop-color="#565e68"/><stop offset="1.000" stop-color="#565e68"/></linearGradient><linearGradient id="r149"><stop offset="0.000" stop-color="#79838e"/><stop offset="0.015" stop-color="#86909c"/><stop offset="0.036" stop-color="#909aa7"/><stop offset="0.080" stop-color="#99a4b1"/><stop offset="0.160" stop-color="#a0abb9"/><stop offset="0.284" stop-color="#9faab8"/><stop offset="0.458" stop-color="#949fac"/><stop offset="0.654" stop-color="#7f8995"/><stop offset="0.822" stop-color="#656e78"/><stop offset="0.902" stop-color="#565e68"/><stop offset="1.000" stop-color="#565e68"/></linearGradient><linearGradient id="r150"><stop offset="0.000" stop-color="#79828e"/><stop offset="0.015" stop-color="#85909c"/><stop offset="0.036" stop-color="#8f9aa7"/><stop offset="0.080" stop-color="#99a4b1"/><stop offset="0.161" stop-color="#9fabb8"/><stop offset="0.285" stop-color="#9eaab7"/><stop offset="0.460" stop-color="#939eab"/><stop offset="0.650" stop-color="#7f8995"/><stop offset="0.818" stop-color="#656e79"/><stop offset="0.898" stop-color="#565e68"/><stop offset="1.000" stop-color="#565e68"/></linearGradient><linearGradient id="r151"><stop offset="0.000" stop-color="#78828e"/><stop offset="0.015" stop-color="#858f9b"/><stop offset="0.037" stop-color="#8f99a6"/><stop offset="0.081" stop-color="#98a3b0"/><stop offset="0.161" stop-color="#9eaab7"/><stop offset="0.286" stop-color="#9ea9b6"/><stop offset="0.462" stop-color="#939daa"/><stop offset="0.652" stop-color="#7e8894"/><stop offset="0.821" stop-color="#646d78"/><stop offset="0.894" stop-color="#565e68"/><stop offset="1.000" stop-color="#565e68"/></linearGradient><linearGradient id="r152"><stop offset="0.000" stop-color="#78828d"/><stop offset="0.015" stop-color="#848f9b"/><stop offset="0.037" stop-color="#8e99a5"/><stop offset="0.081" stop-color="#97a2b0"/><stop offset="0.162" stop-color="#9ea9b7"/><stop offset="0.287" stop-color="#9da8b6"/><stop offset="0.464" stop-color="#929daa"/><stop offset="0.655" stop-color="#7d8793"/><stop offset="0.817" stop-color="#656d78"/><stop offset="0.898" stop-color="#565e68"/><stop offset="1.000" stop-color="#565e68"/></linearGradient><linearGradient id="r153"><stop offset="0.000" stop-color="#78818d"/><stop offset="0.015" stop-color="#848e9a"/><stop offset="0.037" stop-color="#8e98a5"/><stop offset="0.081" stop-color="#97a2af"/><stop offset="0.163" stop-color="#9da9b6"/><stop offset="0.288" stop-color="#9ca8b5"/><stop offset="0.465" stop-color="#919ca9"/><stop offset="0.658" stop-color="#7d8692"/><stop offset="0.820" stop-color="#646c77"/><stop offset="0.894" stop-color="#565e68"/><stop offset="1.000" stop-color="#565e68"/></linearGradient><linearGradient id="r154"><stop offset="0.000" stop-color="#77818d"/><stop offset="0.015" stop-color="#848e9a"/><stop offset="0.037" stop-color="#8d98a4"/><stop offset="0.082" stop-color="#96a1ae"/><stop offset="0.163" stop-color="#9ca8b5"/><stop offset="0.289" stop-color="#9ca7b4"/><stop offset="0.467" stop-color="#909ba8"/><stop offset="0.660" stop-color="#7c8591"/><stop offset="0.824" stop-color="#636b76"/><stop offset="0.890" stop-color="#565e68"/><stop offset="1.000" stop-color="#565e68"/></linearGradient><linearGradient id="r155"><stop offset="0.000" stop-color="#77818c"/><stop offset="0.015" stop-color="#838d99"/><stop offset="0.037" stop-color="#8c97a4"/><stop offset="0.082" stop-color="#96a1ae"/><stop offset="0.164" stop-color="#9ca7b4"/><stop offset="0.291" stop-color="#9ba6b3"/><stop offset="0.469" stop-color="#909aa7"/><stop offset="0.663" stop-color="#7b8590"/><stop offset="0.827" stop-color="#626a75"/><stop offset="0.894" stop-color="#565e68"/><stop offset="1.000" stop-color="#565e68"/></linearGradient><linearGradient id="r156"><stop offset="0.000" stop-color="#77808c"/><stop offset="0.015" stop-color="#838d99"/><stop offset="0.037" stop-color="#8c96a3"/><stop offset="0.082" stop-color="#95a0ad"/><stop offset="0.165" stop-color="#9ba6b4"/><stop offset="0.292" stop-color="#9aa5b3"/><stop offset="0.472" stop-color="#8f99a6"/><stop offset="0.666" stop-color="#7a848f"/><stop offset="0.831" stop-color="#616974"/><stop offset="0.891" stop-color="#565e68"/><stop offset="1.000" stop-color="#565e68"/></linearGradient><linearGradient id="r157"><stop offset="0.000" stop-color="#76808b"/><stop offset="0.015" stop-color="#828c98"/><stop offset="0.038" stop-color="#8b96a2"/><stop offset="0.083" stop-color="#949fac"/><stop offset="0.165" stop-color="#9aa6b3"/><stop offset="0.293" stop-color="#99a5b2"/><stop offset="0.474" stop-color="#8e99a5"/><stop offset="0.669" stop-color="#79838e"/><stop offset="0.835" stop-color="#606872"/><stop offset="0.888" stop-color="#565e68"/><stop offset="1.000" stop-color="#565e68"/></linearGradient><linearGradient id="r158"><stop offset="0.000" stop-color="#767f8b"/><stop offset="0.015" stop-color="#828c98"/><stop offset="0.038" stop-color="#8b95a2"/><stop offset="0.091" stop-color="#95a0ad"/><stop offset="0.181" stop-color="#9aa5b3"/><stop offset="0.317" stop-color="#98a3b0"/><stop offset="0.506" stop-color="#8a95a1"/><stop offset="0.695" stop-color="#757e8a"/><stop offset="0.854" stop-color="#5c646e"/><stop offset="0.884" stop-color="#565e68"/><stop offset="1.000" stop-color="#565e68"/></linearGradient><linearGradient id="r159"><stop offset="0.000" stop-color="#767f8b"/><stop offset="0.015" stop-color="#818b97"/><stop offset="0.038" stop-color="#8a95a1"/><stop offset="0.091" stop-color="#949fac"/><stop offset="0.182" stop-color="#99a5b2"/><stop offset="0.319" stop-color="#97a2af"/><stop offset="0.509" stop-color="#8a94a0"/><stop offset="0.699" stop-color="#747d89"/><stop offset="0.858" stop-color="#5b636d"/><stop offset="0.889" stop-color="#565e68"/><stop offset="1.000" stop-color="#565e68"/></linearGradient><linearGradient id="r160"><stop offset="0.000" stop-color="#757f8a"/><stop offset="0.015" stop-color="#818b97"/><stop offset="0.038" stop-color="#8a94a1"/><stop offset="0.092" stop-color="#939eab"/><stop offset="0.183" stop-color="#99a4b1"/><stop offset="0.321" stop-color="#96a1ae"/><stop offset="0.504" stop-color="#8994a0"/><stop offset="0.695" stop-color="#747d89"/><stop offset="0.855" stop-color="#5b636d"/><stop offset="0.886" stop-color="#565e68"/><stop offset="1.000" stop-color="#565e68"/></linearGradient><linearGradient id="r161"><stop offset="0.000" stop-color="#757e8a"/><stop offset="0.015" stop-color="#808a96"/><stop offset="0.038" stop-color="#8994a0"/><stop offset="0.092" stop-color="#939eab"/><stop offset="0.184" stop-color="#98a3b0"/><stop offset="0.322" stop-color="#95a0ad"/><stop offset="0.507" stop-color="#88939f"/><stop offset="0.699" stop-color="#737c88"/><stop offset="0.860" stop-color="#5a626c"/><stop offset="0.890" stop-color="#565e68"/><stop offset="1.000" stop-color="#565e68"/></linearGradient><linearGradient id="r162"><stop offset="0.000" stop-color="#747e89"/><stop offset="0.015" stop-color="#808a96"/><stop offset="0.039" stop-color="#89939f"/><stop offset="0.093" stop-color="#929daa"/><stop offset="0.185" stop-color="#97a2af"/><stop offset="0.324" stop-color="#95a0ac"/><stop offset="0.509" stop-color="#88929e"/><stop offset="0.702" stop-color="#727b87"/><stop offset="0.864" stop-color="#58606b"/><stop offset="0.888" stop-color="#565e68"/><stop offset="1.000" stop-color="#565e68"/></linearGradient><linearGradient id="r163"><stop offset="0.000" stop-color="#747d89"/><stop offset="0.016" stop-color="#7f8995"/><stop offset="0.039" stop-color="#88929f"/><stop offset="0.093" stop-color="#919ca9"/><stop offset="0.186" stop-color="#96a2af"/><stop offset="0.326" stop-color="#949fac"/><stop offset="0.512" stop-color="#87919d"/><stop offset="0.706" stop-color="#717a86"/><stop offset="0.877" stop-color="#565e68"/><stop offset="1.000" stop-color="#565e68"/></linearGradient><linearGradient id="r164"><stop offset="0.000" stop-color="#747d88"/><stop offset="0.016" stop-color="#7f8894"/><stop offset="0.039" stop-color="#87929e"/><stop offset="0.094" stop-color="#919ca8"/><stop offset="0.187" stop-color="#96a1ae"/><stop offset="0.328" stop-color="#939eab"/><stop offset="0.515" stop-color="#86909c"/><stop offset="0.710" stop-color="#707984"/><stop offset="0.874" stop-color="#565e68"/><stop offset="1.000" stop-color="#565e68"/></linearGradient><linearGradient id="r165"><stop offset="0.000" stop-color="#737d88"/><stop offset="0.016" stop-color="#7e8894"/><stop offset="0.039" stop-color="#87919d"/><stop offset="0.094" stop-color="#909ba8"/><stop offset="0.188" stop-color="#95a0ad"/><stop offset="0.330" stop-color="#929daa"/><stop offset="0.518" stop-color="#858f9b"/><stop offset="0.715" stop-color="#6f7883"/><stop offset="0.872" stop-color="#565e68"/><stop offset="1.000" stop-color="#565e68"/></linearGradient><linearGradient id="r166"><stop offset="0.000" stop-color="#737c88"/><stop offset="0.016" stop-color="#7e8793"/><stop offset="0.040" stop-color="#86909d"/><stop offset="0.095" stop-color="#8f9aa7"/><stop offset="0.190" stop-color="#949fac"/><stop offset="0.332" stop-color="#919ca9"/><stop offset="0.522" stop-color="#848e9a"/><stop offset="0.719" stop-color="#6e7782"/><stop offset="0.877" stop-color="#565e68"/><stop offset="1.000" stop-color="#565e68"/></linearGradient><linearGradient id="r167"><stop offset="0.000" stop-color="#727c87"/><stop offset="0.016" stop-color="#7d8793"/><stop offset="0.040" stop-color="#86909c"/><stop offset="0.095" stop-color="#8f99a6"/><stop offset="0.191" stop-color="#939eab"/><stop offset="0.334" stop-color="#909ba8"/><stop offset="0.525" stop-color="#838d99"/><stop offset="0.724" stop-color="#6d7681"/><stop offset="0.875" stop-color="#565e68"/><stop offset="1.000" stop-color="#565e68"/></linearGradient><linearGradient id="r168"><stop offset="0.000" stop-color="#727b87"/><stop offset="0.024" stop-color="#808a96"/><stop offset="0.064" stop-color="#8a94a1"/><stop offset="0.136" stop-color="#919ca8"/><stop offset="0.256" stop-color="#929daa"/><stop offset="0.432" stop-color="#8a94a1"/><stop offset="0.632" stop-color="#77818c"/><stop offset="0.817" stop-color="#5e6771"/><stop offset="0.873" stop-color="#565e68"/><stop offset="1.000" stop-color="#565e68"/></linearGradient><linearGradient id="r169"><stop offset="0.000" stop-color="#727b86"/><stop offset="0.024" stop-color="#7f8995"/><stop offset="0.064" stop-color="#8994a0"/><stop offset="0.137" stop-color="#909ba8"/><stop offset="0.258" stop-color="#919ca9"/><stop offset="0.435" stop-color="#8993a0"/><stop offset="0.637" stop-color="#76808b"/><stop offset="0.822" stop-color="#5d6570"/><stop offset="0.870" stop-color="#565e68"/><stop offset="1.000" stop-color="#565e68"/></linearGradient><linearGradient id="r170"><stop offset="0.000" stop-color="#717a86"/><stop offset="0.024" stop-color="#7f8995"/><stop offset="0.065" stop-color="#88939f"/><stop offset="0.138" stop-color="#8f9aa7"/><stop offset="0.260" stop-color="#909ba8"/><stop offset="0.438" stop-color="#88929f"/><stop offset="0.641" stop-color="#757f8a"/><stop offset="0.820" stop-color="#5d6570"/><stop offset="0.868" stop-color="#565e68"/><stop offset="1.000" stop-color="#565e68"/></linearGradient><linearGradient id="r171"><stop offset="0.000" stop-color="#717a85"/><stop offset="0.025" stop-color="#7e8894"/><stop offset="0.065" stop-color="#88929e"/><stop offset="0.139" stop-color="#8f99a6"/><stop offset="0.262" stop-color="#909aa7"/><stop offset="0.441" stop-color="#87919d"/><stop offset="0.646" stop-color="#747d89"/><stop offset="0.826" stop-color="#5c646e"/><stop offset="0.867" stop-color="#565e68"/><stop offset="1.000" stop-color="#565e68"/></linearGradient><linearGradient id="r172"><stop offset="0.000" stop-color="#707a85"/><stop offset="0.025" stop-color="#7e8893"/><stop offset="0.066" stop-color="#87919e"/><stop offset="0.148" stop-color="#8e99a5"/><stop offset="0.280" stop-color="#8e99a6"/><stop offset="0.461" stop-color="#858f9b"/><stop offset="0.667" stop-color="#717a85"/><stop offset="0.848" stop-color="#58606a"/><stop offset="0.890" stop-color="#565e68"/><stop offset="1.000" stop-color="#565e68"/></linearGradient><linearGradient id="r173"><stop offset="0.000" stop-color="#707984"/><stop offset="0.025" stop-color="#7d8793"/><stop offset="0.066" stop-color="#86919d"/><stop offset="0.149" stop-color="#8d98a5"/><stop offset="0.282" stop-color="#8d98a5"/><stop offset="0.465" stop-color="#848e9a"/><stop offset="0.672" stop-color="#707984"/><stop offset="0.863" stop-color="#565e68"/><stop offset="1.000" stop-color="#565e68"/></linearGradient><linearGradient id="r174"><stop offset="0.000" stop-color="#6f7984"/><stop offset="0.025" stop-color="#7c8692"/><stop offset="0.067" stop-color="#86909c"/><stop offset="0.151" stop-color="#8c97a4"/><stop offset="0.284" stop-color="#8c97a4"/><stop offset="0.468" stop-color="#838d99"/><stop offset="0.669" stop-color="#6f7984"/><stop offset="0.862" stop-color="#565e68"/><stop offset="1.000" stop-color="#565e68"/></linearGradient><linearGradient id="r175"><stop offset="0.000" stop-color="#6f7883"/><stop offset="0.025" stop-color="#7c8691"/><stop offset="0.067" stop-color="#858f9b"/><stop offset="0.152" stop-color="#8c96a3"/><stop offset="0.287" stop-color="#8b96a3"/><stop offset="0.472" stop-color="#818c98"/><stop offset="0.675" stop-color="#6e7783"/><stop offset="0.860" stop-color="#565e68"/><stop offset="1.000" stop-color="#565e68"/></linearGradient><linearGradient id="r176"><stop offset="0.000" stop-color="#6f7883"/><stop offset="0.026" stop-color="#7b8591"/><stop offset="0.068" stop-color="#848e9b"/><stop offset="0.153" stop-color="#8b95a2"/><stop offset="0.289" stop-color="#8b95a2"/><stop offset="0.476" stop-color="#808a96"/><stop offset="0.680" stop-color="#6d7681"/><stop offset="0.859" stop-color="#565e68"/><stop offset="1.000" stop-color="#565e68"/></linearGradient><linearGradient id="r177"><stop offset="0.000" stop-color="#6e7782"/><stop offset="0.026" stop-color="#7b8490"/><stop offset="0.069" stop-color="#838e9a"/><stop offset="0.154" stop-color="#8a94a1"/><stop offset="0.292" stop-color="#8a94a0"/><stop offset="0.481" stop-color="#7f8995"/><stop offset="0.686" stop-color="#6c7580"/><stop offset="0.849" stop-color="#565e68"/><stop offset="1.000" stop-color="#565e68"/></linearGradient><linearGradient id="r178"><stop offset="0.000" stop-color="#6e7782"/><stop offset="0.026" stop-color="#7a848f"/><stop offset="0.069" stop-color="#838d99"/><stop offset="0.156" stop-color="#8993a0"/><stop offset="0.294" stop-color="#89939f"/><stop offset="0.485" stop-color="#7e8894"/><stop offset="0.693" stop-color="#6a737e"/><stop offset="0.848" stop-color="#565e68"/><stop offset="1.000" stop-color="#565e68"/></linearGradient><linearGradient id="r179"><stop offset="0.000" stop-color="#6d7681"/><stop offset="0.009" stop-color="#717a85"/><stop offset="0.017" stop-color="#76808b"/><stop offset="0.052" stop-color="#7f8995"/><stop offset="0.122" stop-color="#87919d"/><stop offset="0.245" stop-color="#8993a0"/><stop offset="0.419" stop-color="#828c98"/><stop offset="0.629" stop-color="#717a85"/><stop offset="0.821" stop-color="#59616b"/><stop offset="0.856" stop-color="#565e68"/><stop offset="1.000" stop-color="#565e68"/></linearGradient><linearGradient id="r180"><stop offset="0.000" stop-color="#6d7681"/><stop offset="0.009" stop-color="#707984"/><stop offset="0.018" stop-color="#757f8a"/><stop offset="0.053" stop-color="#7f8894"/><stop offset="0.124" stop-color="#86909c"/><stop offset="0.247" stop-color="#88929e"/><stop offset="0.424" stop-color="#818b97"/><stop offset="0.635" stop-color="#6f7984"/><stop offset="0.829" stop-color="#58606a"/><stop offset="0.882" stop-color="#565e68"/><stop offset="1.000" stop-color="#565e68"/></linearGradient><linearGradient id="r181"><stop offset="0.000" stop-color="#6c7580"/><stop offset="0.009" stop-color="#6f7984"/><stop offset="0.018" stop-color="#757e8a"/><stop offset="0.053" stop-color="#7e8894"/><stop offset="0.125" stop-color="#858f9b"/><stop offset="0.250" stop-color="#87919d"/><stop offset="0.428" stop-color="#808a96"/><stop offset="0.642" stop-color="#6e7782"/><stop offset="0.847" stop-color="#565e68"/><stop offset="1.000" stop-color="#565e68"/></linearGradient><linearGradient id="r182"><stop offset="0.000" stop-color="#6c7580"/><stop offset="0.009" stop-color="#6f7883"/><stop offset="0.018" stop-color="#747e89"/><stop offset="0.054" stop-color="#7d8793"/><stop offset="0.126" stop-color="#848e9a"/><stop offset="0.252" stop-color="#86909c"/><stop offset="0.432" stop-color="#7e8894"/><stop offset="0.648" stop-color="#6d7681"/><stop offset="0.837" stop-color="#565e68"/><stop offset="1.000" stop-color="#565e68"/></linearGradient><linearGradient id="r183"><stop offset="0.000" stop-color="#6b747f"/><stop offset="0.009" stop-color="#6e7782"/><stop offset="0.018" stop-color="#747d88"/><stop offset="0.055" stop-color="#7c8692"/><stop offset="0.127" stop-color="#838d99"/><stop offset="0.255" stop-color="#858f9b"/><stop offset="0.437" stop-color="#7d8793"/><stop offset="0.655" stop-color="#6b747f"/><stop offset="0.837" stop-color="#565e68"/><stop offset="1.000" stop-color="#565e68"/></linearGradient><linearGradient id="r184"><stop offset="0.000" stop-color="#6b747f"/><stop offset="0.009" stop-color="#6e7782"/><stop offset="0.018" stop-color="#737c88"/><stop offset="0.055" stop-color="#7b8591"/><stop offset="0.138" stop-color="#838d99"/><stop offset="0.276" stop-color="#838d9a"/><stop offset="0.469" stop-color="#7a8490"/><stop offset="0.681" stop-color="#68717c"/><stop offset="0.837" stop-color="#565e68"/><stop offset="1.000" stop-color="#565e68"/></linearGradient><linearGradient id="r185"><stop offset="0.000" stop-color="#6a737e"/><stop offset="0.009" stop-color="#6d7681"/><stop offset="0.019" stop-color="#727c87"/><stop offset="0.056" stop-color="#7b8490"/><stop offset="0.140" stop-color="#828c98"/><stop offset="0.279" stop-color="#828c98"/><stop offset="0.475" stop-color="#79838e"/><stop offset="0.689" stop-color="#666f7a"/><stop offset="0.828" stop-color="#565e68"/><stop offset="1.000" stop-color="#565e68"/></linearGradient><linearGradient id="r186"><stop offset="0.000" stop-color="#6a737e"/><stop offset="0.009" stop-color="#6c7580"/><stop offset="0.019" stop-color="#727b86"/><stop offset="0.057" stop-color="#7a848f"/><stop offset="0.141" stop-color="#818b97"/><stop offset="0.283" stop-color="#818b97"/><stop offset="0.480" stop-color="#78818d"/><stop offset="0.697" stop-color="#656e78"/><stop offset="0.829" stop-color="#565e68"/><stop offset="1.000" stop-color="#565e68"/></linearGradient><linearGradient id="r187"><stop offset="0.000" stop-color="#69727d"/><stop offset="0.010" stop-color="#6c7580"/><stop offset="0.019" stop-color="#717a85"/><stop offset="0.057" stop-color="#79838e"/><stop offset="0.143" stop-color="#808a96"/><stop offset="0.286" stop-color="#808a96"/><stop offset="0.486" stop-color="#76808b"/><stop offset="0.706" stop-color="#636c77"/><stop offset="0.830" stop-color="#565e68"/><stop offset="1.000" stop-color="#565e68"/></linearGradient><linearGradient id="r188"><stop offset="0.000" stop-color="#69727d"/><stop offset="0.010" stop-color="#6b747f"/><stop offset="0.019" stop-color="#707985"/><stop offset="0.058" stop-color="#78828e"/><stop offset="0.145" stop-color="#7f8995"/><stop offset="0.290" stop-color="#7f8995"/><stop offset="0.493" stop-color="#757f8a"/><stop offset="0.715" stop-color="#626a75"/><stop offset="0.821" stop-color="#565e68"/><stop offset="1.000" stop-color="#565e68"/></linearGradient><linearGradient id="r189"><stop offset="0.000" stop-color="#68717c"/><stop offset="0.010" stop-color="#6a737e"/><stop offset="0.020" stop-color="#6f7984"/><stop offset="0.059" stop-color="#77818d"/><stop offset="0.147" stop-color="#7e8893"/><stop offset="0.294" stop-color="#7e8893"/><stop offset="0.499" stop-color="#747d89"/><stop offset="0.724" stop-color="#606973"/><stop offset="0.822" stop-color="#565e68"/><stop offset="1.000" stop-color="#565e68"/></linearGradient><linearGradient id="r190"><stop offset="0.000" stop-color="#68717b"/><stop offset="0.010" stop-color="#6a737e"/><stop offset="0.020" stop-color="#6f7883"/><stop offset="0.060" stop-color="#77808c"/><stop offset="0.149" stop-color="#7d8792"/><stop offset="0.298" stop-color="#7c8692"/><stop offset="0.506" stop-color="#727c87"/><stop offset="0.735" stop-color="#5f6771"/><stop offset="0.814" stop-color="#565e68"/><stop offset="1.000" stop-color="#565e68"/></linearGradient><linearGradient id="r191"><stop offset="0.000" stop-color="#67707b"/><stop offset="0.010" stop-color="#69727d"/><stop offset="0.020" stop-color="#6e7782"/><stop offset="0.060" stop-color="#767f8b"/><stop offset="0.151" stop-color="#7c8591"/><stop offset="0.302" stop-color="#7b8591"/><stop offset="0.514" stop-color="#717a85"/><stop offset="0.745" stop-color="#5d656f"/><stop offset="0.816" stop-color="#565e68"/><stop offset="1.000" stop-color="#565e68"/></linearGradient><linearGradient id="r192"><stop offset="0.000" stop-color="#676f7a"/><stop offset="0.010" stop-color="#68717c"/><stop offset="0.020" stop-color="#6d7681"/><stop offset="0.061" stop-color="#757e8a"/><stop offset="0.153" stop-color="#7b8490"/><stop offset="0.307" stop-color="#7a848f"/><stop offset="0.521" stop-color="#6f7984"/><stop offset="0.746" stop-color="#5c646f"/><stop offset="0.808" stop-color="#565e68"/><stop offset="1.000" stop-color="#565e68"/></linearGradient><linearGradient id="r193"><stop offset="0.000" stop-color="#666f7a"/><stop offset="0.010" stop-color="#68707b"/><stop offset="0.021" stop-color="#6d7681"/><stop offset="0.062" stop-color="#747d89"/><stop offset="0.156" stop-color="#79838f"/><stop offset="0.312" stop-color="#79828e"/><stop offset="0.530" stop-color="#6e7782"/><stop offset="0.758" stop-color="#5a626d"/><stop offset="0.810" stop-color="#565e68"/><stop offset="1.000" stop-color="#565e68"/></linearGradient><linearGradient id="r194"><stop offset="0.000" stop-color="#666e79"/><stop offset="0.011" stop-color="#67707a"/><stop offset="0.021" stop-color="#6c7580"/><stop offset="0.063" stop-color="#737c88"/><stop offset="0.158" stop-color="#78828e"/><stop offset="0.317" stop-color="#77818d"/><stop offset="0.539" stop-color="#6c7580"/><stop offset="0.771" stop-color="#58616b"/><stop offset="0.813" stop-color="#565e68"/><stop offset="1.000" stop-color="#565e68"/></linearGradient><linearGradient id="r195"><stop offset="0.000" stop-color="#656e78"/><stop offset="0.011" stop-color="#666f7a"/><stop offset="0.021" stop-color="#6b747f"/><stop offset="0.064" stop-color="#727b87"/><stop offset="0.172" stop-color="#77818d"/><stop offset="0.344" stop-color="#757f8a"/><stop offset="0.569" stop-color="#69727d"/><stop offset="0.795" stop-color="#565e68"/><stop offset="1.000" stop-color="#565e68"/></linearGradient><linearGradient id="r196"><stop offset="0.000" stop-color="#646d78"/><stop offset="0.011" stop-color="#656e79"/><stop offset="0.022" stop-color="#6a737e"/><stop offset="0.066" stop-color="#717a86"/><stop offset="0.175" stop-color="#76808b"/><stop offset="0.350" stop-color="#747d89"/><stop offset="0.580" stop-color="#68707b"/><stop offset="0.799" stop-color="#565e68"/><stop offset="1.000" stop-color="#565e68"/></linearGradient><linearGradient id="r197"><stop offset="0.000" stop-color="#646c77"/><stop offset="0.011" stop-color="#646d78"/><stop offset="0.022" stop-color="#69727d"/><stop offset="0.067" stop-color="#707985"/><stop offset="0.178" stop-color="#757f8a"/><stop offset="0.357" stop-color="#737c87"/><stop offset="0.591" stop-color="#666f79"/><stop offset="0.792" stop-color="#565e68"/><stop offset="1.000" stop-color="#565e68"/></linearGradient><linearGradient id="r198"><stop offset="0.000" stop-color="#636c76"/><stop offset="0.011" stop-color="#646c77"/><stop offset="0.023" stop-color="#69717c"/><stop offset="0.068" stop-color="#6f7884"/><stop offset="0.182" stop-color="#747d89"/><stop offset="0.364" stop-color="#717a86"/><stop offset="0.603" stop-color="#646d78"/><stop offset="0.785" stop-color="#565e68"/><stop offset="1.000" stop-color="#565e68"/></linearGradient><linearGradient id="r199"><stop offset="0.000" stop-color="#636b76"/><stop offset="0.012" stop-color="#636b76"/><stop offset="0.023" stop-color="#68717b"/><stop offset="0.081" stop-color="#6f7883"/><stop offset="0.209" stop-color="#737c87"/><stop offset="0.407" stop-color="#6e7783"/><stop offset="0.650" stop-color="#606873"/><stop offset="0.778" stop-color="#565e68"/><stop offset="1.000" stop-color="#565e68"/></linearGradient><linearGradient id="r200"><stop offset="0.000" stop-color="#626a75"/><stop offset="0.012" stop-color="#626a75"/><stop offset="0.024" stop-color="#67707a"/><stop offset="0.083" stop-color="#6e7782"/><stop offset="0.214" stop-color="#717b86"/><stop offset="0.416" stop-color="#6d7681"/><stop offset="0.665" stop-color="#5e6671"/><stop offset="0.772" stop-color="#565e68"/><stop offset="1.000" stop-color="#565e68"/></linearGradient><linearGradient id="r201"><stop offset="0.000" stop-color="#616a74"/><stop offset="0.012" stop-color="#616974"/><stop offset="0.024" stop-color="#666f7a"/><stop offset="0.085" stop-color="#6d7681"/><stop offset="0.219" stop-color="#707985"/><stop offset="0.426" stop-color="#6b747f"/><stop offset="0.681" stop-color="#5c646e"/><stop offset="0.766" stop-color="#565e68"/><stop offset="1.000" stop-color="#565e68"/></linearGradient><linearGradient id="r202"><stop offset="0.000" stop-color="#616974"/><stop offset="0.012" stop-color="#606973"/><stop offset="0.025" stop-color="#656e79"/><stop offset="0.087" stop-color="#6c7580"/><stop offset="0.224" stop-color="#6f7883"/><stop offset="0.436" stop-color="#69727d"/><stop offset="0.698" stop-color="#5a626c"/><stop offset="0.760" stop-color="#565e68"/><stop offset="1.000" stop-color="#565e68"/></linearGradient><linearGradient id="r203"><stop offset="0.000" stop-color="#606873"/><stop offset="0.013" stop-color="#5f6872"/><stop offset="0.026" stop-color="#646d78"/><stop offset="0.090" stop-color="#6b747f"/><stop offset="0.230" stop-color="#6d7681"/><stop offset="0.448" stop-color="#68707b"/><stop offset="0.717" stop-color="#58606a"/><stop offset="0.781" stop-color="#565e68"/><stop offset="1.000" stop-color="#565e68"/></linearGradient><linearGradient id="r204"><stop offset="0.000" stop-color="#5f6872"/><stop offset="0.013" stop-color="#5f6772"/><stop offset="0.026" stop-color="#636c76"/><stop offset="0.092" stop-color="#69727d"/><stop offset="0.237" stop-color="#6c7580"/><stop offset="0.461" stop-color="#666f79"/><stop offset="0.751" stop-color="#565e68"/><stop offset="1.000" stop-color="#565e68"/></linearGradient><linearGradient id="r205"><stop offset="0.000" stop-color="#5e6771"/><stop offset="0.014" stop-color="#5e6671"/><stop offset="0.027" stop-color="#626b75"/><stop offset="0.095" stop-color="#68717c"/><stop offset="0.258" stop-color="#6a737e"/><stop offset="0.502" stop-color="#636b76"/><stop offset="0.733" stop-color="#565e68"/><stop offset="1.000" stop-color="#565e68"/></linearGradient><linearGradient id="r206"><stop offset="0.000" stop-color="#5e6670"/><stop offset="0.014" stop-color="#5d6670"/><stop offset="0.042" stop-color="#636c76"/><stop offset="0.140" stop-color="#68717c"/><stop offset="0.337" stop-color="#67707b"/><stop offset="0.603" stop-color="#5c656f"/><stop offset="0.730" stop-color="#565e68"/><stop offset="1.000" stop-color="#565e68"/></linearGradient><linearGradient id="r207"><stop offset="0.000" stop-color="#5d6570"/><stop offset="0.015" stop-color="#5c656f"/><stop offset="0.044" stop-color="#626b75"/><stop offset="0.145" stop-color="#67707a"/><stop offset="0.349" stop-color="#656e79"/><stop offset="0.625" stop-color="#5a626d"/><stop offset="0.712" stop-color="#565e68"/><stop offset="1.000" stop-color="#565e68"/></linearGradient><linearGradient id="r208"><stop offset="0.000" stop-color="#5c646f"/><stop offset="0.015" stop-color="#5c646e"/><stop offset="0.045" stop-color="#616974"/><stop offset="0.166" stop-color="#666e79"/><stop offset="0.393" stop-color="#636b76"/><stop offset="0.710" stop-color="#565e68"/><stop offset="1.000" stop-color="#565e68"/></linearGradient><linearGradient id="r209"><stop offset="0.000" stop-color="#5b646e"/><stop offset="0.016" stop-color="#5b636d"/><stop offset="0.047" stop-color="#606873"/><stop offset="0.173" stop-color="#646d77"/><stop offset="0.410" stop-color="#616974"/><stop offset="0.694" stop-color="#565e68"/><stop offset="1.000" stop-color="#565e68"/></linearGradient><linearGradient id="r210"><stop offset="0.000" stop-color="#5a636d"/><stop offset="0.017" stop-color="#5a626c"/><stop offset="0.066" stop-color="#606873"/><stop offset="0.215" stop-color="#626b76"/><stop offset="0.479" stop-color="#5d6570"/><stop offset="0.678" stop-color="#565e68"/><stop offset="1.000" stop-color="#565e68"/></linearGradient><linearGradient id="r211"><stop offset="0.000" stop-color="#5a626c"/><stop offset="0.017" stop-color="#59616b"/><stop offset="0.070" stop-color="#5e6771"/><stop offset="0.244" stop-color="#616974"/><stop offset="0.540" stop-color="#5a626c"/><stop offset="0.662" stop-color="#565e68"/><stop offset="1.000" stop-color="#565e68"/></linearGradient><linearGradient id="r212"><stop offset="0.000" stop-color="#59616b"/><stop offset="0.018" stop-color="#58606a"/><stop offset="0.092" stop-color="#5d6670"/><stop offset="0.296" stop-color="#5e6771"/><stop offset="0.647" stop-color="#565e68"/><stop offset="1.000" stop-color="#565e68"/></linearGradient><linearGradient id="r213"><stop offset="0.000" stop-color="#58606a"/><stop offset="0.020" stop-color="#575f69"/><stop offset="0.099" stop-color="#5c646e"/><stop offset="0.316" stop-color="#5c646f"/><stop offset="0.613" stop-color="#565e68"/><stop offset="1.000" stop-color="#565e68"/></linearGradient><linearGradient id="r214"><stop offset="0.000" stop-color="#565f69"/><stop offset="0.043" stop-color="#57606a"/><stop offset="0.171" stop-color="#5b636d"/><stop offset="0.471" stop-color="#575f69"/><stop offset="1.000" stop-color="#565e68"/></linearGradient><linearGradient id="r215"><stop offset="0.000" stop-color="#565e68"/><stop offset="0.236" stop-color="#59616b"/><stop offset="0.565" stop-color="#565e68"/><stop offset="1.000" stop-color="#565e68"/></linearGradient><linearGradient id="r216"><stop offset="0.000" stop-color="#565e68"/><stop offset="1.000" stop-color="#565e68"/></linearGradient><linearGradient id="r217"><stop offset="0.000" stop-color="#565e68"/><stop offset="1.000" stop-color="#565e68"/></linearGradient><linearGradient id="r218"><stop offset="0.000" stop-color="#565e68"/><stop offset="1.000" stop-color="#565e68"/></linearGradient><linearGradient id="r219"><stop offset="0.000" stop-color="#565e68"/><stop offset="1.000" stop-color="#565e68"/></linearGradient><radialGradient id="gw1" cx="0.5" cy="0.5" r="0.5"><stop offset="0" stop-color="#f0f6fc" stop-opacity="1"/><stop offset="0.2" stop-color="#e8f0f9" stop-opacity="0.92"/><stop offset="0.4" stop-color="#dce6f2" stop-opacity="0.7"/><stop offset="0.62" stop-color="#d0dbe8" stop-opacity="0.38"/><stop offset="0.82" stop-color="#c8d2de" stop-opacity="0.12"/><stop offset="1" stop-color="#c8d2dc" stop-opacity="0"/></radialGradient>
<radialGradient id="gw2" cx="0.5" cy="0.5" r="0.5"><stop offset="0" stop-color="#f8fcfc" stop-opacity="1"/><stop offset="0.5" stop-color="#f4f8fa" stop-opacity="0.6"/><stop offset="1" stop-color="#f0f4f8" stop-opacity="0"/></radialGradient><clipPath id="sc"><circle cx="1131.4" cy="610.8" r="219.2"/></clipPath></defs><g clip-path="url(#sc)"><rect x="1105.2" y="391" width="52.5" height="2" fill="url(#r0)"/><rect x="1091.4" y="393" width="79.9" height="2" fill="url(#r1)"/><rect x="1081.5" y="395" width="99.7" height="2" fill="url(#r2)"/><rect x="1073.4" y="397" width="115.9" height="2" fill="url(#r3)"/><rect x="1066.4" y="399" width="130.0" height="2" fill="url(#r4)"/><rect x="1060.1" y="401" width="142.5" height="2" fill="url(#r5)"/><rect x="1054.4" y="403" width="153.9" height="2" fill="url(#r6)"/><rect x="1049.2" y="405" width="164.4" height="2" fill="url(#r7)"/><rect x="1044.3" y="407" width="174.2" height="2" fill="url(#r8)"/><rect x="1039.7" y="409" width="183.3" height="2" fill="url(#r9)"/><rect x="1035.4" y="411" width="191.9" height="2" fill="url(#r10)"/><rect x="1031.4" y="413" width="200.1" height="2" fill="url(#r11)"/><rect x="1027.5" y="415" width="207.8" height="2" fill="url(#r12)"/><rect x="1023.8" y="417" width="215.2" height="2" fill="url(#r13)"/><rect x="1020.2" y="419" width="222.3" height="2" fill="url(#r14)"/><rect x="1016.9" y="421" width="229.1" height="2" fill="url(#r15)"/><rect x="1013.6" y="423" width="235.6" height="2" fill="url(#r16)"/><rect x="1010.5" y="425" width="241.9" height="2" fill="url(#r17)"/><rect x="1007.4" y="427" width="247.9" height="2" fill="url(#r18)"/><rect x="1004.5" y="429" width="253.8" height="2" fill="url(#r19)"/><rect x="1001.7" y="431" width="259.4" height="2" fill="url(#r20)"/><rect x="999.0" y="433" width="264.9" height="2" fill="url(#r21)"/><rect x="996.3" y="435" width="270.1" height="2" fill="url(#r22)"/><rect x="993.8" y="437" width="275.3" height="2" fill="url(#r23)"/><rect x="991.3" y="439" width="280.2" height="2" fill="url(#r24)"/><rect x="988.9" y="441" width="285.1" height="2" fill="url(#r25)"/><rect x="986.5" y="443" width="289.8" height="2" fill="url(#r26)"/><rect x="984.2" y="445" width="294.3" height="2" fill="url(#r27)"/><rect x="982.0" y="447" width="298.8" height="2" fill="url(#r28)"/><rect x="979.9" y="449" width="303.1" height="2" fill="url(#r29)"/><rect x="977.8" y="451" width="307.3" height="2" fill="url(#r30)"/><rect x="975.7" y="453" width="311.4" height="2" fill="url(#r31)"/><rect x="973.7" y="455" width="315.4" height="2" fill="url(#r32)"/><rect x="971.8" y="457" width="319.3" height="2" fill="url(#r33)"/><rect x="969.9" y="459" width="323.1" height="2" fill="url(#r34)"/><rect x="968.0" y="461" width="326.8" height="2" fill="url(#r35)"/><rect x="966.2" y="463" width="330.4" height="2" fill="url(#r36)"/><rect x="964.5" y="465" width="333.9" height="2" fill="url(#r37)"/><rect x="962.7" y="467" width="337.3" height="2" fill="url(#r38)"/><rect x="961.1" y="469" width="340.7" height="2" fill="url(#r39)"/><rect x="959.4" y="471" width="343.9" height="2" fill="url(#r40)"/><rect x="957.8" y="473" width="347.1" height="2" fill="url(#r41)"/><rect x="956.3" y="475" width="350.3" height="2" fill="url(#r42)"/><rect x="954.8" y="477" width="353.3" height="2" fill="url(#r43)"/><rect x="953.3" y="479" width="356.3" height="2" fill="url(#r44)"/><rect x="951.8" y="481" width="359.2" height="2" fill="url(#r45)"/><rect x="950.4" y="483" width="362.0" height="2" fill="url(#r46)"/><rect x="949.0" y="485" width="364.8" height="2" fill="url(#r47)"/><rect x="947.7" y="487" width="367.5" height="2" fill="url(#r48)"/><rect x="946.3" y="489" width="370.1" height="2" fill="url(#r49)"/><rect x="945.0" y="491" width="372.7" height="2" fill="url(#r50)"/><rect x="943.8" y="493" width="375.2" height="2" fill="url(#r51)"/><rect x="942.6" y="495" width="377.7" height="2" fill="url(#r52)"/><rect x="941.4" y="497" width="380.1" height="2" fill="url(#r53)"/><rect x="940.2" y="499" width="382.4" height="2" fill="url(#r54)"/><rect x="939.0" y="501" width="384.7" height="2" fill="url(#r55)"/><rect x="937.9" y="503" width="387.0" height="2" fill="url(#r56)"/><rect x="936.8" y="505" width="389.1" height="2" fill="url(#r57)"/><rect x="935.8" y="507" width="391.3" height="2" fill="url(#r58)"/><rect x="934.7" y="509" width="393.3" height="2" fill="url(#r59)"/><rect x="933.7" y="511" width="395.3" height="2" fill="url(#r60)"/><rect x="932.7" y="513" width="397.3" height="2" fill="url(#r61)"/><rect x="931.8" y="515" width="399.2" height="2" fill="url(#r62)"/><rect x="930.8" y="517" width="401.1" height="2" fill="url(#r63)"/><rect x="929.9" y="519" width="402.9" height="2" fill="url(#r64)"/><rect x="929.1" y="521" width="404.7" height="2" fill="url(#r65)"/><rect x="928.2" y="523" width="406.4" height="2" fill="url(#r66)"/><rect x="927.4" y="525" width="408.1" height="2" fill="url(#r67)"/><rect x="926.5" y="527" width="409.7" height="2" fill="url(#r68)"/><rect x="925.7" y="529" width="411.3" height="2" fill="url(#r69)"/><rect x="925.0" y="531" width="412.9" height="2" fill="url(#r70)"/><rect x="924.2" y="533" width="414.4" height="2" fill="url(#r71)"/><rect x="923.5" y="535" width="415.8" height="2" fill="url(#r72)"/><rect x="922.8" y="537" width="417.2" height="2" fill="url(#r73)"/><rect x="922.1" y="539" width="418.6" height="2" fill="url(#r74)"/><rect x="921.4" y="541" width="419.9" height="2" fill="url(#r75)"/><rect x="920.8" y="543" width="421.2" height="2" fill="url(#r76)"/><rect x="920.2" y="545" width="422.4" height="2" fill="url(#r77)"/><rect x="919.6" y="547" width="423.6" height="2" fill="url(#r78)"/><rect x="919.0" y="549" width="424.8" height="2" fill="url(#r79)"/><rect x="918.5" y="551" width="425.9" height="2" fill="url(#r80)"/><rect x="917.9" y="553" width="427.0" height="2" fill="url(#r81)"/><rect x="917.4" y="555" width="428.0" height="2" fill="url(#r82)"/><rect x="916.9" y="557" width="429.0" height="2" fill="url(#r83)"/><rect x="916.4" y="559" width="429.9" height="2" fill="url(#r84)"/><rect x="916.0" y="561" width="430.8" height="2" fill="url(#r85)"/><rect x="915.5" y="563" width="431.7" height="2" fill="url(#r86)"/><rect x="915.1" y="565" width="432.6" height="2" fill="url(#r87)"/><rect x="914.7" y="567" width="433.4" height="2" fill="url(#r88)"/><rect x="914.3" y="569" width="434.1" height="2" fill="url(#r89)"/><rect x="914.0" y="571" width="434.8" height="2" fill="url(#r90)"/><rect x="913.6" y="573" width="435.5" height="2" fill="url(#r91)"/><rect x="913.3" y="575" width="436.2" height="2" fill="url(#r92)"/><rect x="913.0" y="577" width="436.8" height="2" fill="url(#r93)"/><rect x="912.7" y="579" width="437.3" height="2" fill="url(#r94)"/><rect x="912.5" y="581" width="437.9" height="2" fill="url(#r95)"/><rect x="912.2" y="583" width="438.4" height="2" fill="url(#r96)"/><rect x="912.0" y="585" width="438.8" height="2" fill="url(#r97)"/><rect x="911.8" y="587" width="439.2" height="2" fill="url(#r98)"/><rect x="911.6" y="589" width="439.6" height="2" fill="url(#r99)"/><rect x="911.4" y="591" width="440.0" height="2" fill="url(#r100)"/><rect x="911.3" y="593" width="440.3" height="2" fill="url(#r101)"/><rect x="911.1" y="595" width="440.5" height="2" fill="url(#r102)"/><rect x="911.0" y="597" width="440.8" height="2" fill="url(#r103)"/><rect x="910.9" y="599" width="441.0" height="2" fill="url(#r104)"/><rect x="910.8" y="601" width="441.1" height="2" fill="url(#r105)"/><rect x="910.8" y="603" width="441.2" height="2" fill="url(#r106)"/><rect x="910.7" y="605" width="441.3" height="2" fill="url(#r107)"/><rect x="910.7" y="607" width="441.4" height="2" fill="url(#r108)"/><rect x="910.7" y="609" width="441.4" height="2" fill="url(#r109)"/><rect x="910.7" y="611" width="441.4" height="2" fill="url(#r110)"/><rect x="910.7" y="613" width="441.4" height="2" fill="url(#r111)"/><rect x="910.7" y="615" width="441.3" height="2" fill="url(#r112)"/><rect x="910.8" y="617" width="441.2" height="2" fill="url(#r113)"/><rect x="910.9" y="619" width="441.1" height="2" fill="url(#r114)"/><rect x="910.9" y="621" width="440.9" height="2" fill="url(#r115)"/><rect x="911.0" y="623" width="440.7" height="2" fill="url(#r116)"/><rect x="911.2" y="625" width="440.5" height="2" fill="url(#r117)"/><rect x="911.3" y="627" width="440.2" height="2" fill="url(#r118)"/><rect x="911.5" y="629" width="439.9" height="2" fill="url(#r119)"/><rect x="911.6" y="631" width="439.5" height="2" fill="url(#r120)"/><rect x="911.8" y="633" width="439.1" height="2" fill="url(#r121)"/><rect x="912.0" y="635" width="438.7" height="2" fill="url(#r122)"/><rect x="912.3" y="637" width="438.3" height="2" fill="url(#r123)"/><rect x="912.5" y="639" width="437.8" height="2" fill="url(#r124)"/><rect x="912.8" y="641" width="437.2" height="2" fill="url(#r125)"/><rect x="913.1" y="643" width="436.6" height="2" fill="url(#r126)"/><rect x="913.4" y="645" width="436.0" height="2" fill="url(#r127)"/><rect x="913.7" y="647" width="435.4" height="2" fill="url(#r128)"/><rect x="914.1" y="649" width="434.7" height="2" fill="url(#r129)"/><rect x="914.4" y="651" width="434.0" height="2" fill="url(#r130)"/><rect x="914.8" y="653" width="433.2" height="2" fill="url(#r131)"/><rect x="915.2" y="655" width="432.4" height="2" fill="url(#r132)"/><rect x="915.6" y="657" width="431.6" height="2" fill="url(#r133)"/><rect x="916.1" y="659" width="430.7" height="2" fill="url(#r134)"/><rect x="916.5" y="661" width="429.7" height="2" fill="url(#r135)"/><rect x="917.0" y="663" width="428.8" height="2" fill="url(#r136)"/><rect x="917.5" y="665" width="427.8" height="2" fill="url(#r137)"/><rect x="918.0" y="667" width="426.7" height="2" fill="url(#r138)"/><rect x="918.6" y="669" width="425.7" height="2" fill="url(#r139)"/><rect x="919.1" y="671" width="424.5" height="2" fill="url(#r140)"/><rect x="919.7" y="673" width="423.4" height="2" fill="url(#r141)"/><rect x="920.3" y="675" width="422.2" height="2" fill="url(#r142)"/><rect x="920.9" y="677" width="420.9" height="2" fill="url(#r143)"/><rect x="921.6" y="679" width="419.6" height="2" fill="url(#r144)"/><rect x="922.2" y="681" width="418.3" height="2" fill="url(#r145)"/><rect x="922.9" y="683" width="416.9" height="2" fill="url(#r146)"/><rect x="923.6" y="685" width="415.5" height="2" fill="url(#r147)"/><rect x="924.4" y="687" width="414.1" height="2" fill="url(#r148)"/><rect x="925.1" y="689" width="412.6" height="2" fill="url(#r149)"/><rect x="925.9" y="691" width="411.0" height="2" fill="url(#r150)"/><rect x="926.7" y="693" width="409.4" height="2" fill="url(#r151)"/><rect x="927.5" y="695" width="407.8" height="2" fill="url(#r152)"/><rect x="928.4" y="697" width="406.1" height="2" fill="url(#r153)"/><rect x="929.2" y="699" width="404.3" height="2" fill="url(#r154)"/><rect x="930.1" y="701" width="402.6" height="2" fill="url(#r155)"/><rect x="931.0" y="703" width="400.7" height="2" fill="url(#r156)"/><rect x="932.0" y="705" width="398.9" height="2" fill="url(#r157)"/><rect x="932.9" y="707" width="396.9" height="2" fill="url(#r158)"/><rect x="933.9" y="709" width="394.9" height="2" fill="url(#r159)"/><rect x="934.9" y="711" width="392.9" height="2" fill="url(#r160)"/><rect x="936.0" y="713" width="390.8" height="2" fill="url(#r161)"/><rect x="937.1" y="715" width="388.7" height="2" fill="url(#r162)"/><rect x="938.1" y="717" width="386.5" height="2" fill="url(#r163)"/><rect x="939.3" y="719" width="384.3" height="2" fill="url(#r164)"/><rect x="940.4" y="721" width="382.0" height="2" fill="url(#r165)"/><rect x="941.6" y="723" width="379.6" height="2" fill="url(#r166)"/><rect x="942.8" y="725" width="377.2" height="2" fill="url(#r167)"/><rect x="944.0" y="727" width="374.7" height="2" fill="url(#r168)"/><rect x="945.3" y="729" width="372.2" height="2" fill="url(#r169)"/><rect x="946.6" y="731" width="369.6" height="2" fill="url(#r170)"/><rect x="947.9" y="733" width="367.0" height="2" fill="url(#r171)"/><rect x="949.3" y="735" width="364.2" height="2" fill="url(#r172)"/><rect x="950.7" y="737" width="361.5" height="2" fill="url(#r173)"/><rect x="952.1" y="739" width="358.6" height="2" fill="url(#r174)"/><rect x="953.6" y="741" width="355.7" height="2" fill="url(#r175)"/><rect x="955.1" y="743" width="352.7" height="2" fill="url(#r176)"/><rect x="956.6" y="745" width="349.6" height="2" fill="url(#r177)"/><rect x="958.1" y="747" width="346.5" height="2" fill="url(#r178)"/><rect x="959.8" y="749" width="343.3" height="2" fill="url(#r179)"/><rect x="961.4" y="751" width="340.0" height="2" fill="url(#r180)"/><rect x="963.1" y="753" width="336.6" height="2" fill="url(#r181)"/><rect x="964.8" y="755" width="333.2" height="2" fill="url(#r182)"/><rect x="966.6" y="757" width="329.6" height="2" fill="url(#r183)"/><rect x="968.4" y="759" width="326.0" height="2" fill="url(#r184)"/><rect x="970.2" y="761" width="322.3" height="2" fill="url(#r185)"/><rect x="972.2" y="763" width="318.5" height="2" fill="url(#r186)"/><rect x="974.1" y="765" width="314.6" height="2" fill="url(#r187)"/><rect x="976.1" y="767" width="310.6" height="2" fill="url(#r188)"/><rect x="978.2" y="769" width="306.5" height="2" fill="url(#r189)"/><rect x="980.3" y="771" width="302.2" height="2" fill="url(#r190)"/><rect x="982.5" y="773" width="297.9" height="2" fill="url(#r191)"/><rect x="984.7" y="775" width="293.4" height="2" fill="url(#r192)"/><rect x="987.0" y="777" width="288.8" height="2" fill="url(#r193)"/><rect x="989.3" y="779" width="284.1" height="2" fill="url(#r194)"/><rect x="991.8" y="781" width="279.3" height="2" fill="url(#r195)"/><rect x="994.3" y="783" width="274.3" height="2" fill="url(#r196)"/><rect x="996.8" y="785" width="269.1" height="2" fill="url(#r197)"/><rect x="999.5" y="787" width="263.8" height="2" fill="url(#r198)"/><rect x="1002.3" y="789" width="258.3" height="2" fill="url(#r199)"/><rect x="1005.1" y="791" width="252.6" height="2" fill="url(#r200)"/><rect x="1008.0" y="793" width="246.7" height="2" fill="url(#r201)"/><rect x="1011.1" y="795" width="240.6" height="2" fill="url(#r202)"/><rect x="1014.2" y="797" width="234.3" height="2" fill="url(#r203)"/><rect x="1017.5" y="799" width="227.8" height="2" fill="url(#r204)"/><rect x="1020.9" y="801" width="220.9" height="2" fill="url(#r205)"/><rect x="1024.5" y="803" width="213.8" height="2" fill="url(#r206)"/><rect x="1028.2" y="805" width="206.3" height="2" fill="url(#r207)"/><rect x="1032.2" y="807" width="198.5" height="2" fill="url(#r208)"/><rect x="1036.3" y="809" width="190.2" height="2" fill="url(#r209)"/><rect x="1040.6" y="811" width="181.5" height="2" fill="url(#r210)"/><rect x="1045.3" y="813" width="172.3" height="2" fill="url(#r211)"/><rect x="1050.2" y="815" width="162.4" height="2" fill="url(#r212)"/><rect x="1055.5" y="817" width="151.7" height="2" fill="url(#r213)"/><rect x="1061.3" y="819" width="140.1" height="2" fill="url(#r214)"/><rect x="1067.7" y="821" width="127.3" height="2" fill="url(#r215)"/><rect x="1074.9" y="823" width="112.9" height="2" fill="url(#r216)"/><rect x="1083.3" y="825" width="96.1" height="2" fill="url(#r217)"/><rect x="1093.8" y="827" width="75.3" height="2" fill="url(#r218)"/><rect x="1109.0" y="829" width="44.8" height="2" fill="url(#r219)"/><ellipse cx="1077" cy="564" rx="78" ry="76" fill="url(#gw1)"/><ellipse cx="1070" cy="576" rx="40" ry="12" fill="url(#gw2)"/></g>
<g fill="none" stroke="#7e4850" stroke-width="1" shape-rendering="crispEdges">
<path d="M981.5 439.5H1387.5L1281.5 783.5H875.5Z"/>
<path d="M861.5 474.5H1267.5L1401.5 748.5H995.5Z"/>
<path d="M1117.5 302.5L1251.5 575.5L1145.5 920.5L1011.5 646.5Z"/>
</g>
<g shape-rendering="crispEdges">
<path d="M1131.5 611.5L1121.5 591.5" stroke="#30e030" stroke-width="1.3"/>
<path d="M1123.5 594.5h4.5l1 6.5-4 1z" fill="#30e030"/>
<path d="M1131.5 611.5H1162" stroke="#f02828" stroke-width="1.3"/>
<rect x="1149" y="609.5" width="6" height="3.5" fill="#f02828"/>
<path d="M1131.5 611.5L1123.5 636.5" stroke="#30f0f0" stroke-width="1.3"/>
<path d="M1123.5 624.5l4.5 1-1 6.5-4.5-1z" fill="#30f0f0"/>
</g>
<g fill="none" stroke-width="1">
<path d="M1110 578l4.5 5 4.5-5M1114.5 583v5" stroke="#30e030"/>
<path d="M1163 598l9 11M1172 598l-9 11" stroke="#f02828"/>
<path d="M1112.5 638.5h8l-8 10h8" stroke="#30f0f0"/>
</g>
</svg>
<div class="t" style="left:1133px;top:611px;font-size:14.5px;color:#7a4a50;letter-spacing:0.2px">PRT_CSYS_DEF</div>
<div class="a" style="left:920px;top:232px;width:422px;height:32px;background:#f6f8f9;border:1px solid #a4a8aa"></div>
<div class="a" style="left:1211px;top:237px;width:24px;height:24px;background:#dcdfe1;border:1px solid #b8bcbe"></div>
<div class="a" style="left:1237px;top:237px;width:24px;height:24px;background:#dcdfe1;border:1px solid #b8bcbe"></div>
<svg class="a" style="left:927px;top:239px" width="18" height="19" viewBox="0 0 18 19"><rect x="1.5" y="1.5" width="14" height="13" fill="#f8f8f8" stroke="#999"/><circle cx="8" cy="8" r="4.5" fill="#e0f4fc" stroke="#2a80b0" stroke-width="1.3"/><path d="M11 11l5 5" stroke="#888" stroke-width="2.5"/></svg>
<svg class="a" style="left:953px;top:239px" width="18" height="19" viewBox="0 0 18 19"><circle cx="7" cy="7" r="5.5" fill="#fff" stroke="#1e6aa0" stroke-width="1.4"/><path d="M7 3.5v7M3.5 7h7" stroke="#1e5a88" stroke-width="2"/><path d="M11 11l5 5" stroke="#888" stroke-width="2.5"/></svg>
<svg class="a" style="left:979px;top:239px" width="18" height="19" viewBox="0 0 18 19"><circle cx="7" cy="7" r="5.5" fill="#fff" stroke="#1e6aa0" stroke-width="1.4"/><path d="M3.5 7h7" stroke="#1e5a88" stroke-width="2"/><path d="M11 11l5 5" stroke="#888" stroke-width="2.5"/></svg>
<svg class="a" style="left:1005px;top:239px" width="18" height="18" viewBox="0 0 18 18"><rect x="1.5" y="1.5" width="15" height="15" fill="#7ac4e4" stroke="#888"/><path d="M2 16V3h12C10 6 6 10 3 16z" fill="#fff"/><path d="M3 15L15 5" stroke="#1e5a88" stroke-width="1.3"/></svg>
<svg class="a" style="left:1031px;top:239px" width="20" height="19" viewBox="0 0 20 19"><defs><radialGradient id="sb" cx="0.35" cy="0.35" r="0.7"><stop offset="0" stop-color="#fff"/><stop offset="1" stop-color="#888"/></radialGradient></defs><path d="M8 3l3-2h6v9l-3 3H8z" fill="url(#sb)"/><circle cx="6" cy="12" r="5" fill="url(#sb)"/><path d="M20 15l-4 4h4z" fill="#333"/></svg>
<svg class="a" style="left:1057px;top:239px" width="20" height="19" viewBox="0 0 20 19"><path d="M1.5 5.5l4-4h11v11l-4 4h-11z" fill="#fff" stroke="#5ab0d8" stroke-width="1.2"/><path d="M1.5 5.5l4-4h11l-4 4z" fill="#c0e6f6"/><path d="M12.5 5.5l4-4v11l-4 4z" fill="#7ac4e4"/><path d="M20 15l-4 4h4z" fill="#333"/></svg>
<svg class="a" style="left:1083px;top:239px" width="20" height="19" viewBox="0 0 20 19"><path d="M2 7l4-5h7l4 5-4 6H6z" fill="#d0eef8" stroke="#3a9ad0" stroke-width="1.2"/><path d="M2 7h15" stroke="#3a9ad0"/><path d="M11 2l2 5v6" fill="#3a8ab8"/><rect x="10.5" y="9.5" width="5" height="7" fill="#fff" stroke="#666"/><path d="M12 12h2M12 14h2" stroke="#444"/><path d="M20 15l-4 4h4z" fill="#333"/></svg>
<svg class="a" style="left:1109px;top:239px" width="19" height="18" viewBox="0 0 19 18"><path d="M1.5 1.5h12v13h-12zM1.5 5h12M1.5 8h12M1.5 11h12M5 1.5v13" fill="#f8f8f8" stroke="#999" stroke-width=".9"/><path d="M7 10h3l1-2h3l1 2h3v7H7z" fill="#333"/><circle cx="12.5" cy="13" r="2.3" fill="#eee" stroke="#111"/></svg>
<svg class="a" style="left:1135px;top:239px" width="18" height="18" viewBox="0 0 18 18"><path d="M1.5 4.5l5-3h10l-3 12-6 3-5-4z" fill="#bfe4f4" stroke="#3a8ab8" stroke-width="1.2"/><path d="M1.5 4.5h11l4-3M12.5 4.5l1 9" fill="none" stroke="#3a8ab8"/><path d="M3 12l9-4" stroke="#fff"/></svg>
<svg class="a" style="left:1161px;top:239px" width="20" height="19" viewBox="0 0 20 19"><path d="M2 15V5l4-3h9v11" fill="#d8f0fa"/><path d="M15 2v13H2" fill="none" stroke="#999" stroke-dasharray="1 1"/><path d="M2 17L17 2" stroke="#1e5a88" stroke-width="1.5"/><path d="M20 15l-4 4h4z" fill="#333"/></svg>
<svg class="a" style="left:1187px;top:239px" width="20" height="19" viewBox="0 0 20 19"><g stroke="#7a5a22" stroke-width="1.3"><path d="M1 1l4 4M5 1L1 5M10 1l-2 4M7 8l-2 4M4 14l-2 4"/><path d="M10 5v9h6M10 14l-3 3" fill="none"/></g><path d="M20 18l-4 4h4z" fill="#333"/></svg>
<svg class="a" style="left:1213px;top:239px" width="20" height="20" viewBox="0 0 20 20"><rect x="1.5" y="1.5" width="9" height="6" fill="#fdf4d8" stroke="#999"/><path d="M10.5 4h5v6M13 8l2.5 3 2.5-3" fill="none" stroke="#333" stroke-width="1.3"/><ellipse cx="13.5" cy="16" rx="5" ry="2.6" fill="#333"/><circle cx="13.5" cy="16" r="1.3" fill="#fff"/></svg>
<svg class="a" style="left:1239px;top:239px" width="20" height="20" viewBox="0 0 20 20"><path d="M5 4l5 7 7-1M10 11l-5 6" stroke="#333" stroke-width="1" fill="none"/><circle cx="5" cy="4" r="2.8" fill="#6ab86a" stroke="#3a8a3a" stroke-width=".6"/><circle cx="16" cy="10" r="2.8" fill="#e87878" stroke="#b84848" stroke-width=".6"/><circle cx="5" cy="17" r="2.8" fill="#4a90c8" stroke="#2a6aa0" stroke-width=".6"/></svg>
<svg class="a" style="left:1265px;top:239px" width="19" height="19" viewBox="0 0 19 19"><path d="M9 2L2 15h14z" fill="none" stroke="#aaa" stroke-width="2.5"/><path d="M12 11l5 3-5 3z" fill="#ddd" stroke="#aaa"/></svg>
<svg class="a" style="left:1293px;top:240px" width="13" height="15" viewBox="0 0 13 15"><rect x="1" y="1" width="3.5" height="12" fill="#aaa"/><rect x="8" y="1" width="3.5" height="12" fill="#aaa"/></svg>
<svg class="a" style="left:1317px;top:240px" width="18" height="15" viewBox="0 0 18 15"><defs><linearGradient id="gg" x1="0" x2="1"><stop offset="0" stop-color="#ddd"/><stop offset="0.5" stop-color="#bbb"/><stop offset="1" stop-color="#e4e4e4"/></linearGradient></defs><path d="M1 2h16v11H1c4-2 4-9 0-11z" fill="url(#gg)"/></svg>
<div class="t" style="left:1657px;top:944px;font-size:20px;color:#a8a9ac">啟用 <span style="font-size:21.5px;position:relative;top:-0.5px">Windows</span></div>
<div class="t" style="left:1657px;top:969px;font-size:14.5px;color:#a8a9ac">移至 [設定] 以啟用 <span style="font-size:16px;position:relative;top:0px">Windows</span>。</div>
<div class="a" style="left:36px;top:1004px;width:22px;height:24px;background:#dcdfe1;border:1px solid #b4b8ba"></div>
<svg class="a" style="left:38px;top:1007px" width="18" height="18" viewBox="0 0 18 18"><rect x="1.5" y="1.5" width="15" height="14" fill="#fff" stroke="#888"/><path d="M1.5 4.5h15" stroke="#888"/><rect x="2" y="5" width="4" height="10" fill="#cfe8f4" stroke="#1e6aa0"/><ellipse cx="12.5" cy="14" rx="4.5" ry="2.8" fill="#333"/><circle cx="12.5" cy="14" r="1.2" fill="#fff"/></svg>
<svg class="a" style="left:64px;top:1007px" width="19" height="19" viewBox="0 0 19 19"><defs><radialGradient id="gl" cx="0.4" cy="0.35" r="0.7"><stop offset="0" stop-color="#bfe8ff"/><stop offset="0.6" stop-color="#3a9ae0"/><stop offset="1" stop-color="#1e5aa0"/></radialGradient></defs><circle cx="9.5" cy="9.5" r="7" fill="url(#gl)"/><path d="M6 6c2 0 3 2 2 4s1 3 3 2" fill="none" stroke="#2a7a4a" stroke-width="1.2"/><ellipse cx="9.5" cy="9.5" rx="9" ry="4" transform="rotate(-40 9.5 9.5)" fill="none" stroke="#333" stroke-width="1.1"/></svg>
<svg class="a" style="left:90px;top:1007px" width="18" height="18" viewBox="0 0 18 18"><defs><linearGradient id="sq" x1="0" y1="0" x2="0" y2="1"><stop offset="0" stop-color="#fff"/><stop offset="1" stop-color="#cfd8dc"/></linearGradient></defs><rect x="1.5" y="1.5" width="15" height="15" rx="1" fill="url(#sq)" stroke="#2a6a9a" stroke-width="1.1"/></svg>
<div class="a" style="left:119px;top:1004px;width:1px;height:24px;background:#a8acae"></div>
<div class="a" style="left:1624px;top:1002px;width:1px;height:27px;background:#a8acae"></div>
<div class="a" style="left:1628px;top:1002px;width:1px;height:27px;background:#a8acae"></div>
<div class="a" style="left:1676px;top:1002px;width:1px;height:27px;background:#a8acae"></div>
<div class="a" style="left:1632px;top:1004px;width:42px;height:24px;background:#f8fafb;border:1px solid #b8bcbe"></div>
<div class="a" style="left:1659px;top:1005px;width:1px;height:22px;background:#c8cccf"></div>
<svg class="a" style="left:1637px;top:1008px" width="18" height="17" viewBox="0 0 18 17"><defs><linearGradient id="bn" x1="0" x2="1"><stop offset="0" stop-color="#222"/><stop offset="0.5" stop-color="#aaa"/><stop offset="1" stop-color="#222"/></linearGradient></defs><path d="M2 5h5v11H1z" fill="url(#bn)"/><path d="M11 5h5l1 11h-6z" fill="url(#bn)"/><rect x="3" y="1" width="3" height="5" fill="#333"/><rect x="12" y="1" width="3" height="5" fill="#333"/><rect x="6" y="6" width="6" height="4" fill="#444"/></svg>
<svg class="a" style="left:1662px;top:1014px" width="9" height="6" viewBox="0 0 9 6"><path d="M0 0h9L4.5 5z" fill="#555"/></svg>
<div class="a" style="left:1767px;top:1004px;width:165px;height:24px;background:#f8f9fa;border:1px solid #b0b4b6"></div>
<div class="a" style="left:1916px;top:1005px;width:1px;height:22px;background:#c4c8ca"></div>
<svg class="a" style="left:1919px;top:1014px" width="9" height="6" viewBox="0 0 9 6"><path d="M0 0h9L4.5 5z" fill="#555"/></svg>
<div class="t" style="left:1775px;top:1009.5px;font-size:12px;color:#333;">幾何</div>
<svg class="a" style="left:47px;top:1044px" width="28" height="25" viewBox="0 0 28 25"><defs><radialGradient id="sun" cx="0.4" cy="0.4" r="0.6"><stop offset="0" stop-color="#ffc830"/><stop offset="1" stop-color="#f07818"/></radialGradient><linearGradient id="cl" x1="0" y1="0" x2="0" y2="1"><stop offset="0" stop-color="#e8f2fc"/><stop offset="1" stop-color="#8ab8e8"/></linearGradient></defs><circle cx="19" cy="8.5" r="6.3" fill="url(#sun)"/><path d="M6 22.5a4.8 4.8 0 0 1 0-9.6 6.8 6.8 0 0 1 12.4-2.4 5.2 5.2 0 0 1 5.6 5.6 3.2 3.2 0 0 1 0 6.4z" fill="url(#cl)"/></svg>
<div class="t" style="left:80.5px;top:1043.5px;font-size:11.5px;color:#1a1a1a;">21°C</div>
<div class="t" style="left:80.5px;top:1059px;font-size:12px;color:#333;">多雲時陰</div>
<svg class="a" style="left:756px;top:1044px" width="25" height="25" viewBox="0 0 25 25"><defs><linearGradient id="wl" x1="0" y1="0" x2="1" y2="1"><stop offset="0" stop-color="#3ac8f8"/><stop offset="1" stop-color="#1a6ad8"/></linearGradient></defs><g fill="url(#wl)"><rect x="1" y="1" width="11" height="11"/><rect x="13" y="1" width="11" height="11"/><rect x="1" y="13" width="11" height="11"/><rect x="13" y="13" width="11" height="11"/></g></svg>
<div class="a" style="left:794px;top:1041px;width:218px;height:31px;border-radius:16px;background:#f3f6fc;border:1px solid #d4dae4"></div>
<svg class="a" style="left:803px;top:1048px" width="18" height="18" viewBox="0 0 18 18"><circle cx="7.5" cy="7.5" r="5.5" fill="none" stroke="#1a1a1a" stroke-width="1.7"/><path d="M11.5 11.5l4.5 4.5" stroke="#1a1a1a" stroke-width="1.9" stroke-linecap="round"/></svg>
<div class="t" style="left:830.5px;top:1050px;font-size:13px;color:#555;">搜尋</div>
<svg class="a" style="left:958px;top:1043px" width="52" height="28" viewBox="0 0 52 28"><ellipse cx="28" cy="22" rx="22" ry="5" fill="#8cc850"/><path d="M40 22c0-8-2-14-8-16-3-3-7-2-8 1-2 3 0 6 1 8-2 3-2 6-1 8z" fill="#a8703a"/><circle cx="30" cy="6" r="3.5" fill="#8a5a2a"/><path d="M40 22c3 0 6-2 8-1" stroke="#6a4020" stroke-width="2" fill="none"/><g fill="#f8c820"><circle cx="9" cy="16" r="2.5"/><circle cx="14" cy="15" r="2"/></g><path d="M42 18l4-5 3 3 3-2v6z" fill="#4a70b0"/></svg>
<svg class="a" style="left:1023px;top:1044px" width="27" height="25" viewBox="0 0 27 25"><rect x="9" y="1" width="16" height="16" fill="#f4f4f4" stroke="#ddd"/><rect x="1" y="8" width="16" height="16" fill="#1a1a1a"/><rect x="9" y="8" width="8" height="9" fill="#bdbdbd"/></svg>
<svg class="a" style="left:1068px;top:1043px" width="26" height="26" viewBox="0 0 26 26"><defs><linearGradient id="tm" x1="0" y1="0" x2="1" y2="1"><stop offset="0" stop-color="#a080e8"/><stop offset="1" stop-color="#5a48c0"/></linearGradient></defs><path d="M13 2a11 11 0 1 1-7 19.5L2 24l1.5-5A11 11 0 0 1 13 2z" fill="url(#tm)"/><rect x="7" y="9" width="9" height="8" rx="1.5" fill="#fff"/><path d="M16 12l4-2.5v7l-4-2.5z" fill="#fff"/></svg>
<svg class="a" style="left:1112px;top:1043px" width="26" height="26" viewBox="0 0 26 26"><defs><linearGradient id="ed1" x1="0" y1="0" x2="1" y2="1"><stop offset="0" stop-color="#48e0a0"/><stop offset="0.5" stop-color="#30a8e0"/><stop offset="1" stop-color="#1a5ab8"/></linearGradient></defs><circle cx="13" cy="13" r="12" fill="url(#ed1)"/><path d="M6 15c0-5 4-8 8-8 4 0 7 3 6 6h-9c0 3 3 5 7 5 2 0 4-1 5-2-2 5-6 7-10 7-4 0-7-3-7-8z" fill="#f4f8fc" opacity="0.9"/><path d="M8 16c1-4 4-6 7-5-3 1-4 3-4 5 0 4 4 6 9 5-3 3-12 3-12-5z" fill="#1a62c0"/></svg>
<svg class="a" style="left:1155px;top:1044px" width="27" height="24" viewBox="0 0 27 24"><path d="M1 2h9l3 3h13v17H1z" fill="#f0b820"/><path d="M1 7h25v15H1z" fill="#ffd84a"/><rect x="7" y="15" width="13" height="5" fill="#2a7ad8"/></svg>
<div class="a" style="left:1194px;top:1037px;width:35px;height:37px;border-radius:5px;background:#eef2fa;border:1px solid #dfe4ee"></div>
<svg class="a" style="left:1199px;top:1043px" width="26" height="26" viewBox="0 0 26 26"><rect x="1.5" y="1.5" width="23" height="23" fill="#f4f4f4" stroke="#444"/><path d="M4 4h18v18H4z" fill="#fff" stroke="#777"/><rect x="11" y="4" width="11" height="12" fill="#3a9ae0"/><path d="M8 4v14h14" fill="none" stroke="#444" stroke-width="1.2"/></svg>
<div class="a" style="left:1203px;top:1073px;width:19px;height:3px;border-radius:2px;background:#2a7ad8"></div>
<svg class="a" style="left:1699px;top:1050px" width="14" height="9" viewBox="0 0 14 9"><path d="M1.5 7.5l5.5-5.5 5.5 5.5" fill="none" stroke="#222" stroke-width="1.4"/></svg>
<svg class="a" style="left:1729px;top:1046px" width="19" height="20" viewBox="0 0 19 20"><path d="M3 9a6.5 6.5 0 0 1 12-3M16 11a6.5 6.5 0 0 1-12 3" fill="none" stroke="#222" stroke-width="1.3"/><path d="M15 2v4h-4M4 18v-4h4" fill="none" stroke="#222" stroke-width="1.3"/><circle cx="13" cy="15" r="3.8" fill="#e81010"/></svg>
<div class="t" style="left:1762px;top:1048px;font-size:15px;color:#1a1a1a;">英</div>
<svg class="a" style="left:1793px;top:1046px" width="19" height="20" viewBox="0 0 19 20"><rect x="1.5" y="4.5" width="11" height="9" fill="none" stroke="#222" stroke-width="1.2"/><path d="M5 17.5h8M7 13.5v4" stroke="#222" stroke-width="1.2"/><rect x="13.5" y="1.5" width="4" height="5" rx="1" fill="none" stroke="#222"/><path d="M15.5 6.5v11h-3" fill="none" stroke="#222" stroke-width="1.1"/></svg>
<svg class="a" style="left:1817px;top:1047px" width="19" height="17" viewBox="0 0 19 17"><path d="M1.5 6h3l4-4v13l-4-4h-3z" fill="none" stroke="#222" stroke-width="1.2"/><path d="M11 5.5c1.5 1.5 1.5 4.5 0 6" fill="none" stroke="#222" stroke-width="1.1"/><path d="M13.5 3.5c2.5 2.5 2.5 7.5 0 10M16 1.5c3.5 3.5 3.5 10.5 0 14" fill="none" stroke="#bbb" stroke-width="1"/></svg>
<svg class="a" style="left:1840px;top:1046px" width="20" height="19" viewBox="0 0 20 19"><rect x="1.5" y="5.5" width="14" height="9" rx="1" fill="#222"/><rect x="15.5" y="8" width="2.5" height="4" fill="#222"/><path d="M3 1l2 5M1 3l5 1" stroke="#222" stroke-width="1.2"/></svg>
<div class="t" style="left:1875.5px;top:1043px;font-size:12px;color:#1a1a1a;">下午 04:03</div>
<div class="t" style="left:1882.5px;top:1058.5px;font-size:12.5px;color:#1a1a1a;">2024/2/2</div>
</body></html>
